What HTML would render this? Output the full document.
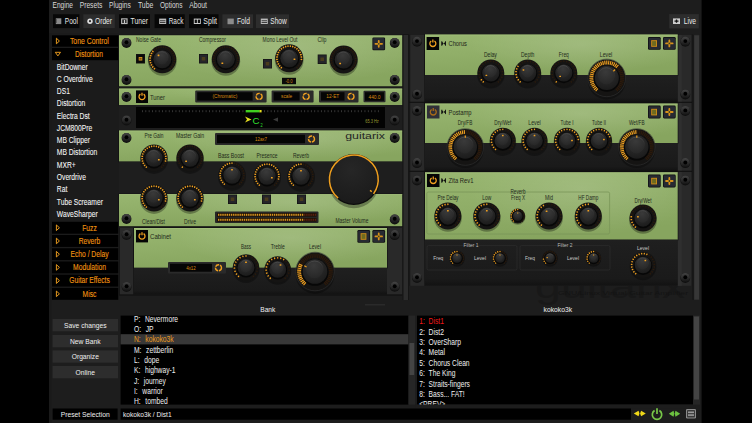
<!DOCTYPE html><html><head><meta charset="utf-8"><style>html,body{margin:0;padding:0;background:#000;overflow:hidden}svg{display:block}</style></head><body><svg width="752" height="423" viewBox="0 0 752 423" style="font-family:&quot;Liberation Sans&quot;, sans-serif">
<defs>
<linearGradient id="gg" x1="0" y1="0" x2="0.3" y2="1"><stop offset="0" stop-color="#98b670"/><stop offset="0.5" stop-color="#90ae68"/><stop offset="1" stop-color="#87a55f"/></linearGradient>
<radialGradient id="kg" cx="0.45" cy="0.3" r="0.75"><stop offset="0" stop-color="#333"/><stop offset="1" stop-color="#1a1a1a"/></radialGradient>
<radialGradient id="kc" cx="0.45" cy="0.25" r="0.8"><stop offset="0" stop-color="#3a3a3a"/><stop offset="1" stop-color="#262626"/></radialGradient>
<radialGradient id="kg2" cx="0.45" cy="0.3" r="0.75"><stop offset="0" stop-color="#262626"/><stop offset="1" stop-color="#1a1a1a"/></radialGradient>
<linearGradient id="sg" x1="0" y1="0" x2="0" y2="1"><stop offset="0" stop-color="#444"/><stop offset="0.55" stop-color="#2a2a2a"/><stop offset="1" stop-color="#121212"/></linearGradient>
<radialGradient id="gh" cx="0.62" cy="0.25" r="0.45" gradientTransform="translate(0.62 0.25) scale(1 1.6) translate(-0.62 -0.25)"><stop offset="0" stop-color="#fff" stop-opacity="0.13"/><stop offset="1" stop-color="#fff" stop-opacity="0"/></radialGradient>
<linearGradient id="bd" x1="0" y1="0" x2="0" y2="1"><stop offset="0" stop-color="#1f1f1f"/><stop offset="0.85" stop-color="#1a1a1a"/><stop offset="1" stop-color="#121212"/></linearGradient>
<linearGradient id="krim" x1="0" y1="0" x2="0" y2="1"><stop offset="0" stop-color="#555"/><stop offset="0.5" stop-color="#333" stop-opacity="0.3"/><stop offset="1" stop-color="#000" stop-opacity="0"/></linearGradient>
</defs>
<rect x="0.00" y="0.00" width="752.00" height="423.00" fill="#000" />
<rect x="49.00" y="0.00" width="652.60" height="423.00" fill="#1d1d1d" />
<text x="52.50" y="8.00" font-size="8.2" fill="#d8d8d8" text-anchor="start" textLength="20.50" lengthAdjust="spacingAndGlyphs" >Engine</text>
<text x="79.70" y="8.00" font-size="8.2" fill="#d8d8d8" text-anchor="start" textLength="22.70" lengthAdjust="spacingAndGlyphs" >Presets</text>
<text x="109.00" y="8.00" font-size="8.2" fill="#d8d8d8" text-anchor="start" textLength="21.80" lengthAdjust="spacingAndGlyphs" >Plugins</text>
<text x="137.90" y="8.00" font-size="8.2" fill="#d8d8d8" text-anchor="start" textLength="15.40" lengthAdjust="spacingAndGlyphs" >Tube</text>
<text x="160.00" y="8.00" font-size="8.2" fill="#d8d8d8" text-anchor="start" textLength="22.50" lengthAdjust="spacingAndGlyphs" >Options</text>
<text x="189.20" y="8.00" font-size="8.2" fill="#d8d8d8" text-anchor="start" textLength="17.80" lengthAdjust="spacingAndGlyphs" >About</text>
<rect x="53.00" y="14.30" width="26.40" height="13.80" fill="#070707" />
<rect x="55.80" y="18.30" width="5.50" height="5.80" fill="#8a8a8a" />
<rect x="55.80" y="19.50" width="1.20" height="1.00" fill="#333" />
<rect x="55.80" y="21.50" width="1.20" height="1.00" fill="#333" />
<text x="64.80" y="24.20" font-size="8.2" fill="#e8e8e8" text-anchor="start" textLength="13.10" lengthAdjust="spacingAndGlyphs" >Pool</text>
<rect x="83.30" y="14.30" width="31.50" height="13.80" fill="#2d2d2d" />
<circle cx="90.0" cy="21.2" r="2.7" fill="#e0e0e0"/>
<circle cx="90.0" cy="21.2" r="1.1" fill="#2d2d2d"/>
<text x="95.00" y="24.20" font-size="8.2" fill="#e8e8e8" text-anchor="start" textLength="17.00" lengthAdjust="spacingAndGlyphs" >Order</text>
<rect x="119.00" y="14.30" width="31.00" height="13.80" fill="#070707" />
<rect x="121.10" y="18.30" width="6.50" height="5.80" fill="#bbb" />
<rect x="122.20" y="19.40" width="4.30" height="3.60" fill="#222" />
<rect x="123.90" y="20.00" width="1.20" height="3.00" fill="#ccc" />
<text x="130.60" y="24.20" font-size="8.2" fill="#e8e8e8" text-anchor="start" textLength="17.30" lengthAdjust="spacingAndGlyphs" >Tuner</text>
<rect x="154.60" y="14.30" width="30.10" height="13.80" fill="#070707" />
<rect x="159.20" y="18.60" width="7.00" height="5.40" fill="#bbb" />
<rect x="160.00" y="20.30" width="5.40" height="0.90" fill="#333" />
<rect x="160.00" y="22.10" width="5.40" height="0.90" fill="#333" />
<text x="168.70" y="24.20" font-size="8.2" fill="#e8e8e8" text-anchor="start" textLength="14.70" lengthAdjust="spacingAndGlyphs" >Rack</text>
<rect x="189.00" y="14.30" width="29.50" height="13.80" fill="#070707" />
<rect x="193.80" y="18.60" width="7.00" height="5.40" fill="#ccc" />
<rect x="194.70" y="19.60" width="2.20" height="3.40" fill="#111" />
<rect x="197.80" y="19.60" width="2.20" height="3.40" fill="#111" />
<text x="203.30" y="24.20" font-size="8.2" fill="#e8e8e8" text-anchor="start" textLength="13.70" lengthAdjust="spacingAndGlyphs" >Split</text>
<rect x="222.40" y="14.30" width="30.60" height="13.80" fill="#2d2d2d" />
<rect x="227.50" y="18.60" width="6.30" height="5.60" fill="#8c8c8c" />
<text x="237.00" y="24.20" font-size="8.2" fill="#e8e8e8" text-anchor="start" textLength="13.00" lengthAdjust="spacingAndGlyphs" >Fold</text>
<rect x="256.00" y="14.30" width="33.00" height="13.80" fill="#2d2d2d" />
<rect x="260.80" y="18.60" width="7.00" height="5.40" fill="#bbb" />
<rect x="261.60" y="20.30" width="5.40" height="0.90" fill="#333" />
<rect x="261.60" y="22.10" width="5.40" height="0.90" fill="#333" />
<text x="270.30" y="24.20" font-size="8.2" fill="#e8e8e8" text-anchor="start" textLength="16.50" lengthAdjust="spacingAndGlyphs" >Show</text>
<rect x="669.20" y="14.10" width="29.60" height="14.30" fill="#2d2d2d" />
<rect x="673.00" y="18.40" width="7.00" height="5.60" fill="#ccc" />
<path d="M674.5,21.2 L678.5,21.2 M676.5,19.6 L676.5,22.8" stroke="#111" stroke-width="1.3"/>
<text x="683.80" y="24.20" font-size="8.2" fill="#e8e8e8" text-anchor="start" textLength="12.30" lengthAdjust="spacingAndGlyphs" >Live</text>
<rect x="49.00" y="33.00" width="2.50" height="390.00" fill="#1a1a1a" />
<rect x="51.50" y="33.00" width="67.00" height="267.00" fill="#1b1b1b" />
<rect x="52.00" y="35.30" width="66.20" height="11.40" fill="#000" />
<path d="M56.4,38.2 L59.4,41.0 L56.4,43.8 Z" fill="none" stroke="#f0a020" stroke-width="0.95"/>
<text x="69.90" y="43.80" font-size="8.3" fill="#f09410" text-anchor="start" textLength="38.90" lengthAdjust="spacingAndGlyphs" stroke="#f09410" stroke-width="0.12">Tone Control</text>
<rect x="52.00" y="48.00" width="66.20" height="12.20" fill="#000" />
<path d="M55.3,52.300000000000004 L60.5,52.300000000000004 L57.9,55.9 Z" fill="none" stroke="#f0a020" stroke-width="0.95"/>
<text x="75.00" y="56.90" font-size="8.3" fill="#f09410" text-anchor="start" textLength="28.00" lengthAdjust="spacingAndGlyphs" stroke="#f09410" stroke-width="0.12">Distortion</text>
<text x="56.80" y="69.60" font-size="8.3" fill="#f4f4f4" text-anchor="start" textLength="31.01" lengthAdjust="spacingAndGlyphs" stroke="#f4f4f4" stroke-width="0.08">BitDowner</text>
<text x="56.80" y="81.87" font-size="8.3" fill="#f4f4f4" text-anchor="start" textLength="35.86" lengthAdjust="spacingAndGlyphs" stroke="#f4f4f4" stroke-width="0.08">C Overdrive</text>
<text x="56.80" y="94.14" font-size="8.3" fill="#f4f4f4" text-anchor="start" textLength="13.08" lengthAdjust="spacingAndGlyphs" stroke="#f4f4f4" stroke-width="0.08">DS1</text>
<text x="56.80" y="106.41" font-size="8.3" fill="#f4f4f4" text-anchor="start" textLength="28.39" lengthAdjust="spacingAndGlyphs" stroke="#f4f4f4" stroke-width="0.08">Distortion</text>
<text x="56.80" y="118.68" font-size="8.3" fill="#f4f4f4" text-anchor="start" textLength="32.88" lengthAdjust="spacingAndGlyphs" stroke="#f4f4f4" stroke-width="0.08">Electra Dst</text>
<text x="56.80" y="130.95" font-size="8.3" fill="#f4f4f4" text-anchor="start" textLength="35.49" lengthAdjust="spacingAndGlyphs" stroke="#f4f4f4" stroke-width="0.08">JCM800Pre</text>
<text x="56.80" y="143.22" font-size="8.3" fill="#f4f4f4" text-anchor="start" textLength="33.25" lengthAdjust="spacingAndGlyphs" stroke="#f4f4f4" stroke-width="0.08">MB Clipper</text>
<text x="56.80" y="155.49" font-size="8.3" fill="#f4f4f4" text-anchor="start" textLength="40.35" lengthAdjust="spacingAndGlyphs" stroke="#f4f4f4" stroke-width="0.08">MB Distortion</text>
<text x="56.80" y="167.76" font-size="8.3" fill="#f4f4f4" text-anchor="start" textLength="18.87" lengthAdjust="spacingAndGlyphs" stroke="#f4f4f4" stroke-width="0.08">MXR+</text>
<text x="56.80" y="180.03" font-size="8.3" fill="#f4f4f4" text-anchor="start" textLength="29.14" lengthAdjust="spacingAndGlyphs" stroke="#f4f4f4" stroke-width="0.08">Overdrive</text>
<text x="56.80" y="192.30" font-size="8.3" fill="#f4f4f4" text-anchor="start" textLength="10.46" lengthAdjust="spacingAndGlyphs" stroke="#f4f4f4" stroke-width="0.08">Rat</text>
<text x="56.80" y="204.57" font-size="8.3" fill="#f4f4f4" text-anchor="start" textLength="46.08" lengthAdjust="spacingAndGlyphs" stroke="#f4f4f4" stroke-width="0.08">Tube Screamer</text>
<text x="56.80" y="216.84" font-size="8.3" fill="#f4f4f4" text-anchor="start" textLength="40.85" lengthAdjust="spacingAndGlyphs" stroke="#f4f4f4" stroke-width="0.08">WaveSharper</text>
<rect x="52.00" y="221.80" width="66.20" height="11.90" fill="#000" />
<path d="M56.4,224.95 L59.4,227.75 L56.4,230.55 Z" fill="none" stroke="#f0a020" stroke-width="0.95"/>
<text x="82.23" y="230.55" font-size="8.3" fill="#f09410" text-anchor="start" textLength="14.54" lengthAdjust="spacingAndGlyphs" stroke="#f09410" stroke-width="0.12">Fuzz</text>
<rect x="52.00" y="235.02" width="66.20" height="11.90" fill="#000" />
<path d="M56.4,238.17000000000002 L59.4,240.97000000000003 L56.4,243.77000000000004 Z" fill="none" stroke="#f0a020" stroke-width="0.95"/>
<text x="78.69" y="243.77" font-size="8.3" fill="#f09410" text-anchor="start" textLength="21.62" lengthAdjust="spacingAndGlyphs" stroke="#f09410" stroke-width="0.12">Reverb</text>
<rect x="52.00" y="248.24" width="66.20" height="11.90" fill="#000" />
<path d="M56.4,251.39 L59.4,254.19 L56.4,256.99 Z" fill="none" stroke="#f0a020" stroke-width="0.95"/>
<text x="70.49" y="256.99" font-size="8.3" fill="#f09410" text-anchor="start" textLength="38.03" lengthAdjust="spacingAndGlyphs" stroke="#f09410" stroke-width="0.12">Echo / Delay</text>
<rect x="52.00" y="261.46" width="66.20" height="11.90" fill="#000" />
<path d="M56.4,264.61 L59.4,267.41 L56.4,270.21000000000004 Z" fill="none" stroke="#f0a020" stroke-width="0.95"/>
<text x="73.09" y="270.21" font-size="8.3" fill="#f09410" text-anchor="start" textLength="32.81" lengthAdjust="spacingAndGlyphs" stroke="#f09410" stroke-width="0.12">Modulation</text>
<rect x="52.00" y="274.68" width="66.20" height="11.90" fill="#000" />
<path d="M56.4,277.83 L59.4,280.63 L56.4,283.43 Z" fill="none" stroke="#f0a020" stroke-width="0.95"/>
<text x="69.24" y="283.43" font-size="8.3" fill="#f09410" text-anchor="start" textLength="40.51" lengthAdjust="spacingAndGlyphs" stroke="#f09410" stroke-width="0.12">Guitar Effects</text>
<rect x="52.00" y="287.90" width="66.20" height="11.90" fill="#000" />
<path d="M56.4,291.05 L59.4,293.85 L56.4,296.65000000000003 Z" fill="none" stroke="#f0a020" stroke-width="0.95"/>
<text x="82.61" y="296.65" font-size="8.3" fill="#f09410" text-anchor="start" textLength="13.79" lengthAdjust="spacingAndGlyphs" stroke="#f09410" stroke-width="0.12">Misc</text>
<rect x="119.00" y="34.00" width="283.50" height="261.00" fill="#1c1c1c" />
<rect x="118.40" y="34.90" width="284.60" height="52.00" fill="#101010" />
<rect x="119.00" y="35.50" width="283.40" height="50.80" fill="url(#gg)" />
<rect x="119.00" y="35.50" width="283.40" height="50.80" fill="url(#gh)" />
<rect x="119.00" y="35.50" width="283.40" height="0.80" fill="#a4c07c" />
<circle cx="126.5" cy="43.0" r="4.8999999999999995" fill="#101010"/>
<circle cx="126.5" cy="42.5" r="4.6" fill="url(#sg)"/>
<circle cx="126.5" cy="42.3" r="1.93" fill="#000"/>
<circle cx="126.5" cy="80.0" r="4.8999999999999995" fill="#101010"/>
<circle cx="126.5" cy="79.5" r="4.6" fill="url(#sg)"/>
<circle cx="126.5" cy="79.3" r="1.93" fill="#000"/>
<circle cx="394.7" cy="43.0" r="4.8999999999999995" fill="#101010"/>
<circle cx="394.7" cy="42.5" r="4.6" fill="url(#sg)"/>
<circle cx="394.7" cy="42.3" r="1.93" fill="#000"/>
<circle cx="394.7" cy="80.0" r="4.8999999999999995" fill="#101010"/>
<circle cx="394.7" cy="79.5" r="4.6" fill="url(#sg)"/>
<circle cx="394.7" cy="79.3" r="1.93" fill="#000"/>
<text x="136.00" y="41.80" font-size="6.4" fill="#222a1a" text-anchor="start" textLength="25.00" lengthAdjust="spacingAndGlyphs" >Noise Gate</text>
<text x="199.00" y="41.80" font-size="6.4" fill="#222a1a" text-anchor="start" textLength="27.00" lengthAdjust="spacingAndGlyphs" >Compressor</text>
<text x="262.50" y="41.80" font-size="6.4" fill="#222a1a" text-anchor="start" textLength="35.00" lengthAdjust="spacingAndGlyphs" >Mono Level Out</text>
<text x="317.50" y="41.80" font-size="6.4" fill="#222a1a" text-anchor="start" textLength="9.00" lengthAdjust="spacingAndGlyphs" >Clip</text>
<rect x="136.00" y="54.00" width="9.00" height="9.50" fill="#141414" />
<rect x="136.70" y="54.70" width="7.60" height="8.10" fill="#0a0a0a" />
<rect x="138.70" y="57.00" width="3.60" height="3.50" fill="#e09a20" />
<rect x="139.40" y="57.80" width="2.20" height="1.90" fill="#7a5010" />
<circle cx="162.3" cy="61.26" r="14.42" fill="#000" opacity="0.3"/>
<circle cx="162.3" cy="59.3" r="14" fill="#151413"/>
<line x1="154.61" y1="68.47" x2="154.25" y2="68.90" stroke="#f0a020" stroke-width="1.40" stroke-linecap="round"/>
<line x1="152.97" y1="66.80" x2="152.53" y2="67.15" stroke="#f0a020" stroke-width="1.40" stroke-linecap="round"/>
<line x1="151.69" y1="64.85" x2="151.20" y2="65.11" stroke="#f0a020" stroke-width="1.40" stroke-linecap="round"/>
<line x1="150.82" y1="62.68" x2="150.28" y2="62.84" stroke="#f0a020" stroke-width="1.40" stroke-linecap="round"/>
<line x1="150.38" y1="60.38" x2="149.82" y2="60.44" stroke="#f0a020" stroke-width="1.40" stroke-linecap="round"/>
<line x1="150.40" y1="58.05" x2="149.84" y2="57.99" stroke="#f0a020" stroke-width="1.40" stroke-linecap="round"/>
<line x1="150.87" y1="55.76" x2="150.33" y2="55.59" stroke="#f0a020" stroke-width="1.40" stroke-linecap="round"/>
<line x1="151.77" y1="53.61" x2="151.28" y2="53.34" stroke="#f0a020" stroke-width="1.40" stroke-linecap="round"/>
<line x1="153.08" y1="51.67" x2="152.65" y2="51.31" stroke="#f0a020" stroke-width="1.40" stroke-linecap="round"/>
<line x1="154.73" y1="50.02" x2="154.38" y2="49.59" stroke="#2a1a0c" stroke-width="1.40" stroke-linecap="round"/>
<line x1="156.68" y1="48.73" x2="156.42" y2="48.24" stroke="#2a1a0c" stroke-width="1.40" stroke-linecap="round"/>
<line x1="158.84" y1="47.84" x2="158.68" y2="47.30" stroke="#2a1a0c" stroke-width="1.40" stroke-linecap="round"/>
<line x1="161.13" y1="47.39" x2="161.08" y2="46.83" stroke="#2a1a0c" stroke-width="1.40" stroke-linecap="round"/>
<line x1="163.47" y1="47.39" x2="163.52" y2="46.83" stroke="#2a1a0c" stroke-width="1.40" stroke-linecap="round"/>
<line x1="165.76" y1="47.84" x2="165.92" y2="47.30" stroke="#2a1a0c" stroke-width="1.40" stroke-linecap="round"/>
<line x1="167.92" y1="48.73" x2="168.18" y2="48.24" stroke="#2a1a0c" stroke-width="1.40" stroke-linecap="round"/>
<line x1="169.87" y1="50.02" x2="170.22" y2="49.59" stroke="#2a1a0c" stroke-width="1.40" stroke-linecap="round"/>
<line x1="171.52" y1="51.67" x2="171.95" y2="51.31" stroke="#2a1a0c" stroke-width="1.40" stroke-linecap="round"/>
<line x1="172.83" y1="53.61" x2="173.32" y2="53.34" stroke="#2a1a0c" stroke-width="1.40" stroke-linecap="round"/>
<line x1="173.73" y1="55.76" x2="174.27" y2="55.59" stroke="#2a1a0c" stroke-width="1.40" stroke-linecap="round"/>
<line x1="174.20" y1="58.05" x2="174.76" y2="57.99" stroke="#2a1a0c" stroke-width="1.40" stroke-linecap="round"/>
<line x1="174.22" y1="60.38" x2="174.78" y2="60.44" stroke="#2a1a0c" stroke-width="1.40" stroke-linecap="round"/>
<line x1="173.78" y1="62.68" x2="174.32" y2="62.84" stroke="#2a1a0c" stroke-width="1.40" stroke-linecap="round"/>
<line x1="172.91" y1="64.85" x2="173.40" y2="65.11" stroke="#2a1a0c" stroke-width="1.40" stroke-linecap="round"/>
<line x1="171.63" y1="66.80" x2="172.07" y2="67.15" stroke="#2a1a0c" stroke-width="1.40" stroke-linecap="round"/>
<line x1="169.99" y1="68.47" x2="170.35" y2="68.90" stroke="#2a1a0c" stroke-width="1.40" stroke-linecap="round"/>
<circle cx="162.3" cy="60.00" r="9.96" fill="#070707"/>
<circle cx="162.3" cy="59.3" r="8.96" fill="url(#kg)"/>
<circle cx="162.03" cy="57.96" r="6.27" fill="url(#kc)" stroke="url(#krim)" stroke-width="0.7"/>
<rect x="157.60" y="54.58" width="1.82" height="1.55" rx="0.3" fill="#f0a020"/>
<rect x="199.00" y="54.00" width="9.00" height="9.50" fill="#141414" />
<rect x="199.70" y="54.70" width="7.60" height="8.10" fill="#25252a" />
<rect x="201.70" y="57.00" width="3.60" height="3.50" fill="#4a3c1c" />
<circle cx="225.8" cy="61.26" r="14.42" fill="#000" opacity="0.3"/>
<circle cx="225.8" cy="59.3" r="14" fill="#151413"/>
<line x1="218.11" y1="68.47" x2="217.75" y2="68.90" stroke="#2a1a0c" stroke-width="1.40" stroke-linecap="round"/>
<line x1="216.47" y1="66.80" x2="216.03" y2="67.15" stroke="#2a1a0c" stroke-width="1.40" stroke-linecap="round"/>
<line x1="215.19" y1="64.85" x2="214.70" y2="65.11" stroke="#2a1a0c" stroke-width="1.40" stroke-linecap="round"/>
<line x1="214.32" y1="62.68" x2="213.78" y2="62.84" stroke="#2a1a0c" stroke-width="1.40" stroke-linecap="round"/>
<line x1="213.88" y1="60.38" x2="213.32" y2="60.44" stroke="#2a1a0c" stroke-width="1.40" stroke-linecap="round"/>
<line x1="213.90" y1="58.05" x2="213.34" y2="57.99" stroke="#2a1a0c" stroke-width="1.40" stroke-linecap="round"/>
<line x1="214.37" y1="55.76" x2="213.83" y2="55.59" stroke="#2a1a0c" stroke-width="1.40" stroke-linecap="round"/>
<line x1="215.27" y1="53.61" x2="214.78" y2="53.34" stroke="#2a1a0c" stroke-width="1.40" stroke-linecap="round"/>
<line x1="216.58" y1="51.67" x2="216.15" y2="51.31" stroke="#2a1a0c" stroke-width="1.40" stroke-linecap="round"/>
<line x1="218.23" y1="50.02" x2="217.88" y2="49.59" stroke="#2a1a0c" stroke-width="1.40" stroke-linecap="round"/>
<line x1="220.18" y1="48.73" x2="219.92" y2="48.24" stroke="#2a1a0c" stroke-width="1.40" stroke-linecap="round"/>
<line x1="222.34" y1="47.84" x2="222.18" y2="47.30" stroke="#2a1a0c" stroke-width="1.40" stroke-linecap="round"/>
<line x1="224.63" y1="47.39" x2="224.58" y2="46.83" stroke="#2a1a0c" stroke-width="1.40" stroke-linecap="round"/>
<line x1="226.97" y1="47.39" x2="227.02" y2="46.83" stroke="#2a1a0c" stroke-width="1.40" stroke-linecap="round"/>
<line x1="229.26" y1="47.84" x2="229.42" y2="47.30" stroke="#2a1a0c" stroke-width="1.40" stroke-linecap="round"/>
<line x1="231.42" y1="48.73" x2="231.68" y2="48.24" stroke="#2a1a0c" stroke-width="1.40" stroke-linecap="round"/>
<line x1="233.37" y1="50.02" x2="233.72" y2="49.59" stroke="#2a1a0c" stroke-width="1.40" stroke-linecap="round"/>
<line x1="235.02" y1="51.67" x2="235.45" y2="51.31" stroke="#2a1a0c" stroke-width="1.40" stroke-linecap="round"/>
<line x1="236.33" y1="53.61" x2="236.82" y2="53.34" stroke="#2a1a0c" stroke-width="1.40" stroke-linecap="round"/>
<line x1="237.23" y1="55.76" x2="237.77" y2="55.59" stroke="#2a1a0c" stroke-width="1.40" stroke-linecap="round"/>
<line x1="237.70" y1="58.05" x2="238.26" y2="57.99" stroke="#2a1a0c" stroke-width="1.40" stroke-linecap="round"/>
<line x1="237.72" y1="60.38" x2="238.28" y2="60.44" stroke="#2a1a0c" stroke-width="1.40" stroke-linecap="round"/>
<line x1="237.28" y1="62.68" x2="237.82" y2="62.84" stroke="#2a1a0c" stroke-width="1.40" stroke-linecap="round"/>
<line x1="236.41" y1="64.85" x2="236.90" y2="65.11" stroke="#2a1a0c" stroke-width="1.40" stroke-linecap="round"/>
<line x1="235.13" y1="66.80" x2="235.57" y2="67.15" stroke="#2a1a0c" stroke-width="1.40" stroke-linecap="round"/>
<line x1="233.49" y1="68.47" x2="233.85" y2="68.90" stroke="#2a1a0c" stroke-width="1.40" stroke-linecap="round"/>
<circle cx="225.8" cy="60.00" r="9.96" fill="#070707"/>
<circle cx="225.8" cy="59.3" r="8.96" fill="url(#kg)"/>
<circle cx="225.53" cy="57.96" r="6.27" fill="url(#kc)" stroke="url(#krim)" stroke-width="0.7"/>
<rect x="221.43" y="62.51" width="1.82" height="1.55" rx="0.3" fill="#f0a020"/>
<rect x="263.00" y="59.00" width="9.00" height="9.50" fill="#141414" />
<rect x="263.70" y="59.70" width="7.60" height="8.10" fill="#25252a" />
<rect x="265.70" y="62.00" width="3.60" height="3.50" fill="#4a3c1c" />
<circle cx="289.2" cy="60.26" r="14.42" fill="#000" opacity="0.3"/>
<circle cx="289.2" cy="58.3" r="14" fill="#151413"/>
<line x1="281.51" y1="67.47" x2="281.15" y2="67.90" stroke="#f0a020" stroke-width="1.40" stroke-linecap="round"/>
<line x1="279.87" y1="65.80" x2="279.43" y2="66.15" stroke="#f0a020" stroke-width="1.40" stroke-linecap="round"/>
<line x1="278.59" y1="63.85" x2="278.10" y2="64.11" stroke="#f0a020" stroke-width="1.40" stroke-linecap="round"/>
<line x1="277.72" y1="61.68" x2="277.18" y2="61.84" stroke="#f0a020" stroke-width="1.40" stroke-linecap="round"/>
<line x1="277.28" y1="59.38" x2="276.72" y2="59.44" stroke="#f0a020" stroke-width="1.40" stroke-linecap="round"/>
<line x1="277.30" y1="57.05" x2="276.74" y2="56.99" stroke="#f0a020" stroke-width="1.40" stroke-linecap="round"/>
<line x1="277.77" y1="54.76" x2="277.23" y2="54.59" stroke="#f0a020" stroke-width="1.40" stroke-linecap="round"/>
<line x1="278.67" y1="52.61" x2="278.18" y2="52.34" stroke="#f0a020" stroke-width="1.40" stroke-linecap="round"/>
<line x1="279.98" y1="50.67" x2="279.55" y2="50.31" stroke="#f0a020" stroke-width="1.40" stroke-linecap="round"/>
<line x1="281.63" y1="49.02" x2="281.28" y2="48.59" stroke="#f0a020" stroke-width="1.40" stroke-linecap="round"/>
<line x1="283.58" y1="47.73" x2="283.32" y2="47.24" stroke="#f0a020" stroke-width="1.40" stroke-linecap="round"/>
<line x1="285.74" y1="46.84" x2="285.58" y2="46.30" stroke="#f0a020" stroke-width="1.40" stroke-linecap="round"/>
<line x1="288.03" y1="46.39" x2="287.98" y2="45.83" stroke="#f0a020" stroke-width="1.40" stroke-linecap="round"/>
<line x1="290.37" y1="46.39" x2="290.42" y2="45.83" stroke="#f0a020" stroke-width="1.40" stroke-linecap="round"/>
<line x1="292.66" y1="46.84" x2="292.82" y2="46.30" stroke="#f0a020" stroke-width="1.40" stroke-linecap="round"/>
<line x1="294.82" y1="47.73" x2="295.08" y2="47.24" stroke="#f0a020" stroke-width="1.40" stroke-linecap="round"/>
<line x1="296.77" y1="49.02" x2="297.12" y2="48.59" stroke="#f0a020" stroke-width="1.40" stroke-linecap="round"/>
<line x1="298.42" y1="50.67" x2="298.85" y2="50.31" stroke="#f0a020" stroke-width="1.40" stroke-linecap="round"/>
<line x1="299.73" y1="52.61" x2="300.22" y2="52.34" stroke="#f0a020" stroke-width="1.40" stroke-linecap="round"/>
<line x1="300.63" y1="54.76" x2="301.17" y2="54.59" stroke="#f0a020" stroke-width="1.40" stroke-linecap="round"/>
<line x1="301.10" y1="57.05" x2="301.66" y2="56.99" stroke="#f0a020" stroke-width="1.40" stroke-linecap="round"/>
<line x1="301.12" y1="59.38" x2="301.68" y2="59.44" stroke="#f0a020" stroke-width="1.40" stroke-linecap="round"/>
<line x1="300.68" y1="61.68" x2="301.22" y2="61.84" stroke="#2a1a0c" stroke-width="1.40" stroke-linecap="round"/>
<line x1="299.81" y1="63.85" x2="300.30" y2="64.11" stroke="#2a1a0c" stroke-width="1.40" stroke-linecap="round"/>
<line x1="298.53" y1="65.80" x2="298.97" y2="66.15" stroke="#2a1a0c" stroke-width="1.40" stroke-linecap="round"/>
<line x1="296.89" y1="67.47" x2="297.25" y2="67.90" stroke="#2a1a0c" stroke-width="1.40" stroke-linecap="round"/>
<circle cx="289.2" cy="59.00" r="9.96" fill="#070707"/>
<circle cx="289.2" cy="58.3" r="8.96" fill="url(#kg)"/>
<circle cx="288.93" cy="56.96" r="6.27" fill="url(#kc)" stroke="url(#krim)" stroke-width="0.7"/>
<rect x="293.57" y="58.40" width="1.82" height="1.55" rx="0.3" fill="#f0a020"/>
<rect x="317.70" y="54.50" width="9.00" height="9.50" fill="#141414" />
<rect x="318.40" y="55.20" width="7.60" height="8.10" fill="#25252a" />
<rect x="320.40" y="57.50" width="3.60" height="3.50" fill="#4a3c1c" />
<circle cx="343.6" cy="61.56" r="14.42" fill="#000" opacity="0.3"/>
<circle cx="343.6" cy="59.6" r="14" fill="#151413"/>
<line x1="335.91" y1="68.77" x2="335.55" y2="69.20" stroke="#2a1a0c" stroke-width="1.40" stroke-linecap="round"/>
<line x1="334.27" y1="67.10" x2="333.83" y2="67.45" stroke="#2a1a0c" stroke-width="1.40" stroke-linecap="round"/>
<line x1="332.99" y1="65.15" x2="332.50" y2="65.41" stroke="#2a1a0c" stroke-width="1.40" stroke-linecap="round"/>
<line x1="332.12" y1="62.98" x2="331.58" y2="63.14" stroke="#2a1a0c" stroke-width="1.40" stroke-linecap="round"/>
<line x1="331.68" y1="60.68" x2="331.12" y2="60.74" stroke="#2a1a0c" stroke-width="1.40" stroke-linecap="round"/>
<line x1="331.70" y1="58.35" x2="331.14" y2="58.29" stroke="#2a1a0c" stroke-width="1.40" stroke-linecap="round"/>
<line x1="332.17" y1="56.06" x2="331.63" y2="55.89" stroke="#2a1a0c" stroke-width="1.40" stroke-linecap="round"/>
<line x1="333.07" y1="53.91" x2="332.58" y2="53.64" stroke="#2a1a0c" stroke-width="1.40" stroke-linecap="round"/>
<line x1="334.38" y1="51.97" x2="333.95" y2="51.61" stroke="#2a1a0c" stroke-width="1.40" stroke-linecap="round"/>
<line x1="336.03" y1="50.32" x2="335.68" y2="49.89" stroke="#2a1a0c" stroke-width="1.40" stroke-linecap="round"/>
<line x1="337.98" y1="49.03" x2="337.72" y2="48.54" stroke="#2a1a0c" stroke-width="1.40" stroke-linecap="round"/>
<line x1="340.14" y1="48.14" x2="339.98" y2="47.60" stroke="#2a1a0c" stroke-width="1.40" stroke-linecap="round"/>
<line x1="342.43" y1="47.69" x2="342.38" y2="47.13" stroke="#2a1a0c" stroke-width="1.40" stroke-linecap="round"/>
<line x1="344.77" y1="47.69" x2="344.82" y2="47.13" stroke="#2a1a0c" stroke-width="1.40" stroke-linecap="round"/>
<line x1="347.06" y1="48.14" x2="347.22" y2="47.60" stroke="#2a1a0c" stroke-width="1.40" stroke-linecap="round"/>
<line x1="349.22" y1="49.03" x2="349.48" y2="48.54" stroke="#2a1a0c" stroke-width="1.40" stroke-linecap="round"/>
<line x1="351.17" y1="50.32" x2="351.52" y2="49.89" stroke="#2a1a0c" stroke-width="1.40" stroke-linecap="round"/>
<line x1="352.82" y1="51.97" x2="353.25" y2="51.61" stroke="#2a1a0c" stroke-width="1.40" stroke-linecap="round"/>
<line x1="354.13" y1="53.91" x2="354.62" y2="53.64" stroke="#2a1a0c" stroke-width="1.40" stroke-linecap="round"/>
<line x1="355.03" y1="56.06" x2="355.57" y2="55.89" stroke="#2a1a0c" stroke-width="1.40" stroke-linecap="round"/>
<line x1="355.50" y1="58.35" x2="356.06" y2="58.29" stroke="#2a1a0c" stroke-width="1.40" stroke-linecap="round"/>
<line x1="355.52" y1="60.68" x2="356.08" y2="60.74" stroke="#2a1a0c" stroke-width="1.40" stroke-linecap="round"/>
<line x1="355.08" y1="62.98" x2="355.62" y2="63.14" stroke="#2a1a0c" stroke-width="1.40" stroke-linecap="round"/>
<line x1="354.21" y1="65.15" x2="354.70" y2="65.41" stroke="#2a1a0c" stroke-width="1.40" stroke-linecap="round"/>
<line x1="352.93" y1="67.10" x2="353.37" y2="67.45" stroke="#2a1a0c" stroke-width="1.40" stroke-linecap="round"/>
<line x1="351.29" y1="68.77" x2="351.65" y2="69.20" stroke="#2a1a0c" stroke-width="1.40" stroke-linecap="round"/>
<circle cx="343.6" cy="60.30" r="9.96" fill="#070707"/>
<circle cx="343.6" cy="59.6" r="8.96" fill="url(#kg)"/>
<circle cx="343.33" cy="58.26" r="6.27" fill="url(#kc)" stroke="url(#krim)" stroke-width="0.7"/>
<rect x="339.23" y="62.81" width="1.82" height="1.55" rx="0.3" fill="#f0a020"/>
<rect x="282.00" y="77.80" width="14.00" height="6.40" fill="#0a0a0a" />
<text x="289.00" y="82.60" font-size="4.8" fill="#d08010" text-anchor="middle" textLength="7.03" lengthAdjust="spacingAndGlyphs" >-0.0</text>
<rect x="372.4" y="37.4" width="12.7" height="12.8" rx="1.3" fill="#0e0e10"/>
<rect x="373.09999999999997" y="38.1" width="11.3" height="11.4" rx="1" fill="#272a32"/>
<path d="M375.45,43.8 L382.05,43.8 M378.75,40.8 L378.75,46.8" stroke="#d8921a" stroke-width="1.8" stroke-linecap="round"/>
<circle cx="378.75" cy="43.8" r="0.9" fill="#404020"/>
<rect x="118.40" y="88.00" width="284.60" height="17.60" fill="#101010" />
<rect x="119.00" y="88.60" width="283.40" height="16.40" fill="url(#gg)" />
<rect x="119.00" y="88.60" width="283.40" height="16.40" fill="url(#gh)" />
<rect x="119.00" y="88.60" width="283.40" height="0.80" fill="#a4c07c" />
<rect x="119.00" y="105.00" width="283.40" height="24.60" fill="#1e1e1e" />
<circle cx="126.5" cy="97.0" r="4.8999999999999995" fill="#101010"/>
<circle cx="126.5" cy="96.5" r="4.6" fill="url(#sg)"/>
<circle cx="126.5" cy="96.3" r="1.93" fill="#000"/>
<circle cx="126.5" cy="120.5" r="4.8999999999999995" fill="#101010"/>
<circle cx="126.5" cy="120" r="4.6" fill="url(#sg)"/>
<circle cx="126.5" cy="119.8" r="1.93" fill="#000"/>
<circle cx="394.7" cy="97.0" r="4.8999999999999995" fill="#101010"/>
<circle cx="394.7" cy="96.5" r="4.6" fill="url(#sg)"/>
<circle cx="394.7" cy="96.3" r="1.93" fill="#000"/>
<circle cx="394.7" cy="120.5" r="4.8999999999999995" fill="#101010"/>
<circle cx="394.7" cy="120" r="4.6" fill="url(#sg)"/>
<circle cx="394.7" cy="119.8" r="1.93" fill="#000"/>
<rect x="136.00" y="90.40" width="12.00" height="12.60" fill="#050505" />
<path d="M140.41,94.16 A3.0,3.0 0 1 0 143.59,94.16" fill="none" stroke="#f0a020" stroke-width="1.3"/>
<line x1="142.0" y1="92.8" x2="142.0" y2="95.8" stroke="#f0a020" stroke-width="1.3"/>
<text x="150.00" y="99.60" font-size="7.2" fill="#222a1a" text-anchor="start" textLength="15.00" lengthAdjust="spacingAndGlyphs" >Tuner</text>
<rect x="195.2" y="90.4" width="71.4" height="12" rx="1" fill="#2a2a2a"/>
<rect x="197.20" y="92.20" width="55.40" height="8.40" fill="#050505" />
<text x="224.90" y="98.30" font-size="5.6" fill="#d88a10" text-anchor="middle" textLength="24.86" lengthAdjust="spacingAndGlyphs" >(Chromatic)</text>
<circle cx="259.1" cy="96.4" r="3.0" fill="none" stroke="#f0a020" stroke-width="1.4" stroke-dasharray="4.2 0.9"/>
<rect x="271.6" y="90.4" width="42" height="12" rx="1" fill="#2a2a2a"/>
<rect x="273.60" y="92.20" width="26.00" height="8.40" fill="#050505" />
<text x="286.60" y="98.30" font-size="5.6" fill="#d88a10" text-anchor="middle" textLength="11.11" lengthAdjust="spacingAndGlyphs" >scale</text>
<circle cx="306.1" cy="96.4" r="3.0" fill="none" stroke="#f0a020" stroke-width="1.4" stroke-dasharray="4.2 0.9"/>
<rect x="319" y="90.4" width="39.5" height="12" rx="1" fill="#2a2a2a"/>
<rect x="321.00" y="92.20" width="23.50" height="8.40" fill="#050505" />
<text x="332.75" y="98.30" font-size="5.6" fill="#d88a10" text-anchor="middle" textLength="12.96" lengthAdjust="spacingAndGlyphs" >12-ET</text>
<circle cx="351.0" cy="96.4" r="3.0" fill="none" stroke="#f0a020" stroke-width="1.4" stroke-dasharray="4.2 0.9"/>
<rect x="363.5" y="90.8" width="22" height="11.4" rx="1" fill="#2a2a2a"/>
<rect x="365.00" y="92.20" width="19.00" height="8.60" fill="#050505" />
<text x="374.50" y="98.60" font-size="5.4" fill="#d88a10" text-anchor="middle" textLength="12.00" lengthAdjust="spacingAndGlyphs" >440.0</text>
<rect x="136.00" y="107.00" width="249.00" height="21.00" fill="#030303" />
<rect x="142.00" y="110.20" width="0.90" height="2.00" fill="#3a3a3a" />
<rect x="145.35" y="110.20" width="0.90" height="2.00" fill="#3a3a3a" />
<rect x="148.70" y="110.20" width="0.90" height="2.00" fill="#3a3a3a" />
<rect x="152.05" y="110.20" width="0.90" height="2.00" fill="#3a3a3a" />
<rect x="155.40" y="110.20" width="0.90" height="2.00" fill="#3a3a3a" />
<rect x="158.75" y="110.20" width="0.90" height="2.00" fill="#3a3a3a" />
<rect x="162.10" y="110.20" width="0.90" height="2.00" fill="#3a3a3a" />
<rect x="165.45" y="110.20" width="0.90" height="2.00" fill="#3a3a3a" />
<rect x="168.80" y="110.20" width="0.90" height="2.00" fill="#3a3a3a" />
<rect x="172.15" y="110.20" width="0.90" height="2.00" fill="#3a3a3a" />
<rect x="175.50" y="110.20" width="0.90" height="2.00" fill="#3a3a3a" />
<rect x="178.85" y="110.20" width="0.90" height="2.00" fill="#3a3a3a" />
<rect x="182.20" y="110.20" width="0.90" height="2.00" fill="#3a3a3a" />
<rect x="185.55" y="110.20" width="0.90" height="2.00" fill="#3a3a3a" />
<rect x="188.90" y="110.20" width="0.90" height="2.00" fill="#3a3a3a" />
<rect x="192.25" y="110.20" width="0.90" height="2.00" fill="#3a3a3a" />
<rect x="195.60" y="110.20" width="0.90" height="2.00" fill="#3a3a3a" />
<rect x="198.95" y="110.20" width="0.90" height="2.00" fill="#3a3a3a" />
<rect x="202.30" y="110.20" width="0.90" height="2.00" fill="#3a3a3a" />
<rect x="205.65" y="110.20" width="0.90" height="2.00" fill="#3a3a3a" />
<rect x="209.00" y="110.20" width="0.90" height="2.00" fill="#3a3a3a" />
<rect x="212.35" y="110.20" width="0.90" height="2.00" fill="#3a3a3a" />
<rect x="215.70" y="110.20" width="0.90" height="2.00" fill="#3a3a3a" />
<rect x="219.05" y="110.20" width="0.90" height="2.00" fill="#3a3a3a" />
<rect x="222.40" y="110.20" width="0.90" height="2.00" fill="#3a3a3a" />
<rect x="225.75" y="110.20" width="0.90" height="2.00" fill="#3a3a3a" />
<rect x="229.10" y="110.20" width="0.90" height="2.00" fill="#3a3a3a" />
<rect x="232.45" y="110.20" width="0.90" height="2.00" fill="#3a3a3a" />
<rect x="235.80" y="110.20" width="0.90" height="2.00" fill="#3a3a3a" />
<rect x="239.15" y="110.20" width="0.90" height="2.00" fill="#3a3a3a" />
<rect x="242.50" y="110.20" width="0.90" height="2.00" fill="#3a3a3a" />
<rect x="264.00" y="110.20" width="0.90" height="2.00" fill="#3a3a3a" />
<rect x="267.35" y="110.20" width="0.90" height="2.00" fill="#3a3a3a" />
<rect x="270.70" y="110.20" width="0.90" height="2.00" fill="#3a3a3a" />
<rect x="274.05" y="110.20" width="0.90" height="2.00" fill="#3a3a3a" />
<rect x="277.40" y="110.20" width="0.90" height="2.00" fill="#3a3a3a" />
<rect x="280.75" y="110.20" width="0.90" height="2.00" fill="#3a3a3a" />
<rect x="284.10" y="110.20" width="0.90" height="2.00" fill="#3a3a3a" />
<rect x="287.45" y="110.20" width="0.90" height="2.00" fill="#3a3a3a" />
<rect x="290.80" y="110.20" width="0.90" height="2.00" fill="#3a3a3a" />
<rect x="294.15" y="110.20" width="0.90" height="2.00" fill="#3a3a3a" />
<rect x="297.50" y="110.20" width="0.90" height="2.00" fill="#3a3a3a" />
<rect x="300.85" y="110.20" width="0.90" height="2.00" fill="#3a3a3a" />
<rect x="304.20" y="110.20" width="0.90" height="2.00" fill="#3a3a3a" />
<rect x="307.55" y="110.20" width="0.90" height="2.00" fill="#3a3a3a" />
<rect x="310.90" y="110.20" width="0.90" height="2.00" fill="#3a3a3a" />
<rect x="314.25" y="110.20" width="0.90" height="2.00" fill="#3a3a3a" />
<rect x="317.60" y="110.20" width="0.90" height="2.00" fill="#3a3a3a" />
<rect x="320.95" y="110.20" width="0.90" height="2.00" fill="#3a3a3a" />
<rect x="324.30" y="110.20" width="0.90" height="2.00" fill="#3a3a3a" />
<rect x="327.65" y="110.20" width="0.90" height="2.00" fill="#3a3a3a" />
<rect x="331.00" y="110.20" width="0.90" height="2.00" fill="#3a3a3a" />
<rect x="334.35" y="110.20" width="0.90" height="2.00" fill="#3a3a3a" />
<rect x="337.70" y="110.20" width="0.90" height="2.00" fill="#3a3a3a" />
<rect x="341.05" y="110.20" width="0.90" height="2.00" fill="#3a3a3a" />
<rect x="344.40" y="110.20" width="0.90" height="2.00" fill="#3a3a3a" />
<rect x="347.75" y="110.20" width="0.90" height="2.00" fill="#3a3a3a" />
<rect x="351.10" y="110.20" width="0.90" height="2.00" fill="#3a3a3a" />
<rect x="354.45" y="110.20" width="0.90" height="2.00" fill="#3a3a3a" />
<rect x="357.80" y="110.20" width="0.90" height="2.00" fill="#3a3a3a" />
<rect x="361.15" y="110.20" width="0.90" height="2.00" fill="#3a3a3a" />
<rect x="364.50" y="110.20" width="0.90" height="2.00" fill="#3a3a3a" />
<rect x="367.85" y="110.20" width="0.90" height="2.00" fill="#3a3a3a" />
<rect x="371.20" y="110.20" width="0.90" height="2.00" fill="#3a3a3a" />
<rect x="374.55" y="110.20" width="0.90" height="2.00" fill="#3a3a3a" />
<rect x="377.90" y="110.20" width="0.90" height="2.00" fill="#3a3a3a" />
<rect x="245.70" y="110.00" width="14.00" height="2.40" fill="#40d020" />
<rect x="259.60" y="110.00" width="2.00" height="2.40" fill="#e8e020" />
<text x="256.00" y="124.20" font-size="9.8" fill="#30e030" text-anchor="middle" textLength="7.00" lengthAdjust="spacingAndGlyphs" >C</text>
<text x="260.50" y="126.50" font-size="4.5" fill="#30e030" text-anchor="start" textLength="2.13" lengthAdjust="spacingAndGlyphs" >2</text>
<path d="M245,116.5 L251.5,119.6 L245,122.6 L247,119.6 Z" fill="#e8e020"/>
<path d="M278,117.5 L273,119.6 L278,121.7 Z" fill="#3a3a3a"/>
<text x="372.00" y="122.80" font-size="4.6" fill="#9a9a30" text-anchor="middle" textLength="13.47" lengthAdjust="spacingAndGlyphs" >65.3 Hz</text>
<rect x="118.40" y="130.00" width="284.60" height="32.20" fill="#101010" />
<rect x="119.00" y="130.60" width="283.40" height="31.00" fill="url(#gg)" />
<rect x="119.00" y="130.60" width="283.40" height="31.00" fill="url(#gh)" />
<rect x="119.00" y="130.60" width="283.40" height="0.80" fill="#a4c07c" />
<rect x="119.00" y="161.60" width="283.40" height="32.60" fill="#1e1e1e" />
<rect x="118.40" y="193.60" width="284.60" height="33.20" fill="#101010" />
<rect x="119.00" y="194.20" width="283.40" height="32.00" fill="url(#gg)" />
<rect x="119.00" y="194.20" width="283.40" height="32.00" fill="url(#gh)" />
<rect x="119.00" y="194.20" width="283.40" height="0.80" fill="#a4c07c" />
<circle cx="126.5" cy="138.0" r="4.8999999999999995" fill="#101010"/>
<circle cx="126.5" cy="137.5" r="4.6" fill="url(#sg)"/>
<circle cx="126.5" cy="137.3" r="1.93" fill="#000"/>
<circle cx="126.5" cy="219.0" r="4.8999999999999995" fill="#101010"/>
<circle cx="126.5" cy="218.5" r="4.6" fill="url(#sg)"/>
<circle cx="126.5" cy="218.3" r="1.93" fill="#000"/>
<circle cx="394.7" cy="138.0" r="4.8999999999999995" fill="#101010"/>
<circle cx="394.7" cy="137.5" r="4.6" fill="url(#sg)"/>
<circle cx="394.7" cy="137.3" r="1.93" fill="#000"/>
<circle cx="394.7" cy="219.5" r="4.8999999999999995" fill="#101010"/>
<circle cx="394.7" cy="219" r="4.6" fill="url(#sg)"/>
<circle cx="394.7" cy="218.8" r="1.93" fill="#000"/>
<text x="154.00" y="137.80" font-size="6.3" fill="#222a1a" text-anchor="middle" textLength="19.00" lengthAdjust="spacingAndGlyphs" >Pre Gain</text>
<text x="190.00" y="137.80" font-size="6.3" fill="#222a1a" text-anchor="middle" textLength="28.00" lengthAdjust="spacingAndGlyphs" >Master Gain</text>
<rect x="215" y="133" width="104" height="12" rx="1" fill="#2a2a2a"/>
<rect x="217.00" y="134.80" width="88.00" height="8.40" fill="#050505" />
<text x="261.00" y="140.90" font-size="5.2" fill="#d88a10" text-anchor="middle" textLength="12.04" lengthAdjust="spacingAndGlyphs" >12ax7</text>
<circle cx="311.5" cy="139.0" r="3.0" fill="none" stroke="#f0a020" stroke-width="1.4" stroke-dasharray="4.2 0.9"/>
<text x="365.10" y="139.20" font-size="8.8" fill="#242424" text-anchor="middle" textLength="39.80" lengthAdjust="spacingAndGlyphs" >guitarix</text>
<text x="231.00" y="158.20" font-size="6.3" fill="#222a1a" text-anchor="middle" textLength="26.00" lengthAdjust="spacingAndGlyphs" >Bass Boost</text>
<text x="267.00" y="158.20" font-size="6.3" fill="#222a1a" text-anchor="middle" textLength="21.00" lengthAdjust="spacingAndGlyphs" >Presence</text>
<text x="301.00" y="158.20" font-size="6.3" fill="#222a1a" text-anchor="middle" textLength="16.00" lengthAdjust="spacingAndGlyphs" >Reverb</text>
<circle cx="154" cy="159.90" r="14.01" fill="#000" opacity="0.3"/>
<circle cx="154" cy="158" r="13.6" fill="#151413"/>
<line x1="146.53" y1="166.91" x2="146.18" y2="167.32" stroke="#f0a020" stroke-width="1.36" stroke-linecap="round"/>
<line x1="144.88" y1="165.21" x2="144.45" y2="165.55" stroke="#f0a020" stroke-width="1.36" stroke-linecap="round"/>
<line x1="143.61" y1="163.22" x2="143.12" y2="163.46" stroke="#f0a020" stroke-width="1.36" stroke-linecap="round"/>
<line x1="142.77" y1="161.01" x2="142.24" y2="161.15" stroke="#f0a020" stroke-width="1.36" stroke-linecap="round"/>
<line x1="142.39" y1="158.68" x2="141.85" y2="158.71" stroke="#f0a020" stroke-width="1.36" stroke-linecap="round"/>
<line x1="142.49" y1="156.31" x2="141.96" y2="156.24" stroke="#f0a020" stroke-width="1.36" stroke-linecap="round"/>
<line x1="143.07" y1="154.02" x2="142.56" y2="153.84" stroke="#f0a020" stroke-width="1.36" stroke-linecap="round"/>
<line x1="144.10" y1="151.90" x2="143.64" y2="151.61" stroke="#f0a020" stroke-width="1.36" stroke-linecap="round"/>
<line x1="145.54" y1="150.02" x2="145.15" y2="149.65" stroke="#f0a020" stroke-width="1.36" stroke-linecap="round"/>
<line x1="147.33" y1="148.47" x2="147.02" y2="148.03" stroke="#f0a020" stroke-width="1.36" stroke-linecap="round"/>
<line x1="149.39" y1="147.32" x2="149.18" y2="146.82" stroke="#f0a020" stroke-width="1.36" stroke-linecap="round"/>
<line x1="151.65" y1="146.61" x2="151.54" y2="146.08" stroke="#f0a020" stroke-width="1.36" stroke-linecap="round"/>
<line x1="154.00" y1="146.37" x2="154.00" y2="145.83" stroke="#f0a020" stroke-width="1.36" stroke-linecap="round"/>
<line x1="156.35" y1="146.61" x2="156.46" y2="146.08" stroke="#f0a020" stroke-width="1.36" stroke-linecap="round"/>
<line x1="158.61" y1="147.32" x2="158.82" y2="146.82" stroke="#f0a020" stroke-width="1.36" stroke-linecap="round"/>
<line x1="160.67" y1="148.47" x2="160.98" y2="148.03" stroke="#f0a020" stroke-width="1.36" stroke-linecap="round"/>
<line x1="162.46" y1="150.02" x2="162.85" y2="149.65" stroke="#f0a020" stroke-width="1.36" stroke-linecap="round"/>
<line x1="163.90" y1="151.90" x2="164.36" y2="151.61" stroke="#f0a020" stroke-width="1.36" stroke-linecap="round"/>
<line x1="164.93" y1="154.02" x2="165.44" y2="153.84" stroke="#f0a020" stroke-width="1.36" stroke-linecap="round"/>
<line x1="165.51" y1="156.31" x2="166.04" y2="156.24" stroke="#f0a020" stroke-width="1.36" stroke-linecap="round"/>
<line x1="165.61" y1="158.68" x2="166.15" y2="158.71" stroke="#f0a020" stroke-width="1.36" stroke-linecap="round"/>
<line x1="165.23" y1="161.01" x2="165.76" y2="161.15" stroke="#f0a020" stroke-width="1.36" stroke-linecap="round"/>
<line x1="164.39" y1="163.22" x2="164.88" y2="163.46" stroke="#2a1a0c" stroke-width="1.36" stroke-linecap="round"/>
<line x1="163.12" y1="165.21" x2="163.55" y2="165.55" stroke="#2a1a0c" stroke-width="1.36" stroke-linecap="round"/>
<line x1="161.47" y1="166.91" x2="161.82" y2="167.32" stroke="#2a1a0c" stroke-width="1.36" stroke-linecap="round"/>
<circle cx="154" cy="158.68" r="9.70" fill="#070707"/>
<circle cx="154" cy="158" r="8.70" fill="url(#kg)"/>
<circle cx="153.74" cy="156.69" r="6.09" fill="url(#kc)" stroke="url(#krim)" stroke-width="0.7"/>
<rect x="157.96" y="159.07" width="1.77" height="1.50" rx="0.3" fill="#f0a020"/>
<circle cx="190" cy="159.90" r="14.01" fill="#000" opacity="0.3"/>
<circle cx="190" cy="158" r="13.6" fill="#151413"/>
<line x1="182.53" y1="166.91" x2="182.18" y2="167.32" stroke="#f0a020" stroke-width="1.36" stroke-linecap="round"/>
<line x1="180.88" y1="165.21" x2="180.45" y2="165.55" stroke="#2a1a0c" stroke-width="1.36" stroke-linecap="round"/>
<line x1="179.61" y1="163.22" x2="179.12" y2="163.46" stroke="#2a1a0c" stroke-width="1.36" stroke-linecap="round"/>
<line x1="178.77" y1="161.01" x2="178.24" y2="161.15" stroke="#2a1a0c" stroke-width="1.36" stroke-linecap="round"/>
<line x1="178.39" y1="158.68" x2="177.85" y2="158.71" stroke="#2a1a0c" stroke-width="1.36" stroke-linecap="round"/>
<line x1="178.49" y1="156.31" x2="177.96" y2="156.24" stroke="#2a1a0c" stroke-width="1.36" stroke-linecap="round"/>
<line x1="179.07" y1="154.02" x2="178.56" y2="153.84" stroke="#2a1a0c" stroke-width="1.36" stroke-linecap="round"/>
<line x1="180.10" y1="151.90" x2="179.64" y2="151.61" stroke="#2a1a0c" stroke-width="1.36" stroke-linecap="round"/>
<line x1="181.54" y1="150.02" x2="181.15" y2="149.65" stroke="#2a1a0c" stroke-width="1.36" stroke-linecap="round"/>
<line x1="183.33" y1="148.47" x2="183.02" y2="148.03" stroke="#2a1a0c" stroke-width="1.36" stroke-linecap="round"/>
<line x1="185.39" y1="147.32" x2="185.18" y2="146.82" stroke="#2a1a0c" stroke-width="1.36" stroke-linecap="round"/>
<line x1="187.65" y1="146.61" x2="187.54" y2="146.08" stroke="#2a1a0c" stroke-width="1.36" stroke-linecap="round"/>
<line x1="190.00" y1="146.37" x2="190.00" y2="145.83" stroke="#2a1a0c" stroke-width="1.36" stroke-linecap="round"/>
<line x1="192.35" y1="146.61" x2="192.46" y2="146.08" stroke="#2a1a0c" stroke-width="1.36" stroke-linecap="round"/>
<line x1="194.61" y1="147.32" x2="194.82" y2="146.82" stroke="#2a1a0c" stroke-width="1.36" stroke-linecap="round"/>
<line x1="196.67" y1="148.47" x2="196.98" y2="148.03" stroke="#2a1a0c" stroke-width="1.36" stroke-linecap="round"/>
<line x1="198.46" y1="150.02" x2="198.85" y2="149.65" stroke="#2a1a0c" stroke-width="1.36" stroke-linecap="round"/>
<line x1="199.90" y1="151.90" x2="200.36" y2="151.61" stroke="#2a1a0c" stroke-width="1.36" stroke-linecap="round"/>
<line x1="200.93" y1="154.02" x2="201.44" y2="153.84" stroke="#2a1a0c" stroke-width="1.36" stroke-linecap="round"/>
<line x1="201.51" y1="156.31" x2="202.04" y2="156.24" stroke="#2a1a0c" stroke-width="1.36" stroke-linecap="round"/>
<line x1="201.61" y1="158.68" x2="202.15" y2="158.71" stroke="#2a1a0c" stroke-width="1.36" stroke-linecap="round"/>
<line x1="201.23" y1="161.01" x2="201.76" y2="161.15" stroke="#2a1a0c" stroke-width="1.36" stroke-linecap="round"/>
<line x1="200.39" y1="163.22" x2="200.88" y2="163.46" stroke="#2a1a0c" stroke-width="1.36" stroke-linecap="round"/>
<line x1="199.12" y1="165.21" x2="199.55" y2="165.55" stroke="#2a1a0c" stroke-width="1.36" stroke-linecap="round"/>
<line x1="197.47" y1="166.91" x2="197.82" y2="167.32" stroke="#2a1a0c" stroke-width="1.36" stroke-linecap="round"/>
<circle cx="190" cy="158.68" r="9.70" fill="#070707"/>
<circle cx="190" cy="158" r="8.70" fill="url(#kg)"/>
<circle cx="189.74" cy="156.69" r="6.09" fill="url(#kc)" stroke="url(#krim)" stroke-width="0.7"/>
<rect x="185.21" y="160.58" width="1.77" height="1.50" rx="0.3" fill="#f0a020"/>
<circle cx="232" cy="176.90" r="14.01" fill="#000" opacity="0.3"/>
<circle cx="232" cy="175" r="13.6" fill="#151413"/>
<line x1="224.53" y1="183.91" x2="224.18" y2="184.32" stroke="#f0a020" stroke-width="1.36" stroke-linecap="round"/>
<line x1="222.88" y1="182.21" x2="222.45" y2="182.55" stroke="#f0a020" stroke-width="1.36" stroke-linecap="round"/>
<line x1="221.61" y1="180.22" x2="221.12" y2="180.46" stroke="#f0a020" stroke-width="1.36" stroke-linecap="round"/>
<line x1="220.77" y1="178.01" x2="220.24" y2="178.15" stroke="#f0a020" stroke-width="1.36" stroke-linecap="round"/>
<line x1="220.39" y1="175.68" x2="219.85" y2="175.71" stroke="#f0a020" stroke-width="1.36" stroke-linecap="round"/>
<line x1="220.49" y1="173.31" x2="219.96" y2="173.24" stroke="#f0a020" stroke-width="1.36" stroke-linecap="round"/>
<line x1="221.07" y1="171.02" x2="220.56" y2="170.84" stroke="#f0a020" stroke-width="1.36" stroke-linecap="round"/>
<line x1="222.10" y1="168.90" x2="221.64" y2="168.61" stroke="#f0a020" stroke-width="1.36" stroke-linecap="round"/>
<line x1="223.54" y1="167.02" x2="223.15" y2="166.65" stroke="#f0a020" stroke-width="1.36" stroke-linecap="round"/>
<line x1="225.33" y1="165.47" x2="225.02" y2="165.03" stroke="#f0a020" stroke-width="1.36" stroke-linecap="round"/>
<line x1="227.39" y1="164.32" x2="227.18" y2="163.82" stroke="#f0a020" stroke-width="1.36" stroke-linecap="round"/>
<line x1="229.65" y1="163.61" x2="229.54" y2="163.08" stroke="#f0a020" stroke-width="1.36" stroke-linecap="round"/>
<line x1="232.00" y1="163.37" x2="232.00" y2="162.83" stroke="#f0a020" stroke-width="1.36" stroke-linecap="round"/>
<line x1="234.35" y1="163.61" x2="234.46" y2="163.08" stroke="#2a1a0c" stroke-width="1.36" stroke-linecap="round"/>
<line x1="236.61" y1="164.32" x2="236.82" y2="163.82" stroke="#2a1a0c" stroke-width="1.36" stroke-linecap="round"/>
<line x1="238.67" y1="165.47" x2="238.98" y2="165.03" stroke="#2a1a0c" stroke-width="1.36" stroke-linecap="round"/>
<line x1="240.46" y1="167.02" x2="240.85" y2="166.65" stroke="#2a1a0c" stroke-width="1.36" stroke-linecap="round"/>
<line x1="241.90" y1="168.90" x2="242.36" y2="168.61" stroke="#2a1a0c" stroke-width="1.36" stroke-linecap="round"/>
<line x1="242.93" y1="171.02" x2="243.44" y2="170.84" stroke="#2a1a0c" stroke-width="1.36" stroke-linecap="round"/>
<line x1="243.51" y1="173.31" x2="244.04" y2="173.24" stroke="#2a1a0c" stroke-width="1.36" stroke-linecap="round"/>
<line x1="243.61" y1="175.68" x2="244.15" y2="175.71" stroke="#2a1a0c" stroke-width="1.36" stroke-linecap="round"/>
<line x1="243.23" y1="178.01" x2="243.76" y2="178.15" stroke="#2a1a0c" stroke-width="1.36" stroke-linecap="round"/>
<line x1="242.39" y1="180.22" x2="242.88" y2="180.46" stroke="#2a1a0c" stroke-width="1.36" stroke-linecap="round"/>
<line x1="241.12" y1="182.21" x2="241.55" y2="182.55" stroke="#2a1a0c" stroke-width="1.36" stroke-linecap="round"/>
<line x1="239.47" y1="183.91" x2="239.82" y2="184.32" stroke="#2a1a0c" stroke-width="1.36" stroke-linecap="round"/>
<circle cx="232" cy="175.68" r="9.70" fill="#070707"/>
<circle cx="232" cy="175" r="8.70" fill="url(#kg)"/>
<circle cx="231.74" cy="173.69" r="6.09" fill="url(#kc)" stroke="url(#krim)" stroke-width="0.7"/>
<rect x="231.12" y="168.89" width="1.77" height="1.50" rx="0.3" fill="#f0a020"/>
<circle cx="267" cy="177.90" r="14.01" fill="#000" opacity="0.3"/>
<circle cx="267" cy="176" r="13.6" fill="#151413"/>
<line x1="259.53" y1="184.91" x2="259.18" y2="185.32" stroke="#f0a020" stroke-width="1.36" stroke-linecap="round"/>
<line x1="257.88" y1="183.21" x2="257.45" y2="183.55" stroke="#f0a020" stroke-width="1.36" stroke-linecap="round"/>
<line x1="256.61" y1="181.22" x2="256.12" y2="181.46" stroke="#f0a020" stroke-width="1.36" stroke-linecap="round"/>
<line x1="255.77" y1="179.01" x2="255.24" y2="179.15" stroke="#f0a020" stroke-width="1.36" stroke-linecap="round"/>
<line x1="255.39" y1="176.68" x2="254.85" y2="176.71" stroke="#f0a020" stroke-width="1.36" stroke-linecap="round"/>
<line x1="255.49" y1="174.31" x2="254.96" y2="174.24" stroke="#f0a020" stroke-width="1.36" stroke-linecap="round"/>
<line x1="256.07" y1="172.02" x2="255.56" y2="171.84" stroke="#f0a020" stroke-width="1.36" stroke-linecap="round"/>
<line x1="257.10" y1="169.90" x2="256.64" y2="169.61" stroke="#f0a020" stroke-width="1.36" stroke-linecap="round"/>
<line x1="258.54" y1="168.02" x2="258.15" y2="167.65" stroke="#f0a020" stroke-width="1.36" stroke-linecap="round"/>
<line x1="260.33" y1="166.47" x2="260.02" y2="166.03" stroke="#f0a020" stroke-width="1.36" stroke-linecap="round"/>
<line x1="262.39" y1="165.32" x2="262.18" y2="164.82" stroke="#f0a020" stroke-width="1.36" stroke-linecap="round"/>
<line x1="264.65" y1="164.61" x2="264.54" y2="164.08" stroke="#f0a020" stroke-width="1.36" stroke-linecap="round"/>
<line x1="267.00" y1="164.37" x2="267.00" y2="163.83" stroke="#f0a020" stroke-width="1.36" stroke-linecap="round"/>
<line x1="269.35" y1="164.61" x2="269.46" y2="164.08" stroke="#f0a020" stroke-width="1.36" stroke-linecap="round"/>
<line x1="271.61" y1="165.32" x2="271.82" y2="164.82" stroke="#f0a020" stroke-width="1.36" stroke-linecap="round"/>
<line x1="273.67" y1="166.47" x2="273.98" y2="166.03" stroke="#f0a020" stroke-width="1.36" stroke-linecap="round"/>
<line x1="275.46" y1="168.02" x2="275.85" y2="167.65" stroke="#f0a020" stroke-width="1.36" stroke-linecap="round"/>
<line x1="276.90" y1="169.90" x2="277.36" y2="169.61" stroke="#f0a020" stroke-width="1.36" stroke-linecap="round"/>
<line x1="277.93" y1="172.02" x2="278.44" y2="171.84" stroke="#f0a020" stroke-width="1.36" stroke-linecap="round"/>
<line x1="278.51" y1="174.31" x2="279.04" y2="174.24" stroke="#f0a020" stroke-width="1.36" stroke-linecap="round"/>
<line x1="278.61" y1="176.68" x2="279.15" y2="176.71" stroke="#f0a020" stroke-width="1.36" stroke-linecap="round"/>
<line x1="278.23" y1="179.01" x2="278.76" y2="179.15" stroke="#f0a020" stroke-width="1.36" stroke-linecap="round"/>
<line x1="277.39" y1="181.22" x2="277.88" y2="181.46" stroke="#2a1a0c" stroke-width="1.36" stroke-linecap="round"/>
<line x1="276.12" y1="183.21" x2="276.55" y2="183.55" stroke="#2a1a0c" stroke-width="1.36" stroke-linecap="round"/>
<line x1="274.47" y1="184.91" x2="274.82" y2="185.32" stroke="#2a1a0c" stroke-width="1.36" stroke-linecap="round"/>
<circle cx="267" cy="176.68" r="9.70" fill="#070707"/>
<circle cx="267" cy="176" r="8.70" fill="url(#kg)"/>
<circle cx="266.74" cy="174.69" r="6.09" fill="url(#kc)" stroke="url(#krim)" stroke-width="0.7"/>
<rect x="270.96" y="177.07" width="1.77" height="1.50" rx="0.3" fill="#f0a020"/>
<circle cx="301" cy="177.90" r="14.01" fill="#000" opacity="0.3"/>
<circle cx="301" cy="176" r="13.6" fill="#151413"/>
<line x1="293.53" y1="184.91" x2="293.18" y2="185.32" stroke="#f0a020" stroke-width="1.36" stroke-linecap="round"/>
<line x1="291.88" y1="183.21" x2="291.45" y2="183.55" stroke="#f0a020" stroke-width="1.36" stroke-linecap="round"/>
<line x1="290.61" y1="181.22" x2="290.12" y2="181.46" stroke="#f0a020" stroke-width="1.36" stroke-linecap="round"/>
<line x1="289.77" y1="179.01" x2="289.24" y2="179.15" stroke="#f0a020" stroke-width="1.36" stroke-linecap="round"/>
<line x1="289.39" y1="176.68" x2="288.85" y2="176.71" stroke="#f0a020" stroke-width="1.36" stroke-linecap="round"/>
<line x1="289.49" y1="174.31" x2="288.96" y2="174.24" stroke="#f0a020" stroke-width="1.36" stroke-linecap="round"/>
<line x1="290.07" y1="172.02" x2="289.56" y2="171.84" stroke="#f0a020" stroke-width="1.36" stroke-linecap="round"/>
<line x1="291.10" y1="169.90" x2="290.64" y2="169.61" stroke="#f0a020" stroke-width="1.36" stroke-linecap="round"/>
<line x1="292.54" y1="168.02" x2="292.15" y2="167.65" stroke="#f0a020" stroke-width="1.36" stroke-linecap="round"/>
<line x1="294.33" y1="166.47" x2="294.02" y2="166.03" stroke="#f0a020" stroke-width="1.36" stroke-linecap="round"/>
<line x1="296.39" y1="165.32" x2="296.18" y2="164.82" stroke="#f0a020" stroke-width="1.36" stroke-linecap="round"/>
<line x1="298.65" y1="164.61" x2="298.54" y2="164.08" stroke="#f0a020" stroke-width="1.36" stroke-linecap="round"/>
<line x1="301.00" y1="164.37" x2="301.00" y2="163.83" stroke="#f0a020" stroke-width="1.36" stroke-linecap="round"/>
<line x1="303.35" y1="164.61" x2="303.46" y2="164.08" stroke="#2a1a0c" stroke-width="1.36" stroke-linecap="round"/>
<line x1="305.61" y1="165.32" x2="305.82" y2="164.82" stroke="#2a1a0c" stroke-width="1.36" stroke-linecap="round"/>
<line x1="307.67" y1="166.47" x2="307.98" y2="166.03" stroke="#2a1a0c" stroke-width="1.36" stroke-linecap="round"/>
<line x1="309.46" y1="168.02" x2="309.85" y2="167.65" stroke="#2a1a0c" stroke-width="1.36" stroke-linecap="round"/>
<line x1="310.90" y1="169.90" x2="311.36" y2="169.61" stroke="#2a1a0c" stroke-width="1.36" stroke-linecap="round"/>
<line x1="311.93" y1="172.02" x2="312.44" y2="171.84" stroke="#2a1a0c" stroke-width="1.36" stroke-linecap="round"/>
<line x1="312.51" y1="174.31" x2="313.04" y2="174.24" stroke="#2a1a0c" stroke-width="1.36" stroke-linecap="round"/>
<line x1="312.61" y1="176.68" x2="313.15" y2="176.71" stroke="#2a1a0c" stroke-width="1.36" stroke-linecap="round"/>
<line x1="312.23" y1="179.01" x2="312.76" y2="179.15" stroke="#2a1a0c" stroke-width="1.36" stroke-linecap="round"/>
<line x1="311.39" y1="181.22" x2="311.88" y2="181.46" stroke="#2a1a0c" stroke-width="1.36" stroke-linecap="round"/>
<line x1="310.12" y1="183.21" x2="310.55" y2="183.55" stroke="#2a1a0c" stroke-width="1.36" stroke-linecap="round"/>
<line x1="308.47" y1="184.91" x2="308.82" y2="185.32" stroke="#2a1a0c" stroke-width="1.36" stroke-linecap="round"/>
<circle cx="301" cy="176.68" r="9.70" fill="#070707"/>
<circle cx="301" cy="176" r="8.70" fill="url(#kg)"/>
<circle cx="300.74" cy="174.69" r="6.09" fill="url(#kc)" stroke="url(#krim)" stroke-width="0.7"/>
<rect x="300.12" y="169.89" width="1.77" height="1.50" rx="0.3" fill="#f0a020"/>
<rect x="228.00" y="194.50" width="9.00" height="9.50" fill="#141414" />
<rect x="228.70" y="195.20" width="7.60" height="8.10" fill="#25252a" />
<rect x="230.70" y="197.50" width="3.60" height="3.50" fill="#4a3c1c" />
<rect x="262.00" y="194.50" width="9.00" height="9.50" fill="#141414" />
<rect x="262.70" y="195.20" width="7.60" height="8.10" fill="#25252a" />
<rect x="264.70" y="197.50" width="3.60" height="3.50" fill="#4a3c1c" />
<rect x="297.00" y="194.50" width="9.00" height="9.50" fill="#141414" />
<rect x="297.70" y="195.20" width="7.60" height="8.10" fill="#25252a" />
<rect x="299.70" y="197.50" width="3.60" height="3.50" fill="#4a3c1c" />
<circle cx="154" cy="199.90" r="14.01" fill="#000" opacity="0.3"/>
<circle cx="154" cy="198" r="13.6" fill="#151413"/>
<line x1="146.53" y1="206.91" x2="146.18" y2="207.32" stroke="#f0a020" stroke-width="1.36" stroke-linecap="round"/>
<line x1="144.88" y1="205.21" x2="144.45" y2="205.55" stroke="#f0a020" stroke-width="1.36" stroke-linecap="round"/>
<line x1="143.61" y1="203.22" x2="143.12" y2="203.46" stroke="#f0a020" stroke-width="1.36" stroke-linecap="round"/>
<line x1="142.77" y1="201.01" x2="142.24" y2="201.15" stroke="#f0a020" stroke-width="1.36" stroke-linecap="round"/>
<line x1="142.39" y1="198.68" x2="141.85" y2="198.71" stroke="#f0a020" stroke-width="1.36" stroke-linecap="round"/>
<line x1="142.49" y1="196.31" x2="141.96" y2="196.24" stroke="#f0a020" stroke-width="1.36" stroke-linecap="round"/>
<line x1="143.07" y1="194.02" x2="142.56" y2="193.84" stroke="#f0a020" stroke-width="1.36" stroke-linecap="round"/>
<line x1="144.10" y1="191.90" x2="143.64" y2="191.61" stroke="#f0a020" stroke-width="1.36" stroke-linecap="round"/>
<line x1="145.54" y1="190.02" x2="145.15" y2="189.65" stroke="#f0a020" stroke-width="1.36" stroke-linecap="round"/>
<line x1="147.33" y1="188.47" x2="147.02" y2="188.03" stroke="#f0a020" stroke-width="1.36" stroke-linecap="round"/>
<line x1="149.39" y1="187.32" x2="149.18" y2="186.82" stroke="#f0a020" stroke-width="1.36" stroke-linecap="round"/>
<line x1="151.65" y1="186.61" x2="151.54" y2="186.08" stroke="#f0a020" stroke-width="1.36" stroke-linecap="round"/>
<line x1="154.00" y1="186.37" x2="154.00" y2="185.83" stroke="#f0a020" stroke-width="1.36" stroke-linecap="round"/>
<line x1="156.35" y1="186.61" x2="156.46" y2="186.08" stroke="#f0a020" stroke-width="1.36" stroke-linecap="round"/>
<line x1="158.61" y1="187.32" x2="158.82" y2="186.82" stroke="#f0a020" stroke-width="1.36" stroke-linecap="round"/>
<line x1="160.67" y1="188.47" x2="160.98" y2="188.03" stroke="#f0a020" stroke-width="1.36" stroke-linecap="round"/>
<line x1="162.46" y1="190.02" x2="162.85" y2="189.65" stroke="#f0a020" stroke-width="1.36" stroke-linecap="round"/>
<line x1="163.90" y1="191.90" x2="164.36" y2="191.61" stroke="#f0a020" stroke-width="1.36" stroke-linecap="round"/>
<line x1="164.93" y1="194.02" x2="165.44" y2="193.84" stroke="#f0a020" stroke-width="1.36" stroke-linecap="round"/>
<line x1="165.51" y1="196.31" x2="166.04" y2="196.24" stroke="#f0a020" stroke-width="1.36" stroke-linecap="round"/>
<line x1="165.61" y1="198.68" x2="166.15" y2="198.71" stroke="#f0a020" stroke-width="1.36" stroke-linecap="round"/>
<line x1="165.23" y1="201.01" x2="165.76" y2="201.15" stroke="#f0a020" stroke-width="1.36" stroke-linecap="round"/>
<line x1="164.39" y1="203.22" x2="164.88" y2="203.46" stroke="#2a1a0c" stroke-width="1.36" stroke-linecap="round"/>
<line x1="163.12" y1="205.21" x2="163.55" y2="205.55" stroke="#2a1a0c" stroke-width="1.36" stroke-linecap="round"/>
<line x1="161.47" y1="206.91" x2="161.82" y2="207.32" stroke="#2a1a0c" stroke-width="1.36" stroke-linecap="round"/>
<circle cx="154" cy="198.68" r="9.70" fill="#070707"/>
<circle cx="154" cy="198" r="8.70" fill="url(#kg)"/>
<circle cx="153.74" cy="196.69" r="6.09" fill="url(#kc)" stroke="url(#krim)" stroke-width="0.7"/>
<rect x="157.96" y="199.07" width="1.77" height="1.50" rx="0.3" fill="#f0a020"/>
<circle cx="190" cy="199.90" r="14.01" fill="#000" opacity="0.3"/>
<circle cx="190" cy="198" r="13.6" fill="#151413"/>
<line x1="182.53" y1="206.91" x2="182.18" y2="207.32" stroke="#f0a020" stroke-width="1.36" stroke-linecap="round"/>
<line x1="180.88" y1="205.21" x2="180.45" y2="205.55" stroke="#f0a020" stroke-width="1.36" stroke-linecap="round"/>
<line x1="179.61" y1="203.22" x2="179.12" y2="203.46" stroke="#f0a020" stroke-width="1.36" stroke-linecap="round"/>
<line x1="178.77" y1="201.01" x2="178.24" y2="201.15" stroke="#f0a020" stroke-width="1.36" stroke-linecap="round"/>
<line x1="178.39" y1="198.68" x2="177.85" y2="198.71" stroke="#f0a020" stroke-width="1.36" stroke-linecap="round"/>
<line x1="178.49" y1="196.31" x2="177.96" y2="196.24" stroke="#f0a020" stroke-width="1.36" stroke-linecap="round"/>
<line x1="179.07" y1="194.02" x2="178.56" y2="193.84" stroke="#f0a020" stroke-width="1.36" stroke-linecap="round"/>
<line x1="180.10" y1="191.90" x2="179.64" y2="191.61" stroke="#f0a020" stroke-width="1.36" stroke-linecap="round"/>
<line x1="181.54" y1="190.02" x2="181.15" y2="189.65" stroke="#f0a020" stroke-width="1.36" stroke-linecap="round"/>
<line x1="183.33" y1="188.47" x2="183.02" y2="188.03" stroke="#f0a020" stroke-width="1.36" stroke-linecap="round"/>
<line x1="185.39" y1="187.32" x2="185.18" y2="186.82" stroke="#f0a020" stroke-width="1.36" stroke-linecap="round"/>
<line x1="187.65" y1="186.61" x2="187.54" y2="186.08" stroke="#f0a020" stroke-width="1.36" stroke-linecap="round"/>
<line x1="190.00" y1="186.37" x2="190.00" y2="185.83" stroke="#f0a020" stroke-width="1.36" stroke-linecap="round"/>
<line x1="192.35" y1="186.61" x2="192.46" y2="186.08" stroke="#f0a020" stroke-width="1.36" stroke-linecap="round"/>
<line x1="194.61" y1="187.32" x2="194.82" y2="186.82" stroke="#f0a020" stroke-width="1.36" stroke-linecap="round"/>
<line x1="196.67" y1="188.47" x2="196.98" y2="188.03" stroke="#f0a020" stroke-width="1.36" stroke-linecap="round"/>
<line x1="198.46" y1="190.02" x2="198.85" y2="189.65" stroke="#f0a020" stroke-width="1.36" stroke-linecap="round"/>
<line x1="199.90" y1="191.90" x2="200.36" y2="191.61" stroke="#f0a020" stroke-width="1.36" stroke-linecap="round"/>
<line x1="200.93" y1="194.02" x2="201.44" y2="193.84" stroke="#f0a020" stroke-width="1.36" stroke-linecap="round"/>
<line x1="201.51" y1="196.31" x2="202.04" y2="196.24" stroke="#f0a020" stroke-width="1.36" stroke-linecap="round"/>
<line x1="201.61" y1="198.68" x2="202.15" y2="198.71" stroke="#f0a020" stroke-width="1.36" stroke-linecap="round"/>
<line x1="201.23" y1="201.01" x2="201.76" y2="201.15" stroke="#f0a020" stroke-width="1.36" stroke-linecap="round"/>
<line x1="200.39" y1="203.22" x2="200.88" y2="203.46" stroke="#2a1a0c" stroke-width="1.36" stroke-linecap="round"/>
<line x1="199.12" y1="205.21" x2="199.55" y2="205.55" stroke="#2a1a0c" stroke-width="1.36" stroke-linecap="round"/>
<line x1="197.47" y1="206.91" x2="197.82" y2="207.32" stroke="#2a1a0c" stroke-width="1.36" stroke-linecap="round"/>
<circle cx="190" cy="198.68" r="9.70" fill="#070707"/>
<circle cx="190" cy="198" r="8.70" fill="url(#kg)"/>
<circle cx="189.74" cy="196.69" r="6.09" fill="url(#kc)" stroke="url(#krim)" stroke-width="0.7"/>
<rect x="193.96" y="199.07" width="1.77" height="1.50" rx="0.3" fill="#f0a020"/>
<circle cx="353.8" cy="182.93" r="25.23" fill="#000" opacity="0.3"/>
<circle cx="353.8" cy="179.5" r="25.4" fill="#0c0c0c"/>
<circle cx="353.8" cy="179.5" r="24.2" fill="url(#kg2)"/>
<path d="M338.12,198.19 A24.4,24.4 0 1 1 373.54,193.84" fill="none" stroke="#f0a020" stroke-width="1.5"/>
<line x1="369.97" y1="190.40" x2="371.79" y2="191.63" stroke="#f0a020" stroke-width="1.3"/>
<text x="153.50" y="223.60" font-size="6.3" fill="#222a1a" text-anchor="middle" textLength="23.00" lengthAdjust="spacingAndGlyphs" >Clean/Dist</text>
<text x="190.00" y="223.60" font-size="6.3" fill="#222a1a" text-anchor="middle" textLength="12.00" lengthAdjust="spacingAndGlyphs" >Drive</text>
<text x="352.00" y="223.00" font-size="6.3" fill="#222a1a" text-anchor="middle" textLength="33.00" lengthAdjust="spacingAndGlyphs" >Master Volume</text>
<rect x="215" y="211.4" width="103.5" height="11.6" rx="1" fill="#262626"/>
<rect x="217.00" y="213.00" width="99.50" height="3.70" fill="#1e1208" />
<rect x="217.00" y="218.00" width="99.50" height="3.70" fill="#1e1208" />
<rect x="218.00" y="213.80" width="1.40" height="2.00" fill="#d89420" />
<rect x="218.00" y="218.80" width="1.40" height="2.00" fill="#d89420" />
<rect x="220.15" y="213.80" width="1.40" height="2.00" fill="#d89420" />
<rect x="220.15" y="218.80" width="1.40" height="2.00" fill="#d89420" />
<rect x="222.30" y="213.80" width="1.40" height="2.00" fill="#d89420" />
<rect x="222.30" y="218.80" width="1.40" height="2.00" fill="#d89420" />
<rect x="224.45" y="213.80" width="1.40" height="2.00" fill="#d89420" />
<rect x="224.45" y="218.80" width="1.40" height="2.00" fill="#d89420" />
<rect x="226.60" y="213.80" width="1.40" height="2.00" fill="#d89420" />
<rect x="226.60" y="218.80" width="1.40" height="2.00" fill="#d89420" />
<rect x="228.75" y="213.80" width="1.40" height="2.00" fill="#d89420" />
<rect x="228.75" y="218.80" width="1.40" height="2.00" fill="#d89420" />
<rect x="230.90" y="213.80" width="1.40" height="2.00" fill="#d89420" />
<rect x="230.90" y="218.80" width="1.40" height="2.00" fill="#d89420" />
<rect x="233.05" y="213.80" width="1.40" height="2.00" fill="#d89420" />
<rect x="233.05" y="218.80" width="1.40" height="2.00" fill="#d89420" />
<rect x="235.20" y="213.80" width="1.40" height="2.00" fill="#d89420" />
<rect x="235.20" y="218.80" width="1.40" height="2.00" fill="#d89420" />
<rect x="237.35" y="213.80" width="1.40" height="2.00" fill="#d89420" />
<rect x="237.35" y="218.80" width="1.40" height="2.00" fill="#d89420" />
<rect x="239.50" y="213.80" width="1.40" height="2.00" fill="#d89420" />
<rect x="239.50" y="218.80" width="1.40" height="2.00" fill="#d89420" />
<rect x="241.65" y="213.80" width="1.40" height="2.00" fill="#d89420" />
<rect x="241.65" y="218.80" width="1.40" height="2.00" fill="#d89420" />
<rect x="243.80" y="213.80" width="1.40" height="2.00" fill="#d89420" />
<rect x="243.80" y="218.80" width="1.40" height="2.00" fill="#d89420" />
<rect x="245.95" y="213.80" width="1.40" height="2.00" fill="#d89420" />
<rect x="245.95" y="218.80" width="1.40" height="2.00" fill="#d89420" />
<rect x="248.10" y="213.80" width="1.40" height="2.00" fill="#d89420" />
<rect x="248.10" y="218.80" width="1.40" height="2.00" fill="#d89420" />
<rect x="250.25" y="213.80" width="1.40" height="2.00" fill="#d89420" />
<rect x="250.25" y="218.80" width="1.40" height="2.00" fill="#d89420" />
<rect x="252.40" y="213.80" width="1.40" height="2.00" fill="#d89420" />
<rect x="252.40" y="218.80" width="1.40" height="2.00" fill="#d89420" />
<rect x="254.55" y="213.80" width="1.40" height="2.00" fill="#d89420" />
<rect x="254.55" y="218.80" width="1.40" height="2.00" fill="#d89420" />
<rect x="256.70" y="213.80" width="1.40" height="2.00" fill="#d89420" />
<rect x="256.70" y="218.80" width="1.40" height="2.00" fill="#d89420" />
<rect x="258.85" y="213.80" width="1.40" height="2.00" fill="#d89420" />
<rect x="258.85" y="218.80" width="1.40" height="2.00" fill="#d89420" />
<rect x="261.00" y="213.80" width="1.40" height="2.00" fill="#d89420" />
<rect x="261.00" y="218.80" width="1.40" height="2.00" fill="#d89420" />
<rect x="263.15" y="213.80" width="1.40" height="2.00" fill="#d89420" />
<rect x="263.15" y="218.80" width="1.40" height="2.00" fill="#d89420" />
<rect x="265.30" y="213.80" width="1.40" height="2.00" fill="#d89420" />
<rect x="265.30" y="218.80" width="1.40" height="2.00" fill="#d89420" />
<rect x="267.45" y="213.80" width="1.40" height="2.00" fill="#d89420" />
<rect x="267.45" y="218.80" width="1.40" height="2.00" fill="#d89420" />
<rect x="269.60" y="213.80" width="1.40" height="2.00" fill="#d89420" />
<rect x="269.60" y="218.80" width="1.40" height="2.00" fill="#d89420" />
<rect x="271.75" y="213.80" width="1.40" height="2.00" fill="#d89420" />
<rect x="271.75" y="218.80" width="1.40" height="2.00" fill="#d89420" />
<rect x="273.90" y="213.80" width="1.40" height="2.00" fill="#d89420" />
<rect x="273.90" y="218.80" width="1.40" height="2.00" fill="#d89420" />
<rect x="276.05" y="213.80" width="1.40" height="2.00" fill="#d89420" />
<rect x="276.05" y="218.80" width="1.40" height="2.00" fill="#d89420" />
<rect x="278.20" y="213.80" width="1.40" height="2.00" fill="#d89420" />
<rect x="278.20" y="218.80" width="1.40" height="2.00" fill="#d89420" />
<rect x="280.35" y="213.80" width="1.40" height="2.00" fill="#d89420" />
<rect x="280.35" y="218.80" width="1.40" height="2.00" fill="#d89420" />
<rect x="282.50" y="213.80" width="1.40" height="2.00" fill="#d89420" />
<rect x="282.50" y="218.80" width="1.40" height="2.00" fill="#d89420" />
<rect x="284.65" y="213.80" width="1.40" height="2.00" fill="#d89420" />
<rect x="284.65" y="218.80" width="1.40" height="2.00" fill="#d89420" />
<rect x="286.80" y="213.80" width="1.40" height="2.00" fill="#d89420" />
<rect x="286.80" y="218.80" width="1.40" height="2.00" fill="#d89420" />
<rect x="288.95" y="213.80" width="1.40" height="2.00" fill="#d89420" />
<rect x="288.95" y="218.80" width="1.40" height="2.00" fill="#d89420" />
<rect x="291.10" y="213.80" width="1.40" height="2.00" fill="#d89420" />
<rect x="291.10" y="218.80" width="1.40" height="2.00" fill="#d89420" />
<rect x="293.25" y="213.80" width="1.40" height="2.00" fill="#d89420" />
<rect x="293.25" y="218.80" width="1.40" height="2.00" fill="#d89420" />
<rect x="295.40" y="213.80" width="1.40" height="2.00" fill="#d89420" />
<rect x="295.40" y="218.80" width="1.40" height="2.00" fill="#d89420" />
<rect x="297.55" y="213.80" width="1.40" height="2.00" fill="#d89420" />
<rect x="297.55" y="218.80" width="1.40" height="2.00" fill="#d89420" />
<rect x="299.70" y="213.80" width="1.40" height="2.00" fill="#d89420" />
<rect x="299.70" y="218.80" width="1.40" height="2.00" fill="#d89420" />
<rect x="301.85" y="213.80" width="1.40" height="2.00" fill="#d89420" />
<rect x="301.85" y="218.80" width="1.40" height="2.00" fill="#d89420" />
<rect x="304.00" y="213.80" width="1.40" height="2.00" fill="#5a2010" />
<rect x="304.00" y="218.80" width="1.40" height="2.00" fill="#5a2010" />
<rect x="306.15" y="213.80" width="1.40" height="2.00" fill="#5a2010" />
<rect x="306.15" y="218.80" width="1.40" height="2.00" fill="#5a2010" />
<rect x="308.30" y="213.80" width="1.40" height="2.00" fill="#5a2010" />
<rect x="308.30" y="218.80" width="1.40" height="2.00" fill="#5a2010" />
<rect x="310.45" y="213.80" width="1.40" height="2.00" fill="#5a2010" />
<rect x="310.45" y="218.80" width="1.40" height="2.00" fill="#5a2010" />
<rect x="312.60" y="213.80" width="1.40" height="2.00" fill="#5a2010" />
<rect x="312.60" y="218.80" width="1.40" height="2.00" fill="#5a2010" />
<rect x="314.75" y="213.80" width="1.40" height="2.00" fill="#5a2010" />
<rect x="314.75" y="218.80" width="1.40" height="2.00" fill="#5a2010" />
<rect x="119.00" y="228.00" width="15.00" height="67.00" fill="#292929" />
<rect x="387.00" y="228.00" width="15.00" height="67.00" fill="#292929" />
<rect x="119.00" y="228.00" width="0.80" height="67.00" fill="#111" />
<rect x="133.20" y="228.00" width="0.80" height="67.00" fill="#151515" />
<circle cx="126.6" cy="235.0" r="4.8999999999999995" fill="#101010"/>
<circle cx="126.6" cy="234.5" r="4.6" fill="url(#sg)"/>
<circle cx="126.6" cy="234.3" r="1.93" fill="#000"/>
<circle cx="126.6" cy="287.0" r="4.8999999999999995" fill="#101010"/>
<circle cx="126.6" cy="286.5" r="4.6" fill="url(#sg)"/>
<circle cx="126.6" cy="286.3" r="1.93" fill="#000"/>
<circle cx="394.7" cy="235.2" r="4.8999999999999995" fill="#101010"/>
<circle cx="394.7" cy="234.7" r="4.6" fill="url(#sg)"/>
<circle cx="394.7" cy="234.5" r="1.93" fill="#000"/>
<circle cx="394.7" cy="286.9" r="4.8999999999999995" fill="#101010"/>
<circle cx="394.7" cy="286.4" r="4.6" fill="url(#sg)"/>
<circle cx="394.7" cy="286.2" r="1.93" fill="#000"/>
<rect x="133.40" y="227.40" width="254.20" height="41.00" fill="#101010" />
<rect x="134.00" y="228.00" width="253.00" height="39.80" fill="url(#gg)" />
<rect x="134.00" y="228.00" width="253.00" height="39.80" fill="url(#gh)" />
<rect x="134.00" y="228.00" width="253.00" height="0.80" fill="#a4c07c" />
<rect x="134.00" y="267.80" width="253.00" height="26.50" fill="url(#bd)" />
<rect x="136.00" y="230.00" width="12.00" height="12.40" fill="#050505" />
<path d="M140.41,233.66 A3.0,3.0 0 1 0 143.59,233.66" fill="none" stroke="#f0a020" stroke-width="1.3"/>
<line x1="142.0" y1="232.29999999999998" x2="142.0" y2="235.29999999999998" stroke="#f0a020" stroke-width="1.3"/>
<text x="150.00" y="238.80" font-size="7.2" fill="#222a1a" text-anchor="start" textLength="21.00" lengthAdjust="spacingAndGlyphs" >Cabinet</text>
<rect x="357.4" y="230" width="12.7" height="12.8" rx="1.3" fill="#0e0e10"/>
<rect x="358.09999999999997" y="230.7" width="11.3" height="11.4" rx="1" fill="#272a32"/>
<rect x="360.60" y="233.20" width="5.80" height="6.60" fill="#d08c18" />
<rect x="361.50" y="234.10" width="4.00" height="4.80" fill="#6e6a20" />
<rect x="372.4" y="230" width="12.7" height="12.8" rx="1.3" fill="#0e0e10"/>
<rect x="373.09999999999997" y="230.7" width="11.3" height="11.4" rx="1" fill="#272a32"/>
<path d="M375.45,236.4 L382.05,236.4 M378.75,233.4 L378.75,239.4" stroke="#d8921a" stroke-width="1.8" stroke-linecap="round"/>
<circle cx="378.75" cy="236.4" r="0.9" fill="#404020"/>
<text x="246.00" y="249.20" font-size="6.3" fill="#222a1a" text-anchor="middle" textLength="10.00" lengthAdjust="spacingAndGlyphs" >Bass</text>
<text x="277.70" y="249.20" font-size="6.3" fill="#222a1a" text-anchor="middle" textLength="14.00" lengthAdjust="spacingAndGlyphs" >Treble</text>
<text x="315.00" y="249.20" font-size="6.3" fill="#222a1a" text-anchor="middle" textLength="12.00" lengthAdjust="spacingAndGlyphs" >Level</text>
<rect x="168" y="262" width="58" height="11.5" rx="1" fill="#2a2a2a"/>
<rect x="170.00" y="263.80" width="42.00" height="7.90" fill="#050505" />
<text x="191.00" y="269.65" font-size="5.2" fill="#d88a10" text-anchor="middle" textLength="9.58" lengthAdjust="spacingAndGlyphs" >4x12</text>
<circle cx="218.5" cy="267.75" r="3.0" fill="none" stroke="#f0a020" stroke-width="1.4" stroke-dasharray="4.2 0.9"/>
<circle cx="246" cy="269.35" r="13.60" fill="#000" opacity="0.3"/>
<circle cx="246" cy="267.5" r="13.2" fill="#151413"/>
<line x1="238.75" y1="276.15" x2="238.41" y2="276.55" stroke="#f0a020" stroke-width="1.32" stroke-linecap="round"/>
<line x1="236.69" y1="273.88" x2="236.26" y2="274.18" stroke="#f0a020" stroke-width="1.32" stroke-linecap="round"/>
<line x1="235.32" y1="271.15" x2="234.82" y2="271.32" stroke="#f0a020" stroke-width="1.32" stroke-linecap="round"/>
<line x1="234.73" y1="268.16" x2="234.21" y2="268.19" stroke="#f0a020" stroke-width="1.32" stroke-linecap="round"/>
<line x1="234.97" y1="265.11" x2="234.45" y2="265.00" stroke="#f0a020" stroke-width="1.32" stroke-linecap="round"/>
<line x1="236.01" y1="262.24" x2="235.55" y2="261.99" stroke="#f0a020" stroke-width="1.32" stroke-linecap="round"/>
<line x1="237.79" y1="259.76" x2="237.41" y2="259.39" stroke="#f0a020" stroke-width="1.32" stroke-linecap="round"/>
<line x1="240.17" y1="257.84" x2="239.90" y2="257.39" stroke="#f0a020" stroke-width="1.32" stroke-linecap="round"/>
<line x1="242.97" y1="256.63" x2="242.83" y2="256.12" stroke="#f0a020" stroke-width="1.32" stroke-linecap="round"/>
<line x1="246.00" y1="256.21" x2="246.00" y2="255.69" stroke="#f0a020" stroke-width="1.32" stroke-linecap="round"/>
<line x1="249.03" y1="256.63" x2="249.17" y2="256.12" stroke="#2a1a0c" stroke-width="1.32" stroke-linecap="round"/>
<line x1="251.83" y1="257.84" x2="252.10" y2="257.39" stroke="#2a1a0c" stroke-width="1.32" stroke-linecap="round"/>
<line x1="254.21" y1="259.76" x2="254.59" y2="259.39" stroke="#2a1a0c" stroke-width="1.32" stroke-linecap="round"/>
<line x1="255.99" y1="262.24" x2="256.45" y2="261.99" stroke="#2a1a0c" stroke-width="1.32" stroke-linecap="round"/>
<line x1="257.03" y1="265.11" x2="257.55" y2="265.00" stroke="#2a1a0c" stroke-width="1.32" stroke-linecap="round"/>
<line x1="257.27" y1="268.16" x2="257.79" y2="268.19" stroke="#2a1a0c" stroke-width="1.32" stroke-linecap="round"/>
<line x1="256.68" y1="271.15" x2="257.18" y2="271.32" stroke="#2a1a0c" stroke-width="1.32" stroke-linecap="round"/>
<line x1="255.31" y1="273.88" x2="255.74" y2="274.18" stroke="#2a1a0c" stroke-width="1.32" stroke-linecap="round"/>
<line x1="253.25" y1="276.15" x2="253.59" y2="276.55" stroke="#2a1a0c" stroke-width="1.32" stroke-linecap="round"/>
<circle cx="246" cy="268.16" r="9.45" fill="#070707"/>
<circle cx="246" cy="267.5" r="8.45" fill="url(#kg)"/>
<circle cx="245.75" cy="266.23" r="5.91" fill="url(#kc)" stroke="url(#krim)" stroke-width="0.7"/>
<rect x="245.14" y="261.57" width="1.72" height="1.46" rx="0.3" fill="#f0a020"/>
<circle cx="277.7" cy="271.25" r="13.60" fill="#000" opacity="0.3"/>
<circle cx="277.7" cy="269.4" r="13.2" fill="#151413"/>
<line x1="270.45" y1="278.05" x2="270.11" y2="278.45" stroke="#f0a020" stroke-width="1.32" stroke-linecap="round"/>
<line x1="268.39" y1="275.78" x2="267.96" y2="276.08" stroke="#f0a020" stroke-width="1.32" stroke-linecap="round"/>
<line x1="267.02" y1="273.05" x2="266.52" y2="273.22" stroke="#f0a020" stroke-width="1.32" stroke-linecap="round"/>
<line x1="266.43" y1="270.06" x2="265.91" y2="270.09" stroke="#f0a020" stroke-width="1.32" stroke-linecap="round"/>
<line x1="266.67" y1="267.01" x2="266.15" y2="266.90" stroke="#f0a020" stroke-width="1.32" stroke-linecap="round"/>
<line x1="267.71" y1="264.14" x2="267.25" y2="263.89" stroke="#f0a020" stroke-width="1.32" stroke-linecap="round"/>
<line x1="269.49" y1="261.66" x2="269.11" y2="261.29" stroke="#f0a020" stroke-width="1.32" stroke-linecap="round"/>
<line x1="271.87" y1="259.74" x2="271.60" y2="259.29" stroke="#f0a020" stroke-width="1.32" stroke-linecap="round"/>
<line x1="274.67" y1="258.53" x2="274.53" y2="258.02" stroke="#f0a020" stroke-width="1.32" stroke-linecap="round"/>
<line x1="277.70" y1="258.11" x2="277.70" y2="257.59" stroke="#f0a020" stroke-width="1.32" stroke-linecap="round"/>
<line x1="280.73" y1="258.53" x2="280.87" y2="258.02" stroke="#f0a020" stroke-width="1.32" stroke-linecap="round"/>
<line x1="283.53" y1="259.74" x2="283.80" y2="259.29" stroke="#f0a020" stroke-width="1.32" stroke-linecap="round"/>
<line x1="285.91" y1="261.66" x2="286.29" y2="261.29" stroke="#2a1a0c" stroke-width="1.32" stroke-linecap="round"/>
<line x1="287.69" y1="264.14" x2="288.15" y2="263.89" stroke="#2a1a0c" stroke-width="1.32" stroke-linecap="round"/>
<line x1="288.73" y1="267.01" x2="289.25" y2="266.90" stroke="#2a1a0c" stroke-width="1.32" stroke-linecap="round"/>
<line x1="288.97" y1="270.06" x2="289.49" y2="270.09" stroke="#2a1a0c" stroke-width="1.32" stroke-linecap="round"/>
<line x1="288.38" y1="273.05" x2="288.88" y2="273.22" stroke="#2a1a0c" stroke-width="1.32" stroke-linecap="round"/>
<line x1="287.01" y1="275.78" x2="287.44" y2="276.08" stroke="#2a1a0c" stroke-width="1.32" stroke-linecap="round"/>
<line x1="284.95" y1="278.05" x2="285.29" y2="278.45" stroke="#2a1a0c" stroke-width="1.32" stroke-linecap="round"/>
<circle cx="277.7" cy="270.06" r="9.45" fill="#070707"/>
<circle cx="277.7" cy="269.4" r="8.45" fill="url(#kg)"/>
<circle cx="277.45" cy="268.13" r="5.91" fill="url(#kc)" stroke="url(#krim)" stroke-width="0.7"/>
<rect x="279.65" y="264.32" width="1.72" height="1.46" rx="0.3" fill="#f0a020"/>
<circle cx="315" cy="274.16" r="19.57" fill="#000" opacity="0.3"/>
<circle cx="315" cy="271.5" r="19" fill="#151413"/>
<circle cx="315" cy="271.5" r="19.30" fill="none" stroke="#333" stroke-width="0.6"/>
<line x1="306.08" y1="282.13" x2="303.52" y2="285.18" stroke="#f0a020" stroke-width="1.15"/>
<line x1="304.88" y1="280.99" x2="301.97" y2="283.72" stroke="#f0a020" stroke-width="1.15"/>
<line x1="303.83" y1="279.72" x2="300.61" y2="282.08" stroke="#f0a020" stroke-width="1.15"/>
<line x1="302.93" y1="278.33" x2="299.46" y2="280.30" stroke="#f0a020" stroke-width="1.15"/>
<line x1="302.20" y1="276.85" x2="298.52" y2="278.39" stroke="#f0a020" stroke-width="1.15"/>
<line x1="301.66" y1="275.29" x2="297.82" y2="276.38" stroke="#f0a020" stroke-width="1.15"/>
<line x1="301.30" y1="273.68" x2="297.36" y2="274.30" stroke="#f0a020" stroke-width="1.15"/>
<line x1="301.14" y1="272.03" x2="297.15" y2="272.18" stroke="#f0a020" stroke-width="1.15"/>
<line x1="301.18" y1="270.38" x2="297.20" y2="270.06" stroke="#f0a020" stroke-width="1.15"/>
<line x1="301.41" y1="268.74" x2="297.50" y2="267.95" stroke="#f0a020" stroke-width="1.15"/>
<line x1="301.83" y1="267.15" x2="298.04" y2="265.89" stroke="#f0a020" stroke-width="1.15"/>
<line x1="302.44" y1="265.61" x2="298.83" y2="263.92" stroke="#f0a020" stroke-width="1.15"/>
<line x1="303.23" y1="264.16" x2="299.85" y2="262.05" stroke="#2e1a0a" stroke-width="1.15"/>
<line x1="304.19" y1="262.81" x2="301.08" y2="260.31" stroke="#2e1a0a" stroke-width="1.15"/>
<line x1="305.30" y1="261.59" x2="302.51" y2="258.74" stroke="#2e1a0a" stroke-width="1.15"/>
<line x1="306.54" y1="260.51" x2="304.11" y2="257.34" stroke="#2e1a0a" stroke-width="1.15"/>
<line x1="307.91" y1="259.58" x2="305.87" y2="256.15" stroke="#2e1a0a" stroke-width="1.15"/>
<line x1="309.38" y1="258.82" x2="307.76" y2="255.17" stroke="#2e1a0a" stroke-width="1.15"/>
<line x1="310.93" y1="258.24" x2="309.76" y2="254.43" stroke="#2e1a0a" stroke-width="1.15"/>
<line x1="312.53" y1="257.85" x2="311.82" y2="253.92" stroke="#2e1a0a" stroke-width="1.15"/>
<line x1="314.17" y1="257.65" x2="313.94" y2="253.67" stroke="#2e1a0a" stroke-width="1.15"/>
<line x1="315.83" y1="257.65" x2="316.06" y2="253.67" stroke="#2e1a0a" stroke-width="1.15"/>
<line x1="317.47" y1="257.85" x2="318.18" y2="253.92" stroke="#2e1a0a" stroke-width="1.15"/>
<line x1="319.07" y1="258.24" x2="320.24" y2="254.43" stroke="#2e1a0a" stroke-width="1.15"/>
<line x1="320.62" y1="258.82" x2="322.24" y2="255.17" stroke="#2e1a0a" stroke-width="1.15"/>
<line x1="322.09" y1="259.58" x2="324.13" y2="256.15" stroke="#2e1a0a" stroke-width="1.15"/>
<line x1="323.46" y1="260.51" x2="325.89" y2="257.34" stroke="#2e1a0a" stroke-width="1.15"/>
<line x1="324.70" y1="261.59" x2="327.49" y2="258.74" stroke="#2e1a0a" stroke-width="1.15"/>
<line x1="325.81" y1="262.81" x2="328.92" y2="260.31" stroke="#2e1a0a" stroke-width="1.15"/>
<line x1="326.77" y1="264.16" x2="330.15" y2="262.05" stroke="#2e1a0a" stroke-width="1.15"/>
<line x1="327.56" y1="265.61" x2="331.17" y2="263.92" stroke="#2e1a0a" stroke-width="1.15"/>
<line x1="328.17" y1="267.15" x2="331.96" y2="265.89" stroke="#2e1a0a" stroke-width="1.15"/>
<line x1="328.59" y1="268.74" x2="332.50" y2="267.95" stroke="#2e1a0a" stroke-width="1.15"/>
<line x1="328.82" y1="270.38" x2="332.80" y2="270.06" stroke="#2e1a0a" stroke-width="1.15"/>
<line x1="328.86" y1="272.03" x2="332.85" y2="272.18" stroke="#2e1a0a" stroke-width="1.15"/>
<line x1="328.70" y1="273.68" x2="332.64" y2="274.30" stroke="#2e1a0a" stroke-width="1.15"/>
<line x1="328.34" y1="275.29" x2="332.18" y2="276.38" stroke="#2e1a0a" stroke-width="1.15"/>
<line x1="327.80" y1="276.85" x2="331.48" y2="278.39" stroke="#2e1a0a" stroke-width="1.15"/>
<line x1="327.07" y1="278.33" x2="330.54" y2="280.30" stroke="#2e1a0a" stroke-width="1.15"/>
<line x1="326.17" y1="279.72" x2="329.39" y2="282.08" stroke="#2e1a0a" stroke-width="1.15"/>
<line x1="325.12" y1="280.99" x2="328.03" y2="283.72" stroke="#2e1a0a" stroke-width="1.15"/>
<line x1="323.92" y1="282.13" x2="326.48" y2="285.18" stroke="#2e1a0a" stroke-width="1.15"/>
<circle cx="315" cy="272.45" r="13.35" fill="#070707"/>
<circle cx="315" cy="271.5" r="12.35" fill="url(#kg)"/>
<circle cx="314.63" cy="269.65" r="8.64" fill="url(#kc)" stroke="url(#krim)" stroke-width="0.7"/>
<line x1="306.53" y1="266.92" x2="304.35" y2="265.74" stroke="#f0a020" stroke-width="1.2"/>
<rect x="119.00" y="294.30" width="283.50" height="1.40" fill="#131313" />
<rect x="402.50" y="34.00" width="6.50" height="266.00" fill="#151515" />
<rect x="403.50" y="35.00" width="4.50" height="265.00" fill="#2c2c2c" />
<rect x="365.00" y="304.00" width="20.00" height="1.50" fill="#2a2a2a" />
<text x="610.00" y="297.50" font-size="34" fill="#181818" text-anchor="middle" textLength="150.00" lengthAdjust="spacingAndGlyphs" >guitarix</text>
<text x="623.00" y="295.30" font-size="6.2" fill="#131313" text-anchor="middle" textLength="130.00" lengthAdjust="spacingAndGlyphs" >GNU/Linux Virtual Guitar Amplifier</text>
<rect x="409.20" y="34.90" width="283.00" height="251.00" fill="#1c1c1c" />
<rect x="409.20" y="34.90" width="15.80" height="251.00" fill="#292929" />
<rect x="677.70" y="34.90" width="14.70" height="251.00" fill="#292929" />
<rect x="409.20" y="34.90" width="1.00" height="251.00" fill="#141414" />
<rect x="424.20" y="34.90" width="0.80" height="251.00" fill="#171717" />
<rect x="677.70" y="34.90" width="4.00" height="251.00" fill="#2f2f2f" />
<rect x="691.60" y="34.90" width="0.80" height="251.00" fill="#141414" />
<circle cx="417" cy="41.8" r="4.8999999999999995" fill="#101010"/>
<circle cx="417" cy="41.3" r="4.6" fill="url(#sg)"/>
<circle cx="417" cy="41.099999999999994" r="1.93" fill="#000"/>
<circle cx="685.3" cy="41.8" r="4.8999999999999995" fill="#101010"/>
<circle cx="685.3" cy="41.3" r="4.6" fill="url(#sg)"/>
<circle cx="685.3" cy="41.099999999999994" r="1.93" fill="#000"/>
<circle cx="417" cy="94.5" r="4.8999999999999995" fill="#101010"/>
<circle cx="417" cy="94" r="4.6" fill="url(#sg)"/>
<circle cx="417" cy="93.8" r="1.93" fill="#000"/>
<circle cx="685.3" cy="94.5" r="4.8999999999999995" fill="#101010"/>
<circle cx="685.3" cy="94" r="4.6" fill="url(#sg)"/>
<circle cx="685.3" cy="93.8" r="1.93" fill="#000"/>
<circle cx="417" cy="111.1" r="4.8999999999999995" fill="#101010"/>
<circle cx="417" cy="110.6" r="4.6" fill="url(#sg)"/>
<circle cx="417" cy="110.39999999999999" r="1.93" fill="#000"/>
<circle cx="685.3" cy="111.1" r="4.8999999999999995" fill="#101010"/>
<circle cx="685.3" cy="110.6" r="4.6" fill="url(#sg)"/>
<circle cx="685.3" cy="110.39999999999999" r="1.93" fill="#000"/>
<circle cx="417" cy="163.2" r="4.8999999999999995" fill="#101010"/>
<circle cx="417" cy="162.7" r="4.6" fill="url(#sg)"/>
<circle cx="417" cy="162.5" r="1.93" fill="#000"/>
<circle cx="685.3" cy="163.2" r="4.8999999999999995" fill="#101010"/>
<circle cx="685.3" cy="162.7" r="4.6" fill="url(#sg)"/>
<circle cx="685.3" cy="162.5" r="1.93" fill="#000"/>
<circle cx="417" cy="180.5" r="4.8999999999999995" fill="#101010"/>
<circle cx="417" cy="180" r="4.6" fill="url(#sg)"/>
<circle cx="417" cy="179.8" r="1.93" fill="#000"/>
<circle cx="685.3" cy="180.5" r="4.8999999999999995" fill="#101010"/>
<circle cx="685.3" cy="180" r="4.6" fill="url(#sg)"/>
<circle cx="685.3" cy="179.8" r="1.93" fill="#000"/>
<circle cx="417" cy="278.0" r="4.8999999999999995" fill="#101010"/>
<circle cx="417" cy="277.5" r="4.6" fill="url(#sg)"/>
<circle cx="417" cy="277.3" r="1.93" fill="#000"/>
<circle cx="685.3" cy="278.0" r="4.8999999999999995" fill="#101010"/>
<circle cx="685.3" cy="277.5" r="4.6" fill="url(#sg)"/>
<circle cx="685.3" cy="277.3" r="1.93" fill="#000"/>
<rect x="424.40" y="34.00" width="253.90" height="41.60" fill="#101010" />
<rect x="425.00" y="34.60" width="252.70" height="40.40" fill="url(#gg)" />
<rect x="425.00" y="34.60" width="252.70" height="40.40" fill="url(#gh)" />
<rect x="425.00" y="34.60" width="252.70" height="0.80" fill="#a4c07c" />
<rect x="425.00" y="75.00" width="252.70" height="26.80" fill="url(#bd)" />
<rect x="424.40" y="103.00" width="253.90" height="40.60" fill="#101010" />
<rect x="425.00" y="103.60" width="252.70" height="39.40" fill="url(#gg)" />
<rect x="425.00" y="103.60" width="252.70" height="39.40" fill="url(#gh)" />
<rect x="425.00" y="103.60" width="252.70" height="0.80" fill="#a4c07c" />
<rect x="425.00" y="143.00" width="252.70" height="27.80" fill="url(#bd)" />
<rect x="424.40" y="171.80" width="253.90" height="68.50" fill="#101010" />
<rect x="425.00" y="172.40" width="252.70" height="67.30" fill="url(#gg)" />
<rect x="425.00" y="172.40" width="252.70" height="67.30" fill="url(#gh)" />
<rect x="425.00" y="172.40" width="252.70" height="0.80" fill="#a4c07c" />
<rect x="425.00" y="239.70" width="252.70" height="45.80" fill="url(#bd)" />
<rect x="409.20" y="101.80" width="283.00" height="1.00" fill="#0e0e0e" />
<rect x="409.20" y="170.80" width="283.00" height="1.00" fill="#0e0e0e" />
<rect x="426.60" y="37.00" width="12.50" height="13.00" fill="#050505" />
<path d="M431.26,40.96 A3.0,3.0 0 1 0 434.44,40.96" fill="none" stroke="#f0a020" stroke-width="1.3"/>
<line x1="432.85" y1="39.6" x2="432.85" y2="42.6" stroke="#f0a020" stroke-width="1.3"/>
<path d="M441.5,41.3 L443.7,43.5 L441.5,45.7 Z M445.9,41.3 L443.7,43.5 L445.9,45.7 Z" fill="#111"/>
<rect x="441.50" y="41.30" width="0.80" height="4.40" fill="#111" />
<rect x="445.10" y="41.30" width="0.80" height="4.40" fill="#111" />
<text x="448.50" y="46.20" font-size="7.0" fill="#1e2418" text-anchor="start" textLength="18.50" lengthAdjust="spacingAndGlyphs" >Chorus</text>
<rect x="648" y="37" width="12.7" height="12.8" rx="1.3" fill="#0e0e10"/>
<rect x="648.7" y="37.7" width="11.3" height="11.4" rx="1" fill="#272a32"/>
<rect x="651.20" y="40.20" width="5.80" height="6.60" fill="#d08c18" />
<rect x="652.10" y="41.10" width="4.00" height="4.80" fill="#6e6a20" />
<rect x="663" y="37" width="12.7" height="12.8" rx="1.3" fill="#0e0e10"/>
<rect x="663.7" y="37.7" width="11.3" height="11.4" rx="1" fill="#272a32"/>
<path d="M666.0500000000001,43.4 L672.65,43.4 M669.35,40.4 L669.35,46.4" stroke="#d8921a" stroke-width="1.8" stroke-linecap="round"/>
<circle cx="669.35" cy="43.4" r="0.9" fill="#404020"/>
<text x="490.40" y="56.50" font-size="6.3" fill="#222a1a" text-anchor="middle" textLength="13.00" lengthAdjust="spacingAndGlyphs" >Delay</text>
<text x="527.70" y="56.50" font-size="6.3" fill="#222a1a" text-anchor="middle" textLength="13.50" lengthAdjust="spacingAndGlyphs" >Depth</text>
<text x="563.80" y="56.50" font-size="6.3" fill="#222a1a" text-anchor="middle" textLength="10.00" lengthAdjust="spacingAndGlyphs" >Freq</text>
<text x="606.00" y="56.50" font-size="6.3" fill="#222a1a" text-anchor="middle" textLength="12.50" lengthAdjust="spacingAndGlyphs" >Level</text>
<circle cx="490.8" cy="74.78" r="13.80" fill="#000" opacity="0.3"/>
<circle cx="490.8" cy="72.9" r="13.4" fill="#151413"/>
<line x1="483.44" y1="81.68" x2="483.09" y2="82.09" stroke="#f0a020" stroke-width="1.34" stroke-linecap="round"/>
<line x1="481.53" y1="79.63" x2="481.10" y2="79.95" stroke="#f0a020" stroke-width="1.34" stroke-linecap="round"/>
<line x1="480.18" y1="77.19" x2="479.68" y2="77.39" stroke="#2a1a0c" stroke-width="1.34" stroke-linecap="round"/>
<line x1="479.45" y1="74.49" x2="478.92" y2="74.57" stroke="#2a1a0c" stroke-width="1.34" stroke-linecap="round"/>
<line x1="479.41" y1="71.70" x2="478.87" y2="71.65" stroke="#2a1a0c" stroke-width="1.34" stroke-linecap="round"/>
<line x1="480.03" y1="68.98" x2="479.53" y2="68.80" stroke="#2a1a0c" stroke-width="1.34" stroke-linecap="round"/>
<line x1="481.30" y1="66.49" x2="480.86" y2="66.19" stroke="#2a1a0c" stroke-width="1.34" stroke-linecap="round"/>
<line x1="483.13" y1="64.39" x2="482.78" y2="63.99" stroke="#2a1a0c" stroke-width="1.34" stroke-linecap="round"/>
<line x1="485.42" y1="62.78" x2="485.17" y2="62.31" stroke="#2a1a0c" stroke-width="1.34" stroke-linecap="round"/>
<line x1="488.03" y1="61.78" x2="487.90" y2="61.26" stroke="#2a1a0c" stroke-width="1.34" stroke-linecap="round"/>
<line x1="490.80" y1="61.44" x2="490.80" y2="60.91" stroke="#2a1a0c" stroke-width="1.34" stroke-linecap="round"/>
<line x1="493.57" y1="61.78" x2="493.70" y2="61.26" stroke="#2a1a0c" stroke-width="1.34" stroke-linecap="round"/>
<line x1="496.18" y1="62.78" x2="496.43" y2="62.31" stroke="#2a1a0c" stroke-width="1.34" stroke-linecap="round"/>
<line x1="498.47" y1="64.39" x2="498.82" y2="63.99" stroke="#2a1a0c" stroke-width="1.34" stroke-linecap="round"/>
<line x1="500.30" y1="66.49" x2="500.74" y2="66.19" stroke="#2a1a0c" stroke-width="1.34" stroke-linecap="round"/>
<line x1="501.57" y1="68.98" x2="502.07" y2="68.80" stroke="#2a1a0c" stroke-width="1.34" stroke-linecap="round"/>
<line x1="502.19" y1="71.70" x2="502.73" y2="71.65" stroke="#2a1a0c" stroke-width="1.34" stroke-linecap="round"/>
<line x1="502.15" y1="74.49" x2="502.68" y2="74.57" stroke="#2a1a0c" stroke-width="1.34" stroke-linecap="round"/>
<line x1="501.42" y1="77.19" x2="501.92" y2="77.39" stroke="#2a1a0c" stroke-width="1.34" stroke-linecap="round"/>
<line x1="500.07" y1="79.63" x2="500.50" y2="79.95" stroke="#2a1a0c" stroke-width="1.34" stroke-linecap="round"/>
<line x1="498.16" y1="81.68" x2="498.51" y2="82.09" stroke="#2a1a0c" stroke-width="1.34" stroke-linecap="round"/>
<circle cx="490.8" cy="73.57" r="9.58" fill="#070707"/>
<circle cx="490.8" cy="72.9" r="8.58" fill="url(#kg)"/>
<circle cx="490.54" cy="71.61" r="6.00" fill="url(#kc)" stroke="url(#krim)" stroke-width="0.7"/>
<rect x="485.49" y="74.63" width="1.74" height="1.48" rx="0.3" fill="#f0a020"/>
<circle cx="527.7" cy="74.78" r="13.80" fill="#000" opacity="0.3"/>
<circle cx="527.7" cy="72.9" r="13.4" fill="#151413"/>
<line x1="520.34" y1="81.68" x2="519.99" y2="82.09" stroke="#f0a020" stroke-width="1.34" stroke-linecap="round"/>
<line x1="518.43" y1="79.63" x2="518.00" y2="79.95" stroke="#f0a020" stroke-width="1.34" stroke-linecap="round"/>
<line x1="517.08" y1="77.19" x2="516.58" y2="77.39" stroke="#f0a020" stroke-width="1.34" stroke-linecap="round"/>
<line x1="516.35" y1="74.49" x2="515.82" y2="74.57" stroke="#f0a020" stroke-width="1.34" stroke-linecap="round"/>
<line x1="516.31" y1="71.70" x2="515.77" y2="71.65" stroke="#f0a020" stroke-width="1.34" stroke-linecap="round"/>
<line x1="516.93" y1="68.98" x2="516.43" y2="68.80" stroke="#f0a020" stroke-width="1.34" stroke-linecap="round"/>
<line x1="518.20" y1="66.49" x2="517.76" y2="66.19" stroke="#f0a020" stroke-width="1.34" stroke-linecap="round"/>
<line x1="520.03" y1="64.39" x2="519.68" y2="63.99" stroke="#2a1a0c" stroke-width="1.34" stroke-linecap="round"/>
<line x1="522.32" y1="62.78" x2="522.07" y2="62.31" stroke="#2a1a0c" stroke-width="1.34" stroke-linecap="round"/>
<line x1="524.93" y1="61.78" x2="524.80" y2="61.26" stroke="#2a1a0c" stroke-width="1.34" stroke-linecap="round"/>
<line x1="527.70" y1="61.44" x2="527.70" y2="60.91" stroke="#2a1a0c" stroke-width="1.34" stroke-linecap="round"/>
<line x1="530.47" y1="61.78" x2="530.60" y2="61.26" stroke="#2a1a0c" stroke-width="1.34" stroke-linecap="round"/>
<line x1="533.08" y1="62.78" x2="533.33" y2="62.31" stroke="#2a1a0c" stroke-width="1.34" stroke-linecap="round"/>
<line x1="535.37" y1="64.39" x2="535.72" y2="63.99" stroke="#2a1a0c" stroke-width="1.34" stroke-linecap="round"/>
<line x1="537.20" y1="66.49" x2="537.64" y2="66.19" stroke="#2a1a0c" stroke-width="1.34" stroke-linecap="round"/>
<line x1="538.47" y1="68.98" x2="538.97" y2="68.80" stroke="#2a1a0c" stroke-width="1.34" stroke-linecap="round"/>
<line x1="539.09" y1="71.70" x2="539.63" y2="71.65" stroke="#2a1a0c" stroke-width="1.34" stroke-linecap="round"/>
<line x1="539.05" y1="74.49" x2="539.58" y2="74.57" stroke="#2a1a0c" stroke-width="1.34" stroke-linecap="round"/>
<line x1="538.32" y1="77.19" x2="538.82" y2="77.39" stroke="#2a1a0c" stroke-width="1.34" stroke-linecap="round"/>
<line x1="536.97" y1="79.63" x2="537.40" y2="79.95" stroke="#2a1a0c" stroke-width="1.34" stroke-linecap="round"/>
<line x1="535.06" y1="81.68" x2="535.41" y2="82.09" stroke="#2a1a0c" stroke-width="1.34" stroke-linecap="round"/>
<circle cx="527.7" cy="73.57" r="9.58" fill="#070707"/>
<circle cx="527.7" cy="72.9" r="8.58" fill="url(#kg)"/>
<circle cx="527.44" cy="71.61" r="6.00" fill="url(#kc)" stroke="url(#krim)" stroke-width="0.7"/>
<rect x="522.56" y="69.15" width="1.74" height="1.48" rx="0.3" fill="#f0a020"/>
<circle cx="563.8" cy="74.78" r="13.80" fill="#000" opacity="0.3"/>
<circle cx="563.8" cy="72.9" r="13.4" fill="#151413"/>
<line x1="556.44" y1="81.68" x2="556.09" y2="82.09" stroke="#f0a020" stroke-width="1.34" stroke-linecap="round"/>
<line x1="554.53" y1="79.63" x2="554.10" y2="79.95" stroke="#2a1a0c" stroke-width="1.34" stroke-linecap="round"/>
<line x1="553.18" y1="77.19" x2="552.68" y2="77.39" stroke="#2a1a0c" stroke-width="1.34" stroke-linecap="round"/>
<line x1="552.45" y1="74.49" x2="551.92" y2="74.57" stroke="#2a1a0c" stroke-width="1.34" stroke-linecap="round"/>
<line x1="552.41" y1="71.70" x2="551.87" y2="71.65" stroke="#2a1a0c" stroke-width="1.34" stroke-linecap="round"/>
<line x1="553.03" y1="68.98" x2="552.53" y2="68.80" stroke="#2a1a0c" stroke-width="1.34" stroke-linecap="round"/>
<line x1="554.30" y1="66.49" x2="553.86" y2="66.19" stroke="#2a1a0c" stroke-width="1.34" stroke-linecap="round"/>
<line x1="556.13" y1="64.39" x2="555.78" y2="63.99" stroke="#2a1a0c" stroke-width="1.34" stroke-linecap="round"/>
<line x1="558.42" y1="62.78" x2="558.17" y2="62.31" stroke="#2a1a0c" stroke-width="1.34" stroke-linecap="round"/>
<line x1="561.03" y1="61.78" x2="560.90" y2="61.26" stroke="#2a1a0c" stroke-width="1.34" stroke-linecap="round"/>
<line x1="563.80" y1="61.44" x2="563.80" y2="60.91" stroke="#2a1a0c" stroke-width="1.34" stroke-linecap="round"/>
<line x1="566.57" y1="61.78" x2="566.70" y2="61.26" stroke="#2a1a0c" stroke-width="1.34" stroke-linecap="round"/>
<line x1="569.18" y1="62.78" x2="569.43" y2="62.31" stroke="#2a1a0c" stroke-width="1.34" stroke-linecap="round"/>
<line x1="571.47" y1="64.39" x2="571.82" y2="63.99" stroke="#2a1a0c" stroke-width="1.34" stroke-linecap="round"/>
<line x1="573.30" y1="66.49" x2="573.74" y2="66.19" stroke="#2a1a0c" stroke-width="1.34" stroke-linecap="round"/>
<line x1="574.57" y1="68.98" x2="575.07" y2="68.80" stroke="#2a1a0c" stroke-width="1.34" stroke-linecap="round"/>
<line x1="575.19" y1="71.70" x2="575.73" y2="71.65" stroke="#2a1a0c" stroke-width="1.34" stroke-linecap="round"/>
<line x1="575.15" y1="74.49" x2="575.68" y2="74.57" stroke="#2a1a0c" stroke-width="1.34" stroke-linecap="round"/>
<line x1="574.42" y1="77.19" x2="574.92" y2="77.39" stroke="#2a1a0c" stroke-width="1.34" stroke-linecap="round"/>
<line x1="573.07" y1="79.63" x2="573.50" y2="79.95" stroke="#2a1a0c" stroke-width="1.34" stroke-linecap="round"/>
<line x1="571.16" y1="81.68" x2="571.51" y2="82.09" stroke="#2a1a0c" stroke-width="1.34" stroke-linecap="round"/>
<circle cx="563.8" cy="73.57" r="9.58" fill="#070707"/>
<circle cx="563.8" cy="72.9" r="8.58" fill="url(#kg)"/>
<circle cx="563.54" cy="71.61" r="6.00" fill="url(#kc)" stroke="url(#krim)" stroke-width="0.7"/>
<rect x="559.25" y="75.63" width="1.74" height="1.48" rx="0.3" fill="#f0a020"/>
<circle cx="606.8" cy="80.49" r="19.05" fill="#000" opacity="0.3"/>
<circle cx="606.8" cy="77.9" r="18.5" fill="#151413"/>
<circle cx="606.8" cy="77.9" r="18.80" fill="none" stroke="#333" stroke-width="0.6"/>
<line x1="598.12" y1="88.25" x2="595.62" y2="91.22" stroke="#f0a020" stroke-width="1.15"/>
<line x1="596.92" y1="87.11" x2="594.08" y2="89.76" stroke="#f0a020" stroke-width="1.15"/>
<line x1="595.87" y1="85.84" x2="592.73" y2="88.12" stroke="#f0a020" stroke-width="1.15"/>
<line x1="594.99" y1="84.45" x2="591.59" y2="86.33" stroke="#f0a020" stroke-width="1.15"/>
<line x1="594.28" y1="82.96" x2="590.68" y2="84.41" stroke="#f0a020" stroke-width="1.15"/>
<line x1="593.76" y1="81.40" x2="590.00" y2="82.40" stroke="#f0a020" stroke-width="1.15"/>
<line x1="593.43" y1="79.78" x2="589.58" y2="80.32" stroke="#f0a020" stroke-width="1.15"/>
<line x1="593.30" y1="78.14" x2="589.41" y2="78.20" stroke="#f0a020" stroke-width="1.15"/>
<line x1="593.37" y1="76.49" x2="589.51" y2="76.08" stroke="#f0a020" stroke-width="1.15"/>
<line x1="593.64" y1="74.86" x2="589.86" y2="73.99" stroke="#f0a020" stroke-width="1.15"/>
<line x1="594.11" y1="73.28" x2="590.46" y2="71.95" stroke="#f0a020" stroke-width="1.15"/>
<line x1="594.77" y1="71.77" x2="591.31" y2="70.01" stroke="#f0a020" stroke-width="1.15"/>
<line x1="595.60" y1="70.35" x2="592.38" y2="68.18" stroke="#f0a020" stroke-width="1.15"/>
<line x1="596.61" y1="69.04" x2="593.68" y2="66.49" stroke="#f0a020" stroke-width="1.15"/>
<line x1="597.76" y1="67.86" x2="595.16" y2="64.98" stroke="#f0a020" stroke-width="1.15"/>
<line x1="599.05" y1="66.84" x2="596.83" y2="63.65" stroke="#f0a020" stroke-width="1.15"/>
<line x1="600.46" y1="65.98" x2="598.64" y2="62.55" stroke="#f0a020" stroke-width="1.15"/>
<line x1="601.96" y1="65.29" x2="600.57" y2="61.67" stroke="#f0a020" stroke-width="1.15"/>
<line x1="603.53" y1="64.80" x2="602.59" y2="61.03" stroke="#f0a020" stroke-width="1.15"/>
<line x1="605.15" y1="64.50" x2="604.68" y2="60.64" stroke="#f0a020" stroke-width="1.15"/>
<line x1="606.80" y1="64.40" x2="606.80" y2="60.51" stroke="#f0a020" stroke-width="1.15"/>
<line x1="608.45" y1="64.50" x2="608.92" y2="60.64" stroke="#f0a020" stroke-width="1.15"/>
<line x1="610.07" y1="64.80" x2="611.01" y2="61.03" stroke="#f0a020" stroke-width="1.15"/>
<line x1="611.64" y1="65.29" x2="613.03" y2="61.67" stroke="#f0a020" stroke-width="1.15"/>
<line x1="613.14" y1="65.98" x2="614.96" y2="62.55" stroke="#f0a020" stroke-width="1.15"/>
<line x1="614.55" y1="66.84" x2="616.77" y2="63.65" stroke="#f0a020" stroke-width="1.15"/>
<line x1="615.84" y1="67.86" x2="618.44" y2="64.98" stroke="#f0a020" stroke-width="1.15"/>
<line x1="616.99" y1="69.04" x2="619.92" y2="66.49" stroke="#2e1a0a" stroke-width="1.15"/>
<line x1="618.00" y1="70.35" x2="621.22" y2="68.18" stroke="#2e1a0a" stroke-width="1.15"/>
<line x1="618.83" y1="71.77" x2="622.29" y2="70.01" stroke="#2e1a0a" stroke-width="1.15"/>
<line x1="619.49" y1="73.28" x2="623.14" y2="71.95" stroke="#2e1a0a" stroke-width="1.15"/>
<line x1="619.96" y1="74.86" x2="623.74" y2="73.99" stroke="#2e1a0a" stroke-width="1.15"/>
<line x1="620.23" y1="76.49" x2="624.09" y2="76.08" stroke="#2e1a0a" stroke-width="1.15"/>
<line x1="620.30" y1="78.14" x2="624.19" y2="78.20" stroke="#2e1a0a" stroke-width="1.15"/>
<line x1="620.17" y1="79.78" x2="624.02" y2="80.32" stroke="#2e1a0a" stroke-width="1.15"/>
<line x1="619.84" y1="81.40" x2="623.60" y2="82.40" stroke="#2e1a0a" stroke-width="1.15"/>
<line x1="619.32" y1="82.96" x2="622.92" y2="84.41" stroke="#2e1a0a" stroke-width="1.15"/>
<line x1="618.61" y1="84.45" x2="622.01" y2="86.33" stroke="#2e1a0a" stroke-width="1.15"/>
<line x1="617.73" y1="85.84" x2="620.87" y2="88.12" stroke="#2e1a0a" stroke-width="1.15"/>
<line x1="616.68" y1="87.11" x2="619.52" y2="89.76" stroke="#2e1a0a" stroke-width="1.15"/>
<line x1="615.48" y1="88.25" x2="617.98" y2="91.22" stroke="#2e1a0a" stroke-width="1.15"/>
<circle cx="606.8" cy="78.83" r="13.03" fill="#070707"/>
<circle cx="606.8" cy="77.9" r="12.03" fill="url(#kg)"/>
<circle cx="606.44" cy="76.10" r="8.42" fill="url(#kc)" stroke="url(#krim)" stroke-width="0.7"/>
<line x1="613.41" y1="71.24" x2="615.10" y2="69.54" stroke="#f0a020" stroke-width="1.2"/>
<rect x="427.00" y="105.50" width="12.50" height="13.00" fill="#303038" />
<path d="M431.66,109.46 A3.0,3.0 0 1 0 434.84,109.46" fill="none" stroke="#a86a18" stroke-width="1.3"/>
<line x1="433.25" y1="108.1" x2="433.25" y2="111.1" stroke="#a86a18" stroke-width="1.3"/>
<path d="M441.5,109.7 L443.7,111.9 L441.5,114.10000000000001 Z M445.9,109.7 L443.7,111.9 L445.9,114.10000000000001 Z" fill="#111"/>
<rect x="441.50" y="109.70" width="0.80" height="4.40" fill="#111" />
<rect x="445.10" y="109.70" width="0.80" height="4.40" fill="#111" />
<text x="448.50" y="114.60" font-size="7.0" fill="#1e2418" text-anchor="start" textLength="23.00" lengthAdjust="spacingAndGlyphs" >Postamp</text>
<rect x="648" y="105.6" width="12.7" height="12.8" rx="1.3" fill="#0e0e10"/>
<rect x="648.7" y="106.3" width="11.3" height="11.4" rx="1" fill="#272a32"/>
<rect x="651.20" y="108.80" width="5.80" height="6.60" fill="#d08c18" />
<rect x="652.10" y="109.70" width="4.00" height="4.80" fill="#6e6a20" />
<rect x="663" y="105.6" width="12.7" height="12.8" rx="1.3" fill="#0e0e10"/>
<rect x="663.7" y="106.3" width="11.3" height="11.4" rx="1" fill="#272a32"/>
<path d="M666.0500000000001,112.0 L672.65,112.0 M669.35,109.0 L669.35,115.0" stroke="#d8921a" stroke-width="1.8" stroke-linecap="round"/>
<circle cx="669.35" cy="112.0" r="0.9" fill="#404020"/>
<text x="465.00" y="125.00" font-size="6.3" fill="#222a1a" text-anchor="middle" textLength="14.50" lengthAdjust="spacingAndGlyphs" >Dry/FB</text>
<text x="502.80" y="125.00" font-size="6.3" fill="#222a1a" text-anchor="middle" textLength="17.00" lengthAdjust="spacingAndGlyphs" >Dry/Wet</text>
<text x="534.50" y="125.00" font-size="6.3" fill="#222a1a" text-anchor="middle" textLength="12.50" lengthAdjust="spacingAndGlyphs" >Level</text>
<text x="567.00" y="125.00" font-size="6.3" fill="#222a1a" text-anchor="middle" textLength="13.00" lengthAdjust="spacingAndGlyphs" >Tube I</text>
<text x="599.00" y="125.00" font-size="6.3" fill="#222a1a" text-anchor="middle" textLength="14.00" lengthAdjust="spacingAndGlyphs" >Tube II</text>
<text x="636.80" y="125.00" font-size="6.3" fill="#222a1a" text-anchor="middle" textLength="15.50" lengthAdjust="spacingAndGlyphs" >Wet/FB</text>
<circle cx="465.3" cy="149.52" r="18.54" fill="#000" opacity="0.3"/>
<circle cx="465.3" cy="147" r="18" fill="#151413"/>
<circle cx="465.3" cy="147" r="18.30" fill="none" stroke="#333" stroke-width="0.6"/>
<line x1="456.85" y1="157.07" x2="454.42" y2="159.96" stroke="#f0a020" stroke-width="1.15"/>
<line x1="455.66" y1="155.93" x2="452.89" y2="158.50" stroke="#f0a020" stroke-width="1.15"/>
<line x1="454.62" y1="154.66" x2="451.55" y2="156.86" stroke="#f0a020" stroke-width="1.15"/>
<line x1="453.75" y1="153.26" x2="450.42" y2="155.06" stroke="#f0a020" stroke-width="1.15"/>
<line x1="453.06" y1="151.77" x2="449.53" y2="153.14" stroke="#f0a020" stroke-width="1.15"/>
<line x1="452.56" y1="150.20" x2="448.89" y2="151.12" stroke="#f0a020" stroke-width="1.15"/>
<line x1="452.26" y1="148.58" x2="448.50" y2="149.04" stroke="#f0a020" stroke-width="1.15"/>
<line x1="452.16" y1="146.94" x2="448.38" y2="146.92" stroke="#f0a020" stroke-width="1.15"/>
<line x1="452.27" y1="145.30" x2="448.52" y2="144.81" stroke="#f0a020" stroke-width="1.15"/>
<line x1="452.59" y1="143.68" x2="448.93" y2="142.73" stroke="#f0a020" stroke-width="1.15"/>
<line x1="453.10" y1="142.12" x2="449.59" y2="140.72" stroke="#f0a020" stroke-width="1.15"/>
<line x1="453.80" y1="140.63" x2="450.50" y2="138.80" stroke="#f0a020" stroke-width="1.15"/>
<line x1="454.69" y1="139.25" x2="451.64" y2="137.02" stroke="#f0a020" stroke-width="1.15"/>
<line x1="455.74" y1="137.98" x2="452.99" y2="135.39" stroke="#f0a020" stroke-width="1.15"/>
<line x1="456.94" y1="136.86" x2="454.54" y2="133.94" stroke="#f0a020" stroke-width="1.15"/>
<line x1="458.28" y1="135.89" x2="456.26" y2="132.70" stroke="#f0a020" stroke-width="1.15"/>
<line x1="459.72" y1="135.10" x2="458.12" y2="131.68" stroke="#f0a020" stroke-width="1.15"/>
<line x1="461.25" y1="134.50" x2="460.09" y2="130.90" stroke="#f0a020" stroke-width="1.15"/>
<line x1="462.84" y1="134.09" x2="462.14" y2="130.38" stroke="#f0a020" stroke-width="1.15"/>
<line x1="464.48" y1="133.89" x2="464.24" y2="130.11" stroke="#f0a020" stroke-width="1.15"/>
<line x1="466.12" y1="133.89" x2="466.36" y2="130.11" stroke="#2e1a0a" stroke-width="1.15"/>
<line x1="467.76" y1="134.09" x2="468.46" y2="130.38" stroke="#2e1a0a" stroke-width="1.15"/>
<line x1="469.35" y1="134.50" x2="470.51" y2="130.90" stroke="#2e1a0a" stroke-width="1.15"/>
<line x1="470.88" y1="135.10" x2="472.48" y2="131.68" stroke="#2e1a0a" stroke-width="1.15"/>
<line x1="472.32" y1="135.89" x2="474.34" y2="132.70" stroke="#2e1a0a" stroke-width="1.15"/>
<line x1="473.66" y1="136.86" x2="476.06" y2="133.94" stroke="#2e1a0a" stroke-width="1.15"/>
<line x1="474.86" y1="137.98" x2="477.61" y2="135.39" stroke="#2e1a0a" stroke-width="1.15"/>
<line x1="475.91" y1="139.25" x2="478.96" y2="137.02" stroke="#2e1a0a" stroke-width="1.15"/>
<line x1="476.80" y1="140.63" x2="480.10" y2="138.80" stroke="#2e1a0a" stroke-width="1.15"/>
<line x1="477.50" y1="142.12" x2="481.01" y2="140.72" stroke="#2e1a0a" stroke-width="1.15"/>
<line x1="478.01" y1="143.68" x2="481.67" y2="142.73" stroke="#2e1a0a" stroke-width="1.15"/>
<line x1="478.33" y1="145.30" x2="482.08" y2="144.81" stroke="#2e1a0a" stroke-width="1.15"/>
<line x1="478.44" y1="146.94" x2="482.22" y2="146.92" stroke="#2e1a0a" stroke-width="1.15"/>
<line x1="478.34" y1="148.58" x2="482.10" y2="149.04" stroke="#2e1a0a" stroke-width="1.15"/>
<line x1="478.04" y1="150.20" x2="481.71" y2="151.12" stroke="#2e1a0a" stroke-width="1.15"/>
<line x1="477.54" y1="151.77" x2="481.07" y2="153.14" stroke="#2e1a0a" stroke-width="1.15"/>
<line x1="476.85" y1="153.26" x2="480.18" y2="155.06" stroke="#2e1a0a" stroke-width="1.15"/>
<line x1="475.98" y1="154.66" x2="479.05" y2="156.86" stroke="#2e1a0a" stroke-width="1.15"/>
<line x1="474.94" y1="155.93" x2="477.71" y2="158.50" stroke="#2e1a0a" stroke-width="1.15"/>
<line x1="473.75" y1="157.07" x2="476.18" y2="159.96" stroke="#2e1a0a" stroke-width="1.15"/>
<circle cx="465.3" cy="147.90" r="12.70" fill="#070707"/>
<circle cx="465.3" cy="147" r="11.70" fill="url(#kg)"/>
<circle cx="464.95" cy="145.25" r="8.19" fill="url(#kc)" stroke="url(#krim)" stroke-width="0.7"/>
<line x1="465.30" y1="137.87" x2="465.30" y2="135.53" stroke="#f0a020" stroke-width="1.2"/>
<circle cx="502.8" cy="142.52" r="13.39" fill="#000" opacity="0.3"/>
<circle cx="502.8" cy="140.7" r="13" fill="#151413"/>
<line x1="495.66" y1="149.21" x2="495.32" y2="149.61" stroke="#f0a020" stroke-width="1.30" stroke-linecap="round"/>
<line x1="493.81" y1="147.23" x2="493.39" y2="147.54" stroke="#f0a020" stroke-width="1.30" stroke-linecap="round"/>
<line x1="492.49" y1="144.86" x2="492.01" y2="145.06" stroke="#f0a020" stroke-width="1.30" stroke-linecap="round"/>
<line x1="491.79" y1="142.25" x2="491.28" y2="142.32" stroke="#f0a020" stroke-width="1.30" stroke-linecap="round"/>
<line x1="491.75" y1="139.54" x2="491.23" y2="139.48" stroke="#f0a020" stroke-width="1.30" stroke-linecap="round"/>
<line x1="492.36" y1="136.90" x2="491.87" y2="136.72" stroke="#f0a020" stroke-width="1.30" stroke-linecap="round"/>
<line x1="493.59" y1="134.48" x2="493.15" y2="134.19" stroke="#f0a020" stroke-width="1.30" stroke-linecap="round"/>
<line x1="495.36" y1="132.44" x2="495.01" y2="132.05" stroke="#f0a020" stroke-width="1.30" stroke-linecap="round"/>
<line x1="497.58" y1="130.89" x2="497.34" y2="130.43" stroke="#f0a020" stroke-width="1.30" stroke-linecap="round"/>
<line x1="500.11" y1="129.92" x2="499.99" y2="129.41" stroke="#f0a020" stroke-width="1.30" stroke-linecap="round"/>
<line x1="502.80" y1="129.58" x2="502.80" y2="129.06" stroke="#f0a020" stroke-width="1.30" stroke-linecap="round"/>
<line x1="505.49" y1="129.92" x2="505.61" y2="129.41" stroke="#2a1a0c" stroke-width="1.30" stroke-linecap="round"/>
<line x1="508.02" y1="130.89" x2="508.26" y2="130.43" stroke="#2a1a0c" stroke-width="1.30" stroke-linecap="round"/>
<line x1="510.24" y1="132.44" x2="510.59" y2="132.05" stroke="#2a1a0c" stroke-width="1.30" stroke-linecap="round"/>
<line x1="512.01" y1="134.48" x2="512.45" y2="134.19" stroke="#2a1a0c" stroke-width="1.30" stroke-linecap="round"/>
<line x1="513.24" y1="136.90" x2="513.73" y2="136.72" stroke="#2a1a0c" stroke-width="1.30" stroke-linecap="round"/>
<line x1="513.85" y1="139.54" x2="514.37" y2="139.48" stroke="#2a1a0c" stroke-width="1.30" stroke-linecap="round"/>
<line x1="513.81" y1="142.25" x2="514.32" y2="142.32" stroke="#2a1a0c" stroke-width="1.30" stroke-linecap="round"/>
<line x1="513.11" y1="144.86" x2="513.59" y2="145.06" stroke="#2a1a0c" stroke-width="1.30" stroke-linecap="round"/>
<line x1="511.79" y1="147.23" x2="512.21" y2="147.54" stroke="#2a1a0c" stroke-width="1.30" stroke-linecap="round"/>
<line x1="509.94" y1="149.21" x2="510.28" y2="149.61" stroke="#2a1a0c" stroke-width="1.30" stroke-linecap="round"/>
<circle cx="502.8" cy="141.35" r="9.32" fill="#070707"/>
<circle cx="502.8" cy="140.7" r="8.32" fill="url(#kg)"/>
<circle cx="502.55" cy="139.45" r="5.82" fill="url(#kc)" stroke="url(#krim)" stroke-width="0.7"/>
<rect x="501.95" y="134.86" width="1.69" height="1.44" rx="0.3" fill="#f0a020"/>
<circle cx="534.5" cy="142.52" r="13.39" fill="#000" opacity="0.3"/>
<circle cx="534.5" cy="140.7" r="13" fill="#151413"/>
<line x1="527.36" y1="149.21" x2="527.02" y2="149.61" stroke="#f0a020" stroke-width="1.30" stroke-linecap="round"/>
<line x1="525.51" y1="147.23" x2="525.09" y2="147.54" stroke="#f0a020" stroke-width="1.30" stroke-linecap="round"/>
<line x1="524.19" y1="144.86" x2="523.71" y2="145.06" stroke="#f0a020" stroke-width="1.30" stroke-linecap="round"/>
<line x1="523.49" y1="142.25" x2="522.98" y2="142.32" stroke="#f0a020" stroke-width="1.30" stroke-linecap="round"/>
<line x1="523.45" y1="139.54" x2="522.93" y2="139.48" stroke="#f0a020" stroke-width="1.30" stroke-linecap="round"/>
<line x1="524.06" y1="136.90" x2="523.57" y2="136.72" stroke="#f0a020" stroke-width="1.30" stroke-linecap="round"/>
<line x1="525.29" y1="134.48" x2="524.85" y2="134.19" stroke="#f0a020" stroke-width="1.30" stroke-linecap="round"/>
<line x1="527.06" y1="132.44" x2="526.71" y2="132.05" stroke="#f0a020" stroke-width="1.30" stroke-linecap="round"/>
<line x1="529.28" y1="130.89" x2="529.04" y2="130.43" stroke="#f0a020" stroke-width="1.30" stroke-linecap="round"/>
<line x1="531.81" y1="129.92" x2="531.69" y2="129.41" stroke="#f0a020" stroke-width="1.30" stroke-linecap="round"/>
<line x1="534.50" y1="129.58" x2="534.50" y2="129.06" stroke="#f0a020" stroke-width="1.30" stroke-linecap="round"/>
<line x1="537.19" y1="129.92" x2="537.31" y2="129.41" stroke="#2a1a0c" stroke-width="1.30" stroke-linecap="round"/>
<line x1="539.72" y1="130.89" x2="539.96" y2="130.43" stroke="#2a1a0c" stroke-width="1.30" stroke-linecap="round"/>
<line x1="541.94" y1="132.44" x2="542.29" y2="132.05" stroke="#2a1a0c" stroke-width="1.30" stroke-linecap="round"/>
<line x1="543.71" y1="134.48" x2="544.15" y2="134.19" stroke="#2a1a0c" stroke-width="1.30" stroke-linecap="round"/>
<line x1="544.94" y1="136.90" x2="545.43" y2="136.72" stroke="#2a1a0c" stroke-width="1.30" stroke-linecap="round"/>
<line x1="545.55" y1="139.54" x2="546.07" y2="139.48" stroke="#2a1a0c" stroke-width="1.30" stroke-linecap="round"/>
<line x1="545.51" y1="142.25" x2="546.02" y2="142.32" stroke="#2a1a0c" stroke-width="1.30" stroke-linecap="round"/>
<line x1="544.81" y1="144.86" x2="545.29" y2="145.06" stroke="#2a1a0c" stroke-width="1.30" stroke-linecap="round"/>
<line x1="543.49" y1="147.23" x2="543.91" y2="147.54" stroke="#2a1a0c" stroke-width="1.30" stroke-linecap="round"/>
<line x1="541.64" y1="149.21" x2="541.98" y2="149.61" stroke="#2a1a0c" stroke-width="1.30" stroke-linecap="round"/>
<circle cx="534.5" cy="141.35" r="9.32" fill="#070707"/>
<circle cx="534.5" cy="140.7" r="8.32" fill="url(#kg)"/>
<circle cx="534.25" cy="139.45" r="5.82" fill="url(#kc)" stroke="url(#krim)" stroke-width="0.7"/>
<rect x="533.65" y="134.86" width="1.69" height="1.44" rx="0.3" fill="#f0a020"/>
<circle cx="567" cy="142.52" r="13.39" fill="#000" opacity="0.3"/>
<circle cx="567" cy="140.7" r="13" fill="#151413"/>
<line x1="559.86" y1="149.21" x2="559.52" y2="149.61" stroke="#f0a020" stroke-width="1.30" stroke-linecap="round"/>
<line x1="558.01" y1="147.23" x2="557.59" y2="147.54" stroke="#f0a020" stroke-width="1.30" stroke-linecap="round"/>
<line x1="556.69" y1="144.86" x2="556.21" y2="145.06" stroke="#f0a020" stroke-width="1.30" stroke-linecap="round"/>
<line x1="555.99" y1="142.25" x2="555.48" y2="142.32" stroke="#f0a020" stroke-width="1.30" stroke-linecap="round"/>
<line x1="555.95" y1="139.54" x2="555.43" y2="139.48" stroke="#f0a020" stroke-width="1.30" stroke-linecap="round"/>
<line x1="556.56" y1="136.90" x2="556.07" y2="136.72" stroke="#f0a020" stroke-width="1.30" stroke-linecap="round"/>
<line x1="557.79" y1="134.48" x2="557.35" y2="134.19" stroke="#f0a020" stroke-width="1.30" stroke-linecap="round"/>
<line x1="559.56" y1="132.44" x2="559.21" y2="132.05" stroke="#f0a020" stroke-width="1.30" stroke-linecap="round"/>
<line x1="561.78" y1="130.89" x2="561.54" y2="130.43" stroke="#f0a020" stroke-width="1.30" stroke-linecap="round"/>
<line x1="564.31" y1="129.92" x2="564.19" y2="129.41" stroke="#f0a020" stroke-width="1.30" stroke-linecap="round"/>
<line x1="567.00" y1="129.58" x2="567.00" y2="129.06" stroke="#f0a020" stroke-width="1.30" stroke-linecap="round"/>
<line x1="569.69" y1="129.92" x2="569.81" y2="129.41" stroke="#f0a020" stroke-width="1.30" stroke-linecap="round"/>
<line x1="572.22" y1="130.89" x2="572.46" y2="130.43" stroke="#f0a020" stroke-width="1.30" stroke-linecap="round"/>
<line x1="574.44" y1="132.44" x2="574.79" y2="132.05" stroke="#f0a020" stroke-width="1.30" stroke-linecap="round"/>
<line x1="576.21" y1="134.48" x2="576.65" y2="134.19" stroke="#f0a020" stroke-width="1.30" stroke-linecap="round"/>
<line x1="577.44" y1="136.90" x2="577.93" y2="136.72" stroke="#f0a020" stroke-width="1.30" stroke-linecap="round"/>
<line x1="578.05" y1="139.54" x2="578.57" y2="139.48" stroke="#f0a020" stroke-width="1.30" stroke-linecap="round"/>
<line x1="578.01" y1="142.25" x2="578.52" y2="142.32" stroke="#2a1a0c" stroke-width="1.30" stroke-linecap="round"/>
<line x1="577.31" y1="144.86" x2="577.79" y2="145.06" stroke="#2a1a0c" stroke-width="1.30" stroke-linecap="round"/>
<line x1="575.99" y1="147.23" x2="576.41" y2="147.54" stroke="#2a1a0c" stroke-width="1.30" stroke-linecap="round"/>
<line x1="574.14" y1="149.21" x2="574.48" y2="149.61" stroke="#2a1a0c" stroke-width="1.30" stroke-linecap="round"/>
<circle cx="567" cy="141.35" r="9.32" fill="#070707"/>
<circle cx="567" cy="140.7" r="8.32" fill="url(#kg)"/>
<circle cx="566.75" cy="139.45" r="5.82" fill="url(#kc)" stroke="url(#krim)" stroke-width="0.7"/>
<rect x="571.15" y="139.82" width="1.69" height="1.44" rx="0.3" fill="#f0a020"/>
<circle cx="599" cy="142.52" r="13.39" fill="#000" opacity="0.3"/>
<circle cx="599" cy="140.7" r="13" fill="#151413"/>
<line x1="591.86" y1="149.21" x2="591.52" y2="149.61" stroke="#f0a020" stroke-width="1.30" stroke-linecap="round"/>
<line x1="590.01" y1="147.23" x2="589.59" y2="147.54" stroke="#f0a020" stroke-width="1.30" stroke-linecap="round"/>
<line x1="588.69" y1="144.86" x2="588.21" y2="145.06" stroke="#f0a020" stroke-width="1.30" stroke-linecap="round"/>
<line x1="587.99" y1="142.25" x2="587.48" y2="142.32" stroke="#f0a020" stroke-width="1.30" stroke-linecap="round"/>
<line x1="587.95" y1="139.54" x2="587.43" y2="139.48" stroke="#f0a020" stroke-width="1.30" stroke-linecap="round"/>
<line x1="588.56" y1="136.90" x2="588.07" y2="136.72" stroke="#f0a020" stroke-width="1.30" stroke-linecap="round"/>
<line x1="589.79" y1="134.48" x2="589.35" y2="134.19" stroke="#f0a020" stroke-width="1.30" stroke-linecap="round"/>
<line x1="591.56" y1="132.44" x2="591.21" y2="132.05" stroke="#f0a020" stroke-width="1.30" stroke-linecap="round"/>
<line x1="593.78" y1="130.89" x2="593.54" y2="130.43" stroke="#f0a020" stroke-width="1.30" stroke-linecap="round"/>
<line x1="596.31" y1="129.92" x2="596.19" y2="129.41" stroke="#f0a020" stroke-width="1.30" stroke-linecap="round"/>
<line x1="599.00" y1="129.58" x2="599.00" y2="129.06" stroke="#f0a020" stroke-width="1.30" stroke-linecap="round"/>
<line x1="601.69" y1="129.92" x2="601.81" y2="129.41" stroke="#f0a020" stroke-width="1.30" stroke-linecap="round"/>
<line x1="604.22" y1="130.89" x2="604.46" y2="130.43" stroke="#f0a020" stroke-width="1.30" stroke-linecap="round"/>
<line x1="606.44" y1="132.44" x2="606.79" y2="132.05" stroke="#f0a020" stroke-width="1.30" stroke-linecap="round"/>
<line x1="608.21" y1="134.48" x2="608.65" y2="134.19" stroke="#f0a020" stroke-width="1.30" stroke-linecap="round"/>
<line x1="609.44" y1="136.90" x2="609.93" y2="136.72" stroke="#f0a020" stroke-width="1.30" stroke-linecap="round"/>
<line x1="610.05" y1="139.54" x2="610.57" y2="139.48" stroke="#2a1a0c" stroke-width="1.30" stroke-linecap="round"/>
<line x1="610.01" y1="142.25" x2="610.52" y2="142.32" stroke="#2a1a0c" stroke-width="1.30" stroke-linecap="round"/>
<line x1="609.31" y1="144.86" x2="609.79" y2="145.06" stroke="#2a1a0c" stroke-width="1.30" stroke-linecap="round"/>
<line x1="607.99" y1="147.23" x2="608.41" y2="147.54" stroke="#2a1a0c" stroke-width="1.30" stroke-linecap="round"/>
<line x1="606.14" y1="149.21" x2="606.48" y2="149.61" stroke="#2a1a0c" stroke-width="1.30" stroke-linecap="round"/>
<circle cx="599" cy="141.35" r="9.32" fill="#070707"/>
<circle cx="599" cy="140.7" r="8.32" fill="url(#kg)"/>
<circle cx="598.75" cy="139.45" r="5.82" fill="url(#kc)" stroke="url(#krim)" stroke-width="0.7"/>
<rect x="603.05" y="138.85" width="1.69" height="1.44" rx="0.3" fill="#f0a020"/>
<circle cx="636.8" cy="149.52" r="18.54" fill="#000" opacity="0.3"/>
<circle cx="636.8" cy="147" r="18" fill="#151413"/>
<circle cx="636.8" cy="147" r="18.30" fill="none" stroke="#333" stroke-width="0.6"/>
<line x1="628.35" y1="157.07" x2="625.92" y2="159.96" stroke="#f0a020" stroke-width="1.15"/>
<line x1="627.16" y1="155.93" x2="624.39" y2="158.50" stroke="#f0a020" stroke-width="1.15"/>
<line x1="626.12" y1="154.66" x2="623.05" y2="156.86" stroke="#f0a020" stroke-width="1.15"/>
<line x1="625.25" y1="153.26" x2="621.92" y2="155.06" stroke="#f0a020" stroke-width="1.15"/>
<line x1="624.56" y1="151.77" x2="621.03" y2="153.14" stroke="#f0a020" stroke-width="1.15"/>
<line x1="624.06" y1="150.20" x2="620.39" y2="151.12" stroke="#f0a020" stroke-width="1.15"/>
<line x1="623.76" y1="148.58" x2="620.00" y2="149.04" stroke="#f0a020" stroke-width="1.15"/>
<line x1="623.66" y1="146.94" x2="619.88" y2="146.92" stroke="#f0a020" stroke-width="1.15"/>
<line x1="623.77" y1="145.30" x2="620.02" y2="144.81" stroke="#f0a020" stroke-width="1.15"/>
<line x1="624.09" y1="143.68" x2="620.43" y2="142.73" stroke="#f0a020" stroke-width="1.15"/>
<line x1="624.60" y1="142.12" x2="621.09" y2="140.72" stroke="#f0a020" stroke-width="1.15"/>
<line x1="625.30" y1="140.63" x2="622.00" y2="138.80" stroke="#f0a020" stroke-width="1.15"/>
<line x1="626.19" y1="139.25" x2="623.14" y2="137.02" stroke="#f0a020" stroke-width="1.15"/>
<line x1="627.24" y1="137.98" x2="624.49" y2="135.39" stroke="#f0a020" stroke-width="1.15"/>
<line x1="628.44" y1="136.86" x2="626.04" y2="133.94" stroke="#f0a020" stroke-width="1.15"/>
<line x1="629.78" y1="135.89" x2="627.76" y2="132.70" stroke="#f0a020" stroke-width="1.15"/>
<line x1="631.22" y1="135.10" x2="629.62" y2="131.68" stroke="#f0a020" stroke-width="1.15"/>
<line x1="632.75" y1="134.50" x2="631.59" y2="130.90" stroke="#f0a020" stroke-width="1.15"/>
<line x1="634.34" y1="134.09" x2="633.64" y2="130.38" stroke="#f0a020" stroke-width="1.15"/>
<line x1="635.98" y1="133.89" x2="635.74" y2="130.11" stroke="#f0a020" stroke-width="1.15"/>
<line x1="637.62" y1="133.89" x2="637.86" y2="130.11" stroke="#2e1a0a" stroke-width="1.15"/>
<line x1="639.26" y1="134.09" x2="639.96" y2="130.38" stroke="#2e1a0a" stroke-width="1.15"/>
<line x1="640.85" y1="134.50" x2="642.01" y2="130.90" stroke="#2e1a0a" stroke-width="1.15"/>
<line x1="642.38" y1="135.10" x2="643.98" y2="131.68" stroke="#2e1a0a" stroke-width="1.15"/>
<line x1="643.82" y1="135.89" x2="645.84" y2="132.70" stroke="#2e1a0a" stroke-width="1.15"/>
<line x1="645.16" y1="136.86" x2="647.56" y2="133.94" stroke="#2e1a0a" stroke-width="1.15"/>
<line x1="646.36" y1="137.98" x2="649.11" y2="135.39" stroke="#2e1a0a" stroke-width="1.15"/>
<line x1="647.41" y1="139.25" x2="650.46" y2="137.02" stroke="#2e1a0a" stroke-width="1.15"/>
<line x1="648.30" y1="140.63" x2="651.60" y2="138.80" stroke="#2e1a0a" stroke-width="1.15"/>
<line x1="649.00" y1="142.12" x2="652.51" y2="140.72" stroke="#2e1a0a" stroke-width="1.15"/>
<line x1="649.51" y1="143.68" x2="653.17" y2="142.73" stroke="#2e1a0a" stroke-width="1.15"/>
<line x1="649.83" y1="145.30" x2="653.58" y2="144.81" stroke="#2e1a0a" stroke-width="1.15"/>
<line x1="649.94" y1="146.94" x2="653.72" y2="146.92" stroke="#2e1a0a" stroke-width="1.15"/>
<line x1="649.84" y1="148.58" x2="653.60" y2="149.04" stroke="#2e1a0a" stroke-width="1.15"/>
<line x1="649.54" y1="150.20" x2="653.21" y2="151.12" stroke="#2e1a0a" stroke-width="1.15"/>
<line x1="649.04" y1="151.77" x2="652.57" y2="153.14" stroke="#2e1a0a" stroke-width="1.15"/>
<line x1="648.35" y1="153.26" x2="651.68" y2="155.06" stroke="#2e1a0a" stroke-width="1.15"/>
<line x1="647.48" y1="154.66" x2="650.55" y2="156.86" stroke="#2e1a0a" stroke-width="1.15"/>
<line x1="646.44" y1="155.93" x2="649.21" y2="158.50" stroke="#2e1a0a" stroke-width="1.15"/>
<line x1="645.25" y1="157.07" x2="647.68" y2="159.96" stroke="#2e1a0a" stroke-width="1.15"/>
<circle cx="636.8" cy="147.90" r="12.70" fill="#070707"/>
<circle cx="636.8" cy="147" r="11.70" fill="url(#kg)"/>
<circle cx="636.45" cy="145.25" r="8.19" fill="url(#kc)" stroke="url(#krim)" stroke-width="0.7"/>
<line x1="636.80" y1="137.87" x2="636.80" y2="135.53" stroke="#f0a020" stroke-width="1.2"/>
<rect x="427.00" y="174.00" width="12.50" height="13.00" fill="#050505" />
<path d="M431.66,177.96 A3.0,3.0 0 1 0 434.84,177.96" fill="none" stroke="#f0a020" stroke-width="1.3"/>
<line x1="433.25" y1="176.6" x2="433.25" y2="179.6" stroke="#f0a020" stroke-width="1.3"/>
<path d="M441.5,178.3 L443.7,180.5 L441.5,182.7 Z M445.9,178.3 L443.7,180.5 L445.9,182.7 Z" fill="#111"/>
<rect x="441.50" y="178.30" width="0.80" height="4.40" fill="#111" />
<rect x="445.10" y="178.30" width="0.80" height="4.40" fill="#111" />
<text x="448.50" y="183.20" font-size="7.0" fill="#1e2418" text-anchor="start" textLength="25.00" lengthAdjust="spacingAndGlyphs" >Zita Rev1</text>
<rect x="648" y="174.6" width="12.7" height="12.8" rx="1.3" fill="#0e0e10"/>
<rect x="648.7" y="175.29999999999998" width="11.3" height="11.4" rx="1" fill="#272a32"/>
<rect x="651.20" y="177.80" width="5.80" height="6.60" fill="#d08c18" />
<rect x="652.10" y="178.70" width="4.00" height="4.80" fill="#6e6a20" />
<rect x="663" y="174.6" width="12.7" height="12.8" rx="1.3" fill="#0e0e10"/>
<rect x="663.7" y="175.29999999999998" width="11.3" height="11.4" rx="1" fill="#272a32"/>
<path d="M666.0500000000001,181.0 L672.65,181.0 M669.35,178.0 L669.35,184.0" stroke="#d8921a" stroke-width="1.8" stroke-linecap="round"/>
<circle cx="669.35" cy="181.0" r="0.9" fill="#404020"/>
<rect x="426.8" y="192" width="182.8" height="42" fill="none" stroke="#7a9658" stroke-width="0.8" rx="1.5"/>
<text x="448.00" y="200.00" font-size="6.3" fill="#222a1a" text-anchor="middle" textLength="21.00" lengthAdjust="spacingAndGlyphs" >Pre Delay</text>
<text x="486.80" y="200.00" font-size="6.3" fill="#222a1a" text-anchor="middle" textLength="9.00" lengthAdjust="spacingAndGlyphs" >Low</text>
<text x="518.00" y="194.00" font-size="6.3" fill="#222a1a" text-anchor="middle" textLength="15.00" lengthAdjust="spacingAndGlyphs" >Reverb</text>
<text x="518.00" y="200.00" font-size="6.3" fill="#222a1a" text-anchor="middle" textLength="14.00" lengthAdjust="spacingAndGlyphs" >Freq X</text>
<text x="549.00" y="200.00" font-size="6.3" fill="#222a1a" text-anchor="middle" textLength="8.00" lengthAdjust="spacingAndGlyphs" >Mid</text>
<text x="588.30" y="200.00" font-size="6.3" fill="#222a1a" text-anchor="middle" textLength="20.00" lengthAdjust="spacingAndGlyphs" >HF Damp</text>
<text x="643.00" y="202.50" font-size="6.3" fill="#222a1a" text-anchor="middle" textLength="17.00" lengthAdjust="spacingAndGlyphs" >Dry/Wet</text>
<circle cx="447.9" cy="217.89" r="13.91" fill="#000" opacity="0.3"/>
<circle cx="447.9" cy="216" r="13.5" fill="#151413"/>
<line x1="440.48" y1="224.84" x2="440.13" y2="225.26" stroke="#f0a020" stroke-width="1.35" stroke-linecap="round"/>
<line x1="438.56" y1="222.78" x2="438.13" y2="223.10" stroke="#f0a020" stroke-width="1.35" stroke-linecap="round"/>
<line x1="437.20" y1="220.32" x2="436.70" y2="220.53" stroke="#f0a020" stroke-width="1.35" stroke-linecap="round"/>
<line x1="436.47" y1="217.61" x2="435.94" y2="217.68" stroke="#f0a020" stroke-width="1.35" stroke-linecap="round"/>
<line x1="436.42" y1="214.79" x2="435.88" y2="214.74" stroke="#f0a020" stroke-width="1.35" stroke-linecap="round"/>
<line x1="437.05" y1="212.05" x2="436.55" y2="211.87" stroke="#f0a020" stroke-width="1.35" stroke-linecap="round"/>
<line x1="438.33" y1="209.55" x2="437.88" y2="209.24" stroke="#f0a020" stroke-width="1.35" stroke-linecap="round"/>
<line x1="440.18" y1="207.42" x2="439.82" y2="207.02" stroke="#f0a020" stroke-width="1.35" stroke-linecap="round"/>
<line x1="442.48" y1="205.81" x2="442.23" y2="205.33" stroke="#f0a020" stroke-width="1.35" stroke-linecap="round"/>
<line x1="445.11" y1="204.80" x2="444.98" y2="204.28" stroke="#f0a020" stroke-width="1.35" stroke-linecap="round"/>
<line x1="447.90" y1="204.46" x2="447.90" y2="203.92" stroke="#f0a020" stroke-width="1.35" stroke-linecap="round"/>
<line x1="450.69" y1="204.80" x2="450.82" y2="204.28" stroke="#2a1a0c" stroke-width="1.35" stroke-linecap="round"/>
<line x1="453.32" y1="205.81" x2="453.57" y2="205.33" stroke="#2a1a0c" stroke-width="1.35" stroke-linecap="round"/>
<line x1="455.62" y1="207.42" x2="455.98" y2="207.02" stroke="#2a1a0c" stroke-width="1.35" stroke-linecap="round"/>
<line x1="457.47" y1="209.55" x2="457.92" y2="209.24" stroke="#2a1a0c" stroke-width="1.35" stroke-linecap="round"/>
<line x1="458.75" y1="212.05" x2="459.25" y2="211.87" stroke="#2a1a0c" stroke-width="1.35" stroke-linecap="round"/>
<line x1="459.38" y1="214.79" x2="459.92" y2="214.74" stroke="#2a1a0c" stroke-width="1.35" stroke-linecap="round"/>
<line x1="459.33" y1="217.61" x2="459.86" y2="217.68" stroke="#2a1a0c" stroke-width="1.35" stroke-linecap="round"/>
<line x1="458.60" y1="220.32" x2="459.10" y2="220.53" stroke="#2a1a0c" stroke-width="1.35" stroke-linecap="round"/>
<line x1="457.24" y1="222.78" x2="457.67" y2="223.10" stroke="#2a1a0c" stroke-width="1.35" stroke-linecap="round"/>
<line x1="455.32" y1="224.84" x2="455.67" y2="225.26" stroke="#2a1a0c" stroke-width="1.35" stroke-linecap="round"/>
<circle cx="447.9" cy="216.68" r="9.64" fill="#070707"/>
<circle cx="447.9" cy="216" r="8.64" fill="url(#kg)"/>
<circle cx="447.64" cy="214.70" r="6.05" fill="url(#kc)" stroke="url(#krim)" stroke-width="0.7"/>
<rect x="447.02" y="209.94" width="1.76" height="1.49" rx="0.3" fill="#f0a020"/>
<circle cx="486.8" cy="217.89" r="13.91" fill="#000" opacity="0.3"/>
<circle cx="486.8" cy="216" r="13.5" fill="#151413"/>
<line x1="479.38" y1="224.84" x2="479.03" y2="225.26" stroke="#f0a020" stroke-width="1.35" stroke-linecap="round"/>
<line x1="477.46" y1="222.78" x2="477.03" y2="223.10" stroke="#f0a020" stroke-width="1.35" stroke-linecap="round"/>
<line x1="476.10" y1="220.32" x2="475.60" y2="220.53" stroke="#f0a020" stroke-width="1.35" stroke-linecap="round"/>
<line x1="475.37" y1="217.61" x2="474.84" y2="217.68" stroke="#f0a020" stroke-width="1.35" stroke-linecap="round"/>
<line x1="475.32" y1="214.79" x2="474.78" y2="214.74" stroke="#f0a020" stroke-width="1.35" stroke-linecap="round"/>
<line x1="475.95" y1="212.05" x2="475.45" y2="211.87" stroke="#f0a020" stroke-width="1.35" stroke-linecap="round"/>
<line x1="477.23" y1="209.55" x2="476.78" y2="209.24" stroke="#f0a020" stroke-width="1.35" stroke-linecap="round"/>
<line x1="479.08" y1="207.42" x2="478.72" y2="207.02" stroke="#f0a020" stroke-width="1.35" stroke-linecap="round"/>
<line x1="481.38" y1="205.81" x2="481.13" y2="205.33" stroke="#f0a020" stroke-width="1.35" stroke-linecap="round"/>
<line x1="484.01" y1="204.80" x2="483.88" y2="204.28" stroke="#f0a020" stroke-width="1.35" stroke-linecap="round"/>
<line x1="486.80" y1="204.46" x2="486.80" y2="203.92" stroke="#f0a020" stroke-width="1.35" stroke-linecap="round"/>
<line x1="489.59" y1="204.80" x2="489.72" y2="204.28" stroke="#2a1a0c" stroke-width="1.35" stroke-linecap="round"/>
<line x1="492.22" y1="205.81" x2="492.47" y2="205.33" stroke="#2a1a0c" stroke-width="1.35" stroke-linecap="round"/>
<line x1="494.52" y1="207.42" x2="494.88" y2="207.02" stroke="#2a1a0c" stroke-width="1.35" stroke-linecap="round"/>
<line x1="496.37" y1="209.55" x2="496.82" y2="209.24" stroke="#2a1a0c" stroke-width="1.35" stroke-linecap="round"/>
<line x1="497.65" y1="212.05" x2="498.15" y2="211.87" stroke="#2a1a0c" stroke-width="1.35" stroke-linecap="round"/>
<line x1="498.28" y1="214.79" x2="498.82" y2="214.74" stroke="#2a1a0c" stroke-width="1.35" stroke-linecap="round"/>
<line x1="498.23" y1="217.61" x2="498.76" y2="217.68" stroke="#2a1a0c" stroke-width="1.35" stroke-linecap="round"/>
<line x1="497.50" y1="220.32" x2="498.00" y2="220.53" stroke="#2a1a0c" stroke-width="1.35" stroke-linecap="round"/>
<line x1="496.14" y1="222.78" x2="496.57" y2="223.10" stroke="#2a1a0c" stroke-width="1.35" stroke-linecap="round"/>
<line x1="494.22" y1="224.84" x2="494.57" y2="225.26" stroke="#2a1a0c" stroke-width="1.35" stroke-linecap="round"/>
<circle cx="486.8" cy="216.68" r="9.64" fill="#070707"/>
<circle cx="486.8" cy="216" r="8.64" fill="url(#kg)"/>
<circle cx="486.54" cy="214.70" r="6.05" fill="url(#kc)" stroke="url(#krim)" stroke-width="0.7"/>
<rect x="485.92" y="209.94" width="1.76" height="1.49" rx="0.3" fill="#f0a020"/>
<circle cx="517.7" cy="217.05" r="7.73" fill="#000" opacity="0.3"/>
<circle cx="517.7" cy="216" r="7.5" fill="#151413"/>
<line x1="513.75" y1="220.71" x2="513.36" y2="221.17" stroke="#f0a020" stroke-width="1.25" stroke-linecap="round"/>
<line x1="512.37" y1="219.07" x2="511.85" y2="219.38" stroke="#f0a020" stroke-width="1.25" stroke-linecap="round"/>
<line x1="511.64" y1="217.07" x2="511.05" y2="217.17" stroke="#f0a020" stroke-width="1.25" stroke-linecap="round"/>
<line x1="511.64" y1="214.93" x2="511.05" y2="214.83" stroke="#f0a020" stroke-width="1.25" stroke-linecap="round"/>
<line x1="512.37" y1="212.93" x2="511.85" y2="212.62" stroke="#f0a020" stroke-width="1.25" stroke-linecap="round"/>
<line x1="513.75" y1="211.29" x2="513.36" y2="210.83" stroke="#f0a020" stroke-width="1.25" stroke-linecap="round"/>
<line x1="515.60" y1="210.22" x2="515.39" y2="209.66" stroke="#f0a020" stroke-width="1.25" stroke-linecap="round"/>
<line x1="517.70" y1="209.85" x2="517.70" y2="209.25" stroke="#f0a020" stroke-width="1.25" stroke-linecap="round"/>
<line x1="519.80" y1="210.22" x2="520.01" y2="209.66" stroke="#2a1a0c" stroke-width="1.25" stroke-linecap="round"/>
<line x1="521.65" y1="211.29" x2="522.04" y2="210.83" stroke="#2a1a0c" stroke-width="1.25" stroke-linecap="round"/>
<line x1="523.03" y1="212.93" x2="523.55" y2="212.62" stroke="#2a1a0c" stroke-width="1.25" stroke-linecap="round"/>
<line x1="523.76" y1="214.93" x2="524.35" y2="214.83" stroke="#2a1a0c" stroke-width="1.25" stroke-linecap="round"/>
<line x1="523.76" y1="217.07" x2="524.35" y2="217.17" stroke="#2a1a0c" stroke-width="1.25" stroke-linecap="round"/>
<line x1="523.03" y1="219.07" x2="523.55" y2="219.38" stroke="#2a1a0c" stroke-width="1.25" stroke-linecap="round"/>
<line x1="521.65" y1="220.71" x2="522.04" y2="221.17" stroke="#2a1a0c" stroke-width="1.25" stroke-linecap="round"/>
<circle cx="517.7" cy="216.38" r="5.80" fill="#070707"/>
<circle cx="517.7" cy="216" r="4.80" fill="url(#kg)"/>
<circle cx="517.56" cy="215.28" r="3.36" fill="url(#kc)" stroke="url(#krim)" stroke-width="0.7"/>
<rect x="517.05" y="212.47" width="1.30" height="1.10" rx="0.3" fill="#f0a020"/>
<circle cx="549" cy="217.89" r="13.91" fill="#000" opacity="0.3"/>
<circle cx="549" cy="216" r="13.5" fill="#151413"/>
<line x1="541.58" y1="224.84" x2="541.23" y2="225.26" stroke="#f0a020" stroke-width="1.35" stroke-linecap="round"/>
<line x1="539.66" y1="222.78" x2="539.23" y2="223.10" stroke="#f0a020" stroke-width="1.35" stroke-linecap="round"/>
<line x1="538.30" y1="220.32" x2="537.80" y2="220.53" stroke="#f0a020" stroke-width="1.35" stroke-linecap="round"/>
<line x1="537.57" y1="217.61" x2="537.04" y2="217.68" stroke="#f0a020" stroke-width="1.35" stroke-linecap="round"/>
<line x1="537.52" y1="214.79" x2="536.98" y2="214.74" stroke="#f0a020" stroke-width="1.35" stroke-linecap="round"/>
<line x1="538.15" y1="212.05" x2="537.65" y2="211.87" stroke="#f0a020" stroke-width="1.35" stroke-linecap="round"/>
<line x1="539.43" y1="209.55" x2="538.98" y2="209.24" stroke="#f0a020" stroke-width="1.35" stroke-linecap="round"/>
<line x1="541.28" y1="207.42" x2="540.92" y2="207.02" stroke="#f0a020" stroke-width="1.35" stroke-linecap="round"/>
<line x1="543.58" y1="205.81" x2="543.33" y2="205.33" stroke="#f0a020" stroke-width="1.35" stroke-linecap="round"/>
<line x1="546.21" y1="204.80" x2="546.08" y2="204.28" stroke="#2a1a0c" stroke-width="1.35" stroke-linecap="round"/>
<line x1="549.00" y1="204.46" x2="549.00" y2="203.92" stroke="#2a1a0c" stroke-width="1.35" stroke-linecap="round"/>
<line x1="551.79" y1="204.80" x2="551.92" y2="204.28" stroke="#2a1a0c" stroke-width="1.35" stroke-linecap="round"/>
<line x1="554.42" y1="205.81" x2="554.67" y2="205.33" stroke="#2a1a0c" stroke-width="1.35" stroke-linecap="round"/>
<line x1="556.72" y1="207.42" x2="557.08" y2="207.02" stroke="#2a1a0c" stroke-width="1.35" stroke-linecap="round"/>
<line x1="558.57" y1="209.55" x2="559.02" y2="209.24" stroke="#2a1a0c" stroke-width="1.35" stroke-linecap="round"/>
<line x1="559.85" y1="212.05" x2="560.35" y2="211.87" stroke="#2a1a0c" stroke-width="1.35" stroke-linecap="round"/>
<line x1="560.48" y1="214.79" x2="561.02" y2="214.74" stroke="#2a1a0c" stroke-width="1.35" stroke-linecap="round"/>
<line x1="560.43" y1="217.61" x2="560.96" y2="217.68" stroke="#2a1a0c" stroke-width="1.35" stroke-linecap="round"/>
<line x1="559.70" y1="220.32" x2="560.20" y2="220.53" stroke="#2a1a0c" stroke-width="1.35" stroke-linecap="round"/>
<line x1="558.34" y1="222.78" x2="558.77" y2="223.10" stroke="#2a1a0c" stroke-width="1.35" stroke-linecap="round"/>
<line x1="556.42" y1="224.84" x2="556.77" y2="225.26" stroke="#2a1a0c" stroke-width="1.35" stroke-linecap="round"/>
<circle cx="549" cy="216.68" r="9.64" fill="#070707"/>
<circle cx="549" cy="216" r="8.64" fill="url(#kg)"/>
<circle cx="548.74" cy="214.70" r="6.05" fill="url(#kc)" stroke="url(#krim)" stroke-width="0.7"/>
<rect x="545.69" y="210.55" width="1.76" height="1.49" rx="0.3" fill="#f0a020"/>
<circle cx="588.3" cy="217.89" r="13.91" fill="#000" opacity="0.3"/>
<circle cx="588.3" cy="216" r="13.5" fill="#151413"/>
<line x1="580.88" y1="224.84" x2="580.53" y2="225.26" stroke="#f0a020" stroke-width="1.35" stroke-linecap="round"/>
<line x1="578.96" y1="222.78" x2="578.53" y2="223.10" stroke="#f0a020" stroke-width="1.35" stroke-linecap="round"/>
<line x1="577.60" y1="220.32" x2="577.10" y2="220.53" stroke="#f0a020" stroke-width="1.35" stroke-linecap="round"/>
<line x1="576.87" y1="217.61" x2="576.34" y2="217.68" stroke="#f0a020" stroke-width="1.35" stroke-linecap="round"/>
<line x1="576.82" y1="214.79" x2="576.28" y2="214.74" stroke="#f0a020" stroke-width="1.35" stroke-linecap="round"/>
<line x1="577.45" y1="212.05" x2="576.95" y2="211.87" stroke="#f0a020" stroke-width="1.35" stroke-linecap="round"/>
<line x1="578.73" y1="209.55" x2="578.28" y2="209.24" stroke="#f0a020" stroke-width="1.35" stroke-linecap="round"/>
<line x1="580.58" y1="207.42" x2="580.22" y2="207.02" stroke="#f0a020" stroke-width="1.35" stroke-linecap="round"/>
<line x1="582.88" y1="205.81" x2="582.63" y2="205.33" stroke="#f0a020" stroke-width="1.35" stroke-linecap="round"/>
<line x1="585.51" y1="204.80" x2="585.38" y2="204.28" stroke="#f0a020" stroke-width="1.35" stroke-linecap="round"/>
<line x1="588.30" y1="204.46" x2="588.30" y2="203.92" stroke="#f0a020" stroke-width="1.35" stroke-linecap="round"/>
<line x1="591.09" y1="204.80" x2="591.22" y2="204.28" stroke="#2a1a0c" stroke-width="1.35" stroke-linecap="round"/>
<line x1="593.72" y1="205.81" x2="593.97" y2="205.33" stroke="#2a1a0c" stroke-width="1.35" stroke-linecap="round"/>
<line x1="596.02" y1="207.42" x2="596.38" y2="207.02" stroke="#2a1a0c" stroke-width="1.35" stroke-linecap="round"/>
<line x1="597.87" y1="209.55" x2="598.32" y2="209.24" stroke="#2a1a0c" stroke-width="1.35" stroke-linecap="round"/>
<line x1="599.15" y1="212.05" x2="599.65" y2="211.87" stroke="#2a1a0c" stroke-width="1.35" stroke-linecap="round"/>
<line x1="599.78" y1="214.79" x2="600.32" y2="214.74" stroke="#2a1a0c" stroke-width="1.35" stroke-linecap="round"/>
<line x1="599.73" y1="217.61" x2="600.26" y2="217.68" stroke="#2a1a0c" stroke-width="1.35" stroke-linecap="round"/>
<line x1="599.00" y1="220.32" x2="599.50" y2="220.53" stroke="#2a1a0c" stroke-width="1.35" stroke-linecap="round"/>
<line x1="597.64" y1="222.78" x2="598.07" y2="223.10" stroke="#2a1a0c" stroke-width="1.35" stroke-linecap="round"/>
<line x1="595.72" y1="224.84" x2="596.07" y2="225.26" stroke="#2a1a0c" stroke-width="1.35" stroke-linecap="round"/>
<circle cx="588.3" cy="216.68" r="9.64" fill="#070707"/>
<circle cx="588.3" cy="216" r="8.64" fill="url(#kg)"/>
<circle cx="588.04" cy="214.70" r="6.05" fill="url(#kc)" stroke="url(#krim)" stroke-width="0.7"/>
<rect x="587.42" y="209.94" width="1.76" height="1.49" rx="0.3" fill="#f0a020"/>
<circle cx="643" cy="219.89" r="13.91" fill="#000" opacity="0.3"/>
<circle cx="643" cy="218" r="13.5" fill="#151413"/>
<line x1="635.58" y1="226.84" x2="635.23" y2="227.26" stroke="#f0a020" stroke-width="1.35" stroke-linecap="round"/>
<line x1="633.66" y1="224.78" x2="633.23" y2="225.10" stroke="#f0a020" stroke-width="1.35" stroke-linecap="round"/>
<line x1="632.30" y1="222.32" x2="631.80" y2="222.53" stroke="#f0a020" stroke-width="1.35" stroke-linecap="round"/>
<line x1="631.57" y1="219.61" x2="631.04" y2="219.68" stroke="#f0a020" stroke-width="1.35" stroke-linecap="round"/>
<line x1="631.52" y1="216.79" x2="630.98" y2="216.74" stroke="#f0a020" stroke-width="1.35" stroke-linecap="round"/>
<line x1="632.15" y1="214.05" x2="631.65" y2="213.87" stroke="#2a1a0c" stroke-width="1.35" stroke-linecap="round"/>
<line x1="633.43" y1="211.55" x2="632.98" y2="211.24" stroke="#2a1a0c" stroke-width="1.35" stroke-linecap="round"/>
<line x1="635.28" y1="209.42" x2="634.92" y2="209.02" stroke="#2a1a0c" stroke-width="1.35" stroke-linecap="round"/>
<line x1="637.58" y1="207.81" x2="637.33" y2="207.33" stroke="#2a1a0c" stroke-width="1.35" stroke-linecap="round"/>
<line x1="640.21" y1="206.80" x2="640.08" y2="206.28" stroke="#2a1a0c" stroke-width="1.35" stroke-linecap="round"/>
<line x1="643.00" y1="206.46" x2="643.00" y2="205.92" stroke="#2a1a0c" stroke-width="1.35" stroke-linecap="round"/>
<line x1="645.79" y1="206.80" x2="645.92" y2="206.28" stroke="#2a1a0c" stroke-width="1.35" stroke-linecap="round"/>
<line x1="648.42" y1="207.81" x2="648.67" y2="207.33" stroke="#2a1a0c" stroke-width="1.35" stroke-linecap="round"/>
<line x1="650.72" y1="209.42" x2="651.08" y2="209.02" stroke="#2a1a0c" stroke-width="1.35" stroke-linecap="round"/>
<line x1="652.57" y1="211.55" x2="653.02" y2="211.24" stroke="#2a1a0c" stroke-width="1.35" stroke-linecap="round"/>
<line x1="653.85" y1="214.05" x2="654.35" y2="213.87" stroke="#2a1a0c" stroke-width="1.35" stroke-linecap="round"/>
<line x1="654.48" y1="216.79" x2="655.02" y2="216.74" stroke="#2a1a0c" stroke-width="1.35" stroke-linecap="round"/>
<line x1="654.43" y1="219.61" x2="654.96" y2="219.68" stroke="#2a1a0c" stroke-width="1.35" stroke-linecap="round"/>
<line x1="653.70" y1="222.32" x2="654.20" y2="222.53" stroke="#2a1a0c" stroke-width="1.35" stroke-linecap="round"/>
<line x1="652.34" y1="224.78" x2="652.77" y2="225.10" stroke="#2a1a0c" stroke-width="1.35" stroke-linecap="round"/>
<line x1="650.42" y1="226.84" x2="650.77" y2="227.26" stroke="#2a1a0c" stroke-width="1.35" stroke-linecap="round"/>
<circle cx="643" cy="218.68" r="9.64" fill="#070707"/>
<circle cx="643" cy="218" r="8.64" fill="url(#kg)"/>
<circle cx="642.74" cy="216.70" r="6.05" fill="url(#kc)" stroke="url(#krim)" stroke-width="0.7"/>
<rect x="637.04" y="216.08" width="1.76" height="1.49" rx="0.3" fill="#f0a020"/>
<rect x="427" y="245.6" width="90" height="24.4" rx="1.5" fill="none" stroke="#2c2c2c" stroke-width="0.8"/>
<rect x="520" y="245.6" width="90" height="24.4" rx="1.5" fill="none" stroke="#2c2c2c" stroke-width="0.8"/>
<text x="471.00" y="246.80" font-size="5.8" fill="#b8b8b8" text-anchor="middle" textLength="15.00" lengthAdjust="spacingAndGlyphs" >Filter 1</text>
<text x="565.00" y="246.80" font-size="5.8" fill="#b8b8b8" text-anchor="middle" textLength="15.00" lengthAdjust="spacingAndGlyphs" >Filter 2</text>
<text x="438.30" y="260.30" font-size="5.8" fill="#c8c8c8" text-anchor="middle" textLength="10.00" lengthAdjust="spacingAndGlyphs" >Freq</text>
<text x="480.00" y="260.30" font-size="5.8" fill="#c8c8c8" text-anchor="middle" textLength="12.00" lengthAdjust="spacingAndGlyphs" >Level</text>
<text x="530.00" y="260.30" font-size="5.8" fill="#c8c8c8" text-anchor="middle" textLength="10.00" lengthAdjust="spacingAndGlyphs" >Freq</text>
<text x="573.00" y="260.30" font-size="5.8" fill="#c8c8c8" text-anchor="middle" textLength="12.00" lengthAdjust="spacingAndGlyphs" >Level</text>
<text x="643.00" y="250.00" font-size="5.8" fill="#c8c8c8" text-anchor="middle" textLength="12.00" lengthAdjust="spacingAndGlyphs" >Level</text>
<circle cx="457" cy="259.05" r="7.73" fill="#000" opacity="0.3"/>
<circle cx="457" cy="258" r="7.5" fill="#151413"/>
<line x1="453.05" y1="262.71" x2="452.66" y2="263.17" stroke="#f0a020" stroke-width="1.25" stroke-linecap="round"/>
<line x1="451.67" y1="261.07" x2="451.15" y2="261.38" stroke="#f0a020" stroke-width="1.25" stroke-linecap="round"/>
<line x1="450.94" y1="259.07" x2="450.35" y2="259.17" stroke="#f0a020" stroke-width="1.25" stroke-linecap="round"/>
<line x1="450.94" y1="256.93" x2="450.35" y2="256.83" stroke="#f0a020" stroke-width="1.25" stroke-linecap="round"/>
<line x1="451.67" y1="254.93" x2="451.15" y2="254.62" stroke="#f0a020" stroke-width="1.25" stroke-linecap="round"/>
<line x1="453.05" y1="253.29" x2="452.66" y2="252.83" stroke="#f0a020" stroke-width="1.25" stroke-linecap="round"/>
<line x1="454.90" y1="252.22" x2="454.69" y2="251.66" stroke="#f0a020" stroke-width="1.25" stroke-linecap="round"/>
<line x1="457.00" y1="251.85" x2="457.00" y2="251.25" stroke="#f0a020" stroke-width="1.25" stroke-linecap="round"/>
<line x1="459.10" y1="252.22" x2="459.31" y2="251.66" stroke="#2a1a0c" stroke-width="1.25" stroke-linecap="round"/>
<line x1="460.95" y1="253.29" x2="461.34" y2="252.83" stroke="#2a1a0c" stroke-width="1.25" stroke-linecap="round"/>
<line x1="462.33" y1="254.93" x2="462.85" y2="254.62" stroke="#2a1a0c" stroke-width="1.25" stroke-linecap="round"/>
<line x1="463.06" y1="256.93" x2="463.65" y2="256.83" stroke="#2a1a0c" stroke-width="1.25" stroke-linecap="round"/>
<line x1="463.06" y1="259.07" x2="463.65" y2="259.17" stroke="#2a1a0c" stroke-width="1.25" stroke-linecap="round"/>
<line x1="462.33" y1="261.07" x2="462.85" y2="261.38" stroke="#2a1a0c" stroke-width="1.25" stroke-linecap="round"/>
<line x1="460.95" y1="262.71" x2="461.34" y2="263.17" stroke="#2a1a0c" stroke-width="1.25" stroke-linecap="round"/>
<circle cx="457" cy="258.38" r="5.80" fill="#070707"/>
<circle cx="457" cy="258" r="4.80" fill="url(#kg)"/>
<circle cx="456.86" cy="257.28" r="3.36" fill="url(#kc)" stroke="url(#krim)" stroke-width="0.7"/>
<rect x="456.35" y="254.47" width="1.30" height="1.10" rx="0.3" fill="#f0a020"/>
<circle cx="500" cy="259.05" r="7.73" fill="#000" opacity="0.3"/>
<circle cx="500" cy="258" r="7.5" fill="#151413"/>
<line x1="496.05" y1="262.71" x2="495.66" y2="263.17" stroke="#f0a020" stroke-width="1.25" stroke-linecap="round"/>
<line x1="494.67" y1="261.07" x2="494.15" y2="261.38" stroke="#f0a020" stroke-width="1.25" stroke-linecap="round"/>
<line x1="493.94" y1="259.07" x2="493.35" y2="259.17" stroke="#f0a020" stroke-width="1.25" stroke-linecap="round"/>
<line x1="493.94" y1="256.93" x2="493.35" y2="256.83" stroke="#f0a020" stroke-width="1.25" stroke-linecap="round"/>
<line x1="494.67" y1="254.93" x2="494.15" y2="254.62" stroke="#f0a020" stroke-width="1.25" stroke-linecap="round"/>
<line x1="496.05" y1="253.29" x2="495.66" y2="252.83" stroke="#f0a020" stroke-width="1.25" stroke-linecap="round"/>
<line x1="497.90" y1="252.22" x2="497.69" y2="251.66" stroke="#f0a020" stroke-width="1.25" stroke-linecap="round"/>
<line x1="500.00" y1="251.85" x2="500.00" y2="251.25" stroke="#f0a020" stroke-width="1.25" stroke-linecap="round"/>
<line x1="502.10" y1="252.22" x2="502.31" y2="251.66" stroke="#2a1a0c" stroke-width="1.25" stroke-linecap="round"/>
<line x1="503.95" y1="253.29" x2="504.34" y2="252.83" stroke="#2a1a0c" stroke-width="1.25" stroke-linecap="round"/>
<line x1="505.33" y1="254.93" x2="505.85" y2="254.62" stroke="#2a1a0c" stroke-width="1.25" stroke-linecap="round"/>
<line x1="506.06" y1="256.93" x2="506.65" y2="256.83" stroke="#2a1a0c" stroke-width="1.25" stroke-linecap="round"/>
<line x1="506.06" y1="259.07" x2="506.65" y2="259.17" stroke="#2a1a0c" stroke-width="1.25" stroke-linecap="round"/>
<line x1="505.33" y1="261.07" x2="505.85" y2="261.38" stroke="#2a1a0c" stroke-width="1.25" stroke-linecap="round"/>
<line x1="503.95" y1="262.71" x2="504.34" y2="263.17" stroke="#2a1a0c" stroke-width="1.25" stroke-linecap="round"/>
<circle cx="500" cy="258.38" r="5.80" fill="#070707"/>
<circle cx="500" cy="258" r="4.80" fill="url(#kg)"/>
<circle cx="499.86" cy="257.28" r="3.36" fill="url(#kc)" stroke="url(#krim)" stroke-width="0.7"/>
<rect x="499.35" y="254.47" width="1.30" height="1.10" rx="0.3" fill="#f0a020"/>
<circle cx="550" cy="259.05" r="7.73" fill="#000" opacity="0.3"/>
<circle cx="550" cy="258" r="7.5" fill="#151413"/>
<line x1="546.05" y1="262.71" x2="545.66" y2="263.17" stroke="#f0a020" stroke-width="1.25" stroke-linecap="round"/>
<line x1="544.67" y1="261.07" x2="544.15" y2="261.38" stroke="#f0a020" stroke-width="1.25" stroke-linecap="round"/>
<line x1="543.94" y1="259.07" x2="543.35" y2="259.17" stroke="#f0a020" stroke-width="1.25" stroke-linecap="round"/>
<line x1="543.94" y1="256.93" x2="543.35" y2="256.83" stroke="#2a1a0c" stroke-width="1.25" stroke-linecap="round"/>
<line x1="544.67" y1="254.93" x2="544.15" y2="254.62" stroke="#2a1a0c" stroke-width="1.25" stroke-linecap="round"/>
<line x1="546.05" y1="253.29" x2="545.66" y2="252.83" stroke="#2a1a0c" stroke-width="1.25" stroke-linecap="round"/>
<line x1="547.90" y1="252.22" x2="547.69" y2="251.66" stroke="#2a1a0c" stroke-width="1.25" stroke-linecap="round"/>
<line x1="550.00" y1="251.85" x2="550.00" y2="251.25" stroke="#2a1a0c" stroke-width="1.25" stroke-linecap="round"/>
<line x1="552.10" y1="252.22" x2="552.31" y2="251.66" stroke="#2a1a0c" stroke-width="1.25" stroke-linecap="round"/>
<line x1="553.95" y1="253.29" x2="554.34" y2="252.83" stroke="#2a1a0c" stroke-width="1.25" stroke-linecap="round"/>
<line x1="555.33" y1="254.93" x2="555.85" y2="254.62" stroke="#2a1a0c" stroke-width="1.25" stroke-linecap="round"/>
<line x1="556.06" y1="256.93" x2="556.65" y2="256.83" stroke="#2a1a0c" stroke-width="1.25" stroke-linecap="round"/>
<line x1="556.06" y1="259.07" x2="556.65" y2="259.17" stroke="#2a1a0c" stroke-width="1.25" stroke-linecap="round"/>
<line x1="555.33" y1="261.07" x2="555.85" y2="261.38" stroke="#2a1a0c" stroke-width="1.25" stroke-linecap="round"/>
<line x1="553.95" y1="262.71" x2="554.34" y2="263.17" stroke="#2a1a0c" stroke-width="1.25" stroke-linecap="round"/>
<circle cx="550" cy="258.38" r="5.80" fill="#070707"/>
<circle cx="550" cy="258" r="4.80" fill="url(#kg)"/>
<circle cx="549.86" cy="257.28" r="3.36" fill="url(#kc)" stroke="url(#krim)" stroke-width="0.7"/>
<rect x="546.49" y="257.05" width="1.30" height="1.10" rx="0.3" fill="#f0a020"/>
<circle cx="593.6" cy="259.05" r="7.73" fill="#000" opacity="0.3"/>
<circle cx="593.6" cy="258" r="7.5" fill="#151413"/>
<line x1="589.65" y1="262.71" x2="589.26" y2="263.17" stroke="#f0a020" stroke-width="1.25" stroke-linecap="round"/>
<line x1="588.27" y1="261.07" x2="587.75" y2="261.38" stroke="#f0a020" stroke-width="1.25" stroke-linecap="round"/>
<line x1="587.54" y1="259.07" x2="586.95" y2="259.17" stroke="#f0a020" stroke-width="1.25" stroke-linecap="round"/>
<line x1="587.54" y1="256.93" x2="586.95" y2="256.83" stroke="#f0a020" stroke-width="1.25" stroke-linecap="round"/>
<line x1="588.27" y1="254.93" x2="587.75" y2="254.62" stroke="#f0a020" stroke-width="1.25" stroke-linecap="round"/>
<line x1="589.65" y1="253.29" x2="589.26" y2="252.83" stroke="#f0a020" stroke-width="1.25" stroke-linecap="round"/>
<line x1="591.50" y1="252.22" x2="591.29" y2="251.66" stroke="#f0a020" stroke-width="1.25" stroke-linecap="round"/>
<line x1="593.60" y1="251.85" x2="593.60" y2="251.25" stroke="#f0a020" stroke-width="1.25" stroke-linecap="round"/>
<line x1="595.70" y1="252.22" x2="595.91" y2="251.66" stroke="#2a1a0c" stroke-width="1.25" stroke-linecap="round"/>
<line x1="597.55" y1="253.29" x2="597.94" y2="252.83" stroke="#2a1a0c" stroke-width="1.25" stroke-linecap="round"/>
<line x1="598.93" y1="254.93" x2="599.45" y2="254.62" stroke="#2a1a0c" stroke-width="1.25" stroke-linecap="round"/>
<line x1="599.66" y1="256.93" x2="600.25" y2="256.83" stroke="#2a1a0c" stroke-width="1.25" stroke-linecap="round"/>
<line x1="599.66" y1="259.07" x2="600.25" y2="259.17" stroke="#2a1a0c" stroke-width="1.25" stroke-linecap="round"/>
<line x1="598.93" y1="261.07" x2="599.45" y2="261.38" stroke="#2a1a0c" stroke-width="1.25" stroke-linecap="round"/>
<line x1="597.55" y1="262.71" x2="597.94" y2="263.17" stroke="#2a1a0c" stroke-width="1.25" stroke-linecap="round"/>
<circle cx="593.6" cy="258.38" r="5.80" fill="#070707"/>
<circle cx="593.6" cy="258" r="4.80" fill="url(#kg)"/>
<circle cx="593.46" cy="257.28" r="3.36" fill="url(#kc)" stroke="url(#krim)" stroke-width="0.7"/>
<rect x="592.95" y="254.47" width="1.30" height="1.10" rx="0.3" fill="#f0a020"/>
<circle cx="643" cy="266.82" r="13.39" fill="#000" opacity="0.3"/>
<circle cx="643" cy="265" r="13" fill="#151413"/>
<line x1="635.86" y1="273.51" x2="635.52" y2="273.91" stroke="#f0a020" stroke-width="1.30" stroke-linecap="round"/>
<line x1="634.08" y1="271.64" x2="633.67" y2="271.95" stroke="#f0a020" stroke-width="1.30" stroke-linecap="round"/>
<line x1="632.79" y1="269.40" x2="632.32" y2="269.61" stroke="#f0a020" stroke-width="1.30" stroke-linecap="round"/>
<line x1="632.05" y1="266.93" x2="631.54" y2="267.02" stroke="#f0a020" stroke-width="1.30" stroke-linecap="round"/>
<line x1="631.90" y1="264.35" x2="631.38" y2="264.32" stroke="#f0a020" stroke-width="1.30" stroke-linecap="round"/>
<line x1="632.35" y1="261.81" x2="631.85" y2="261.66" stroke="#f0a020" stroke-width="1.30" stroke-linecap="round"/>
<line x1="633.37" y1="259.44" x2="632.92" y2="259.18" stroke="#f0a020" stroke-width="1.30" stroke-linecap="round"/>
<line x1="634.92" y1="257.37" x2="634.54" y2="257.02" stroke="#f0a020" stroke-width="1.30" stroke-linecap="round"/>
<line x1="636.89" y1="255.71" x2="636.61" y2="255.28" stroke="#f0a020" stroke-width="1.30" stroke-linecap="round"/>
<line x1="639.20" y1="254.56" x2="639.02" y2="254.07" stroke="#f0a020" stroke-width="1.30" stroke-linecap="round"/>
<line x1="641.71" y1="253.96" x2="641.65" y2="253.44" stroke="#f0a020" stroke-width="1.30" stroke-linecap="round"/>
<line x1="644.29" y1="253.96" x2="644.35" y2="253.44" stroke="#f0a020" stroke-width="1.30" stroke-linecap="round"/>
<line x1="646.80" y1="254.56" x2="646.98" y2="254.07" stroke="#f0a020" stroke-width="1.30" stroke-linecap="round"/>
<line x1="649.11" y1="255.71" x2="649.39" y2="255.28" stroke="#2a1a0c" stroke-width="1.30" stroke-linecap="round"/>
<line x1="651.08" y1="257.37" x2="651.46" y2="257.02" stroke="#2a1a0c" stroke-width="1.30" stroke-linecap="round"/>
<line x1="652.63" y1="259.44" x2="653.08" y2="259.18" stroke="#2a1a0c" stroke-width="1.30" stroke-linecap="round"/>
<line x1="653.65" y1="261.81" x2="654.15" y2="261.66" stroke="#2a1a0c" stroke-width="1.30" stroke-linecap="round"/>
<line x1="654.10" y1="264.35" x2="654.62" y2="264.32" stroke="#2a1a0c" stroke-width="1.30" stroke-linecap="round"/>
<line x1="653.95" y1="266.93" x2="654.46" y2="267.02" stroke="#2a1a0c" stroke-width="1.30" stroke-linecap="round"/>
<line x1="653.21" y1="269.40" x2="653.68" y2="269.61" stroke="#2a1a0c" stroke-width="1.30" stroke-linecap="round"/>
<line x1="651.92" y1="271.64" x2="652.33" y2="271.95" stroke="#2a1a0c" stroke-width="1.30" stroke-linecap="round"/>
<line x1="650.14" y1="273.51" x2="650.48" y2="273.91" stroke="#2a1a0c" stroke-width="1.30" stroke-linecap="round"/>
<circle cx="643" cy="265.65" r="9.32" fill="#070707"/>
<circle cx="643" cy="265" r="8.32" fill="url(#kg)"/>
<circle cx="642.75" cy="263.75" r="5.82" fill="url(#kc)" stroke="url(#krim)" stroke-width="0.7"/>
<rect x="644.50" y="259.75" width="1.69" height="1.44" rx="0.3" fill="#f0a020"/>
<rect x="692.40" y="34.90" width="1.80" height="265.00" fill="#151515" />
<rect x="693.80" y="34.90" width="5.60" height="265.00" fill="#2a2a2a" />
<rect x="694.40" y="35.50" width="4.60" height="264.00" fill="#373737" />
<text x="267.80" y="312.00" font-size="7.2" fill="#f0f0f0" text-anchor="middle" textLength="15.00" lengthAdjust="spacingAndGlyphs" >Bank</text>
<text x="557.80" y="312.00" font-size="7.2" fill="#f0f0f0" text-anchor="middle" textLength="28.50" lengthAdjust="spacingAndGlyphs" >kokoko3k</text>
<rect x="52.60" y="319.00" width="65.40" height="12.30" fill="#2d2d2d" />
<text x="85.30" y="327.80" font-size="7.7" fill="#f0f0f0" text-anchor="middle" textLength="42.45" lengthAdjust="spacingAndGlyphs" >Save changes</text>
<rect x="52.60" y="335.00" width="65.40" height="12.30" fill="#2d2d2d" />
<text x="85.30" y="343.80" font-size="7.7" fill="#f0f0f0" text-anchor="middle" textLength="30.53" lengthAdjust="spacingAndGlyphs" >New Bank</text>
<rect x="52.60" y="350.40" width="65.40" height="12.30" fill="#2d2d2d" />
<text x="85.30" y="359.20" font-size="7.7" fill="#f0f0f0" text-anchor="middle" textLength="27.18" lengthAdjust="spacingAndGlyphs" >Organize</text>
<rect x="52.60" y="366.00" width="65.40" height="12.30" fill="#2d2d2d" />
<text x="85.30" y="374.80" font-size="7.7" fill="#f0f0f0" text-anchor="middle" textLength="19.36" lengthAdjust="spacingAndGlyphs" >Online</text>
<rect x="120.60" y="315.60" width="287.90" height="89.00" fill="#000" />
<rect x="120.60" y="334.20" width="287.90" height="10.20" fill="#383838" />
<text x="134.00" y="321.50" font-size="8.6" fill="#f0f0f0" text-anchor="start" textLength="6.34" lengthAdjust="spacingAndGlyphs" >P:</text>
<text x="144.94" y="321.50" font-size="8.6" fill="#f0f0f0" text-anchor="start" textLength="33.17" lengthAdjust="spacingAndGlyphs" >Nevermore</text>
<text x="134.00" y="331.85" font-size="8.6" fill="#f0f0f0" text-anchor="start" textLength="7.08" lengthAdjust="spacingAndGlyphs" >O:</text>
<text x="145.69" y="331.85" font-size="8.6" fill="#f0f0f0" text-anchor="start" textLength="7.83" lengthAdjust="spacingAndGlyphs" >JP</text>
<text x="134.00" y="342.20" font-size="8.6" fill="#e89a20" text-anchor="start" textLength="6.71" lengthAdjust="spacingAndGlyphs" >N:</text>
<text x="145.31" y="342.20" font-size="8.6" fill="#e89a20" text-anchor="start" textLength="28.34" lengthAdjust="spacingAndGlyphs" >kokoko3k</text>
<text x="134.00" y="352.55" font-size="8.6" fill="#f0f0f0" text-anchor="start" textLength="7.45" lengthAdjust="spacingAndGlyphs" >M:</text>
<text x="146.06" y="352.55" font-size="8.6" fill="#f0f0f0" text-anchor="start" textLength="27.22" lengthAdjust="spacingAndGlyphs" >zettberlin</text>
<text x="134.00" y="362.90" font-size="8.6" fill="#f0f0f0" text-anchor="start" textLength="5.59" lengthAdjust="spacingAndGlyphs" >L:</text>
<text x="144.20" y="362.90" font-size="8.6" fill="#f0f0f0" text-anchor="start" textLength="14.92" lengthAdjust="spacingAndGlyphs" >dope</text>
<text x="134.00" y="373.25" font-size="8.6" fill="#f0f0f0" text-anchor="start" textLength="6.34" lengthAdjust="spacingAndGlyphs" >K:</text>
<text x="144.94" y="373.25" font-size="8.6" fill="#f0f0f0" text-anchor="start" textLength="30.57" lengthAdjust="spacingAndGlyphs" >highway-1</text>
<text x="134.00" y="383.60" font-size="8.6" fill="#f0f0f0" text-anchor="start" textLength="5.22" lengthAdjust="spacingAndGlyphs" >J:</text>
<text x="143.82" y="383.60" font-size="8.6" fill="#f0f0f0" text-anchor="start" textLength="22.00" lengthAdjust="spacingAndGlyphs" >journey</text>
<text x="134.00" y="393.95" font-size="8.6" fill="#f0f0f0" text-anchor="start" textLength="3.73" lengthAdjust="spacingAndGlyphs" >I:</text>
<text x="142.33" y="393.95" font-size="8.6" fill="#f0f0f0" text-anchor="start" textLength="20.50" lengthAdjust="spacingAndGlyphs" >warrior</text>
<text x="134.00" y="404.30" font-size="8.6" fill="#f0f0f0" text-anchor="start" textLength="6.71" lengthAdjust="spacingAndGlyphs" >H:</text>
<text x="145.31" y="404.30" font-size="8.6" fill="#f0f0f0" text-anchor="start" textLength="22.37" lengthAdjust="spacingAndGlyphs" >tombed</text>
<rect x="408.50" y="315.60" width="6.70" height="89.00" fill="#262626" />
<rect x="409.50" y="343.00" width="4.70" height="32.00" fill="#444" />
<rect x="417.00" y="315.60" width="276.00" height="89.00" fill="#000" />
<text x="419.20" y="324.30" font-size="8.6" fill="#f01818" text-anchor="start" textLength="5.59" lengthAdjust="spacingAndGlyphs" >1:</text>
<text x="428.60" y="324.30" font-size="8.6" fill="#f01818" text-anchor="start" textLength="15.28" lengthAdjust="spacingAndGlyphs" >Dist1</text>
<text x="419.20" y="334.68" font-size="8.6" fill="#f0f0f0" text-anchor="start" textLength="5.59" lengthAdjust="spacingAndGlyphs" >2:</text>
<text x="428.60" y="334.68" font-size="8.6" fill="#f0f0f0" text-anchor="start" textLength="15.28" lengthAdjust="spacingAndGlyphs" >Dist2</text>
<text x="419.20" y="345.06" font-size="8.6" fill="#f0f0f0" text-anchor="start" textLength="5.59" lengthAdjust="spacingAndGlyphs" >3:</text>
<text x="428.60" y="345.06" font-size="8.6" fill="#f0f0f0" text-anchor="start" textLength="32.43" lengthAdjust="spacingAndGlyphs" >OverSharp</text>
<text x="419.20" y="355.44" font-size="8.6" fill="#f0f0f0" text-anchor="start" textLength="5.59" lengthAdjust="spacingAndGlyphs" >4:</text>
<text x="428.60" y="355.44" font-size="8.6" fill="#f0f0f0" text-anchor="start" textLength="16.40" lengthAdjust="spacingAndGlyphs" >Metal</text>
<text x="419.20" y="365.82" font-size="8.6" fill="#f0f0f0" text-anchor="start" textLength="5.59" lengthAdjust="spacingAndGlyphs" >5:</text>
<text x="428.60" y="365.82" font-size="8.6" fill="#f0f0f0" text-anchor="start" textLength="41.01" lengthAdjust="spacingAndGlyphs" >Chorus Clean</text>
<text x="419.20" y="376.20" font-size="8.6" fill="#f0f0f0" text-anchor="start" textLength="5.59" lengthAdjust="spacingAndGlyphs" >6:</text>
<text x="428.60" y="376.20" font-size="8.6" fill="#f0f0f0" text-anchor="start" textLength="26.85" lengthAdjust="spacingAndGlyphs" >The King</text>
<text x="419.20" y="386.58" font-size="8.6" fill="#f0f0f0" text-anchor="start" textLength="5.59" lengthAdjust="spacingAndGlyphs" >7:</text>
<text x="428.60" y="386.58" font-size="8.6" fill="#f0f0f0" text-anchor="start" textLength="41.38" lengthAdjust="spacingAndGlyphs" >Straits-fingers</text>
<text x="419.20" y="396.96" font-size="8.6" fill="#f0f0f0" text-anchor="start" textLength="5.59" lengthAdjust="spacingAndGlyphs" >8:</text>
<text x="428.60" y="396.96" font-size="8.6" fill="#f0f0f0" text-anchor="start" textLength="36.03" lengthAdjust="spacingAndGlyphs" >Bass... FAT!</text>
<text x="419.20" y="407.34" font-size="8.6" fill="#f0f0f0" text-anchor="start" textLength="26.10" lengthAdjust="spacingAndGlyphs" >&lt;PREV&gt;</text>
<rect x="415.20" y="404.50" width="280.00" height="4.00" fill="#1d1d1d" />
<rect x="693.00" y="315.60" width="7.00" height="89.00" fill="#262626" />
<rect x="694.00" y="316.50" width="5.00" height="83.00" fill="#444" />
<rect x="52.60" y="408.50" width="65.00" height="11.20" fill="#000" />
<text x="85.20" y="417.20" font-size="7.7" fill="#f0f0f0" text-anchor="middle" textLength="49.00" lengthAdjust="spacingAndGlyphs" >Preset Selection</text>
<rect x="120.60" y="408.50" width="510.40" height="11.20" fill="#000" />
<text x="123.00" y="417.20" font-size="7.7" fill="#f0f0f0" text-anchor="start" textLength="48.58" lengthAdjust="spacingAndGlyphs" >kokoko3k / Dist1</text>
<path d="M633.8,413.5 L638.5,410.8 L639.5,413.5 L638.5,416.2 Z M645.8,413.5 L641.1,410.8 L640.1,413.5 L641.1,416.2 Z" fill="#f0d818"/>
<path d="M654.6,410.6 A4.7,4.7 0 1 0 659.4,410.6" fill="none" stroke="#78c848" stroke-width="1.7"/><line x1="657" y1="408.2" x2="657" y2="414" stroke="#78c848" stroke-width="1.7"/>
<path d="M668.8,413.8 L673.5,410.8 L674.3,413.8 L673.5,416.8 Z M680.2,413.8 L675.5,410.8 L674.7,413.8 L675.5,416.8 Z" fill="#6cc040"/>
<rect x="686" y="409" width="10" height="9.6" rx="1.3" fill="#8a8a8a"/>
<rect x="687" y="410" width="8" height="7.6" rx="0.8" fill="#3a3a3a"/>
<rect x="688.00" y="411.50" width="6.00" height="1.60" fill="#9a9a9a" />
<rect x="688.00" y="414.30" width="6.00" height="1.60" fill="#9a9a9a" />
</svg></body></html>
